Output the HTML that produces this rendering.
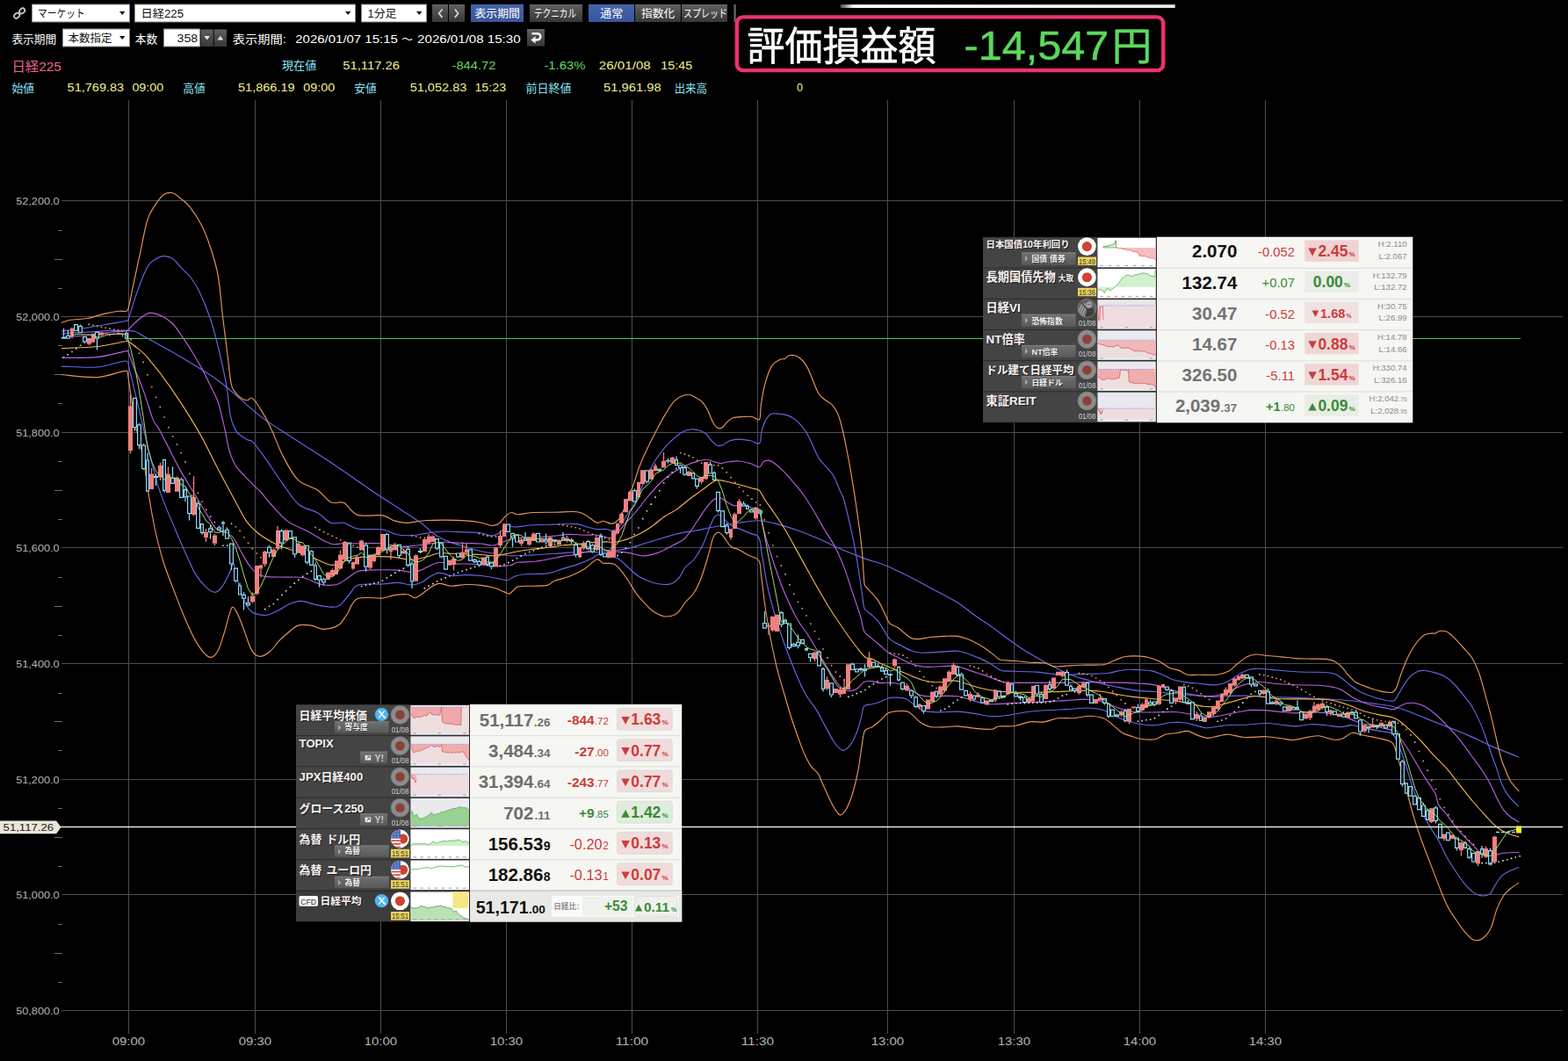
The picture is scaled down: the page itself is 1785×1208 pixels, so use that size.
<!DOCTYPE html>
<html lang="ja"><head><meta charset="utf-8"><title>日経225 チャート</title>
<style>html,body{margin:0;padding:0;background:#000;overflow:hidden}svg{display:block}text{font-family:"Liberation Sans","Noto Sans CJK JP",sans-serif}</style>
</head><body>
<svg width="1785" height="1208" viewBox="0 0 1785 1208">
<rect width="1785" height="1208" fill="#000"/>
<g stroke="#4c4c56" stroke-width="1" shape-rendering="crispEdges">
<line x1="146.5" y1="114" x2="146.5" y2="1177"/>
<line x1="290.5" y1="114" x2="290.5" y2="1177"/>
<line x1="433.5" y1="114" x2="433.5" y2="1177"/>
<line x1="576.5" y1="114" x2="576.5" y2="1177"/>
<line x1="719.5" y1="114" x2="719.5" y2="1177"/>
<line x1="862.5" y1="114" x2="862.5" y2="1177"/>
<line x1="1010.5" y1="114" x2="1010.5" y2="1177"/>
<line x1="1154.5" y1="114" x2="1154.5" y2="1177"/>
<line x1="1297.5" y1="114" x2="1297.5" y2="1177"/>
<line x1="1440.5" y1="114" x2="1440.5" y2="1177"/>
<line x1="70" y1="228.5" x2="1779" y2="228.5"/>
<line x1="70" y1="360.5" x2="1779" y2="360.5"/>
<line x1="70" y1="492.5" x2="1779" y2="492.5"/>
<line x1="70" y1="623.5" x2="1779" y2="623.5"/>
<line x1="70" y1="755.5" x2="1779" y2="755.5"/>
<line x1="70" y1="887.5" x2="1779" y2="887.5"/>
<line x1="70" y1="1018.5" x2="1779" y2="1018.5"/>
<line x1="70" y1="1150.5" x2="1779" y2="1150.5"/>
</g>
<g stroke="#6a6a72" stroke-width="1" shape-rendering="crispEdges">
<line x1="66" y1="262.5" x2="71" y2="262.5"/>
<line x1="62" y1="295.5" x2="71" y2="295.5"/>
<line x1="66" y1="328.5" x2="71" y2="328.5"/>
<line x1="66" y1="393.5" x2="71" y2="393.5"/>
<line x1="62" y1="426.5" x2="71" y2="426.5"/>
<line x1="66" y1="459.5" x2="71" y2="459.5"/>
<line x1="66" y1="525.5" x2="71" y2="525.5"/>
<line x1="62" y1="558.5" x2="71" y2="558.5"/>
<line x1="66" y1="591.5" x2="71" y2="591.5"/>
<line x1="66" y1="657.5" x2="71" y2="657.5"/>
<line x1="62" y1="690.5" x2="71" y2="690.5"/>
<line x1="66" y1="723.5" x2="71" y2="723.5"/>
<line x1="66" y1="789.5" x2="71" y2="789.5"/>
<line x1="62" y1="821.5" x2="71" y2="821.5"/>
<line x1="66" y1="854.5" x2="71" y2="854.5"/>
<line x1="66" y1="920.5" x2="71" y2="920.5"/>
<line x1="62" y1="953.5" x2="71" y2="953.5"/>
<line x1="66" y1="986.5" x2="71" y2="986.5"/>
<line x1="66" y1="1052.5" x2="71" y2="1052.5"/>
<line x1="62" y1="1085.5" x2="71" y2="1085.5"/>
<line x1="66" y1="1118.5" x2="71" y2="1118.5"/>
</g>
<text x="18.2" y="232.7" font-size="11.4" fill="#b4b4b4" textLength="49.5" lengthAdjust="spacingAndGlyphs">52,200.0</text>
<text x="18.2" y="364.7" font-size="11.4" fill="#b4b4b4" textLength="49.5" lengthAdjust="spacingAndGlyphs">52,000.0</text>
<text x="18.2" y="496.7" font-size="11.4" fill="#b4b4b4" textLength="49.5" lengthAdjust="spacingAndGlyphs">51,800.0</text>
<text x="18.2" y="627.7" font-size="11.4" fill="#b4b4b4" textLength="49.5" lengthAdjust="spacingAndGlyphs">51,600.0</text>
<text x="18.2" y="759.7" font-size="11.4" fill="#b4b4b4" textLength="49.5" lengthAdjust="spacingAndGlyphs">51,400.0</text>
<text x="18.2" y="891.7" font-size="11.4" fill="#b4b4b4" textLength="49.5" lengthAdjust="spacingAndGlyphs">51,200.0</text>
<text x="18.2" y="1022.7" font-size="11.4" fill="#b4b4b4" textLength="49.5" lengthAdjust="spacingAndGlyphs">51,000.0</text>
<text x="18.2" y="1154.7" font-size="11.4" fill="#b4b4b4" textLength="49.5" lengthAdjust="spacingAndGlyphs">50,800.0</text>
<text x="127.7" y="1190.4" font-size="12.3" fill="#b4b4b4" textLength="37.4" lengthAdjust="spacingAndGlyphs">09:00</text>
<text x="271.7" y="1190.4" font-size="12.3" fill="#b4b4b4" textLength="37.4" lengthAdjust="spacingAndGlyphs">09:30</text>
<text x="414.7" y="1190.4" font-size="12.3" fill="#b4b4b4" textLength="37.4" lengthAdjust="spacingAndGlyphs">10:00</text>
<text x="557.7" y="1190.4" font-size="12.3" fill="#b4b4b4" textLength="37.4" lengthAdjust="spacingAndGlyphs">10:30</text>
<text x="700.7" y="1190.4" font-size="12.3" fill="#b4b4b4" textLength="37.4" lengthAdjust="spacingAndGlyphs">11:00</text>
<text x="843.7" y="1190.4" font-size="12.3" fill="#b4b4b4" textLength="37.4" lengthAdjust="spacingAndGlyphs">11:30</text>
<text x="991.7" y="1190.4" font-size="12.3" fill="#b4b4b4" textLength="37.4" lengthAdjust="spacingAndGlyphs">13:00</text>
<text x="1135.7" y="1190.4" font-size="12.3" fill="#b4b4b4" textLength="37.4" lengthAdjust="spacingAndGlyphs">13:30</text>
<text x="1278.7" y="1190.4" font-size="12.3" fill="#b4b4b4" textLength="37.4" lengthAdjust="spacingAndGlyphs">14:00</text>
<text x="1421.7" y="1190.4" font-size="12.3" fill="#b4b4b4" textLength="37.4" lengthAdjust="spacingAndGlyphs">14:30</text>
<line x1="146" y1="385.5" x2="1731" y2="385.5" stroke="#4fc84f" stroke-width="1.2"/>
<path d="M70.0,380.0C74.2,379.7 82.3,379.0 95.0,378.4C107.7,377.8 133.9,375.3 146.0,376.4C158.1,377.5 153.5,377.6 167.6,385.1C181.7,392.6 215.9,412.2 230.8,421.4C245.7,430.5 247.5,432.4 257.0,440.0C266.5,447.6 280.7,460.8 287.9,466.9C295.1,473.0 294.4,472.6 300.0,476.6C305.6,480.6 312.3,485.1 321.5,491.1C330.7,497.1 345.4,506.3 355.1,512.6C364.9,518.9 368.3,520.8 380.0,528.7C391.7,536.6 408.5,548.8 425.2,560.0C441.9,571.2 469.2,588.5 480.0,596.0C490.1,603.5 486.7,602.4 490.1,605.0C493.5,607.6 496.3,609.7 500.2,611.8C504.1,613.9 508.6,615.8 513.6,617.6C518.6,619.4 524.8,621.0 530.4,622.7C536.0,624.4 541.6,626.4 547.2,627.7C552.8,629.0 558.4,629.4 564.0,630.3C569.6,631.1 573.8,632.5 580.8,632.8C587.8,633.1 597.7,632.3 606.1,631.9C614.5,631.5 622.9,630.8 631.3,630.3C639.7,629.8 648.1,628.9 656.5,628.6C664.9,628.3 674.7,628.9 681.7,628.6C688.7,628.3 692.9,627.6 698.5,626.9C704.1,626.2 709.7,625.7 715.3,624.4C720.9,623.1 726.5,621.0 732.1,619.3C737.7,617.6 743.3,616.0 748.9,614.3C754.5,612.6 760.5,610.6 765.7,609.2C770.9,607.8 776.0,606.7 780.0,605.9C784.0,605.1 784.1,605.6 790.0,604.5C795.9,603.4 806.8,601.0 815.2,599.5C823.6,598.0 832.3,596.4 840.4,595.3C848.5,594.2 856.9,592.7 863.9,592.8C870.9,592.9 875.1,594.3 882.4,596.1C889.7,597.9 899.2,600.8 907.6,603.7C916.0,606.7 924.5,610.2 932.9,613.8C941.3,617.4 949.7,621.9 958.1,625.5C966.5,629.1 974.9,632.5 983.3,635.6C991.7,638.7 1000.1,640.6 1008.5,644.0C1016.9,647.4 1025.3,651.6 1033.7,655.8C1042.1,660.0 1049.5,664.2 1058.9,669.2C1068.3,674.2 1081.7,680.9 1090.0,686.0C1098.3,691.1 1102.1,695.3 1108.8,700.0C1115.5,704.7 1123.7,709.9 1130.0,714.4C1136.3,718.9 1141.2,723.0 1146.8,727.0C1152.4,731.0 1158.0,735.1 1163.6,738.7C1169.2,742.3 1174.8,745.6 1180.4,748.8C1186.0,752.0 1191.6,755.1 1197.2,758.1C1202.8,761.1 1208.4,764.1 1214.0,766.5C1219.6,768.9 1225.2,770.7 1230.8,772.4C1236.4,774.1 1242.0,775.2 1247.6,776.6C1253.2,778.0 1258.9,779.5 1264.5,780.8C1270.1,782.0 1275.7,783.1 1281.3,784.1C1286.9,785.1 1292.5,786.0 1298.1,786.6C1303.7,787.2 1309.3,787.1 1314.9,787.5C1320.5,787.9 1326.1,788.7 1331.7,789.2C1337.3,789.8 1342.9,790.2 1348.5,790.8C1354.1,791.3 1359.7,792.1 1365.3,792.5C1370.9,792.9 1376.5,793.4 1382.1,793.4C1387.7,793.4 1393.1,792.7 1398.9,792.5C1404.7,792.3 1409.6,792.0 1416.8,792.1C1424.0,792.2 1433.6,793.0 1442.0,793.3C1450.4,793.6 1458.8,793.8 1467.2,794.1C1475.6,794.4 1484.0,794.6 1492.4,795.0C1500.8,795.4 1509.2,795.8 1517.6,796.3C1526.0,796.8 1534.5,797.4 1542.9,798.3C1551.3,799.2 1561.1,800.7 1568.1,801.7C1575.1,802.7 1579.3,803.0 1584.9,804.2C1590.5,805.5 1596.1,807.2 1601.7,809.2C1607.3,811.2 1612.9,813.8 1618.5,816.0C1624.1,818.2 1629.7,820.5 1635.3,822.7C1640.9,824.9 1646.5,827.2 1652.1,829.4C1657.7,831.6 1663.3,833.7 1668.9,836.1C1674.5,838.5 1680.5,841.3 1685.7,843.7C1690.9,846.1 1692.8,847.4 1700.0,850.4C1707.2,853.4 1724.2,860.1 1729.0,862.0" fill="none" stroke="#6666e6" stroke-width="1.15" stroke-linejoin="round"/>
<path d="M70.0,367.4C71.7,366.9 75.2,365.1 80.2,364.3C85.2,363.5 93.6,363.5 100.3,362.3C107.0,361.1 114.7,358.2 120.5,356.9C126.3,355.5 131.4,354.6 135.3,354.2C139.2,353.8 142.1,355.0 144.0,354.2C145.9,353.4 145.3,354.2 146.5,349.6C147.7,345.1 149.1,336.6 151.2,326.9C153.2,317.2 156.1,304.2 158.8,291.6C161.5,279.0 164.7,260.9 167.6,251.2C170.5,241.5 173.3,238.5 176.5,233.6C179.7,228.7 183.2,223.8 186.5,221.5C189.8,219.2 193.7,219.1 196.6,219.7C199.5,220.2 201.0,222.3 204.2,224.8C207.3,227.3 211.3,229.7 215.5,234.9C219.7,240.2 225.4,248.5 229.4,256.3C233.4,264.1 236.3,271.8 239.5,281.5C242.7,291.2 246.0,301.1 248.3,314.3C250.7,327.6 251.8,346.1 253.6,361.0C255.4,375.9 257.4,391.5 259.0,404.0C260.6,416.5 261.7,429.3 263.0,436.2C264.3,443.1 265.0,442.7 267.0,445.6C269.0,448.5 272.6,452.0 275.1,453.7C277.6,455.4 279.9,455.8 281.9,455.7C283.9,455.6 284.6,451.5 287.2,453.4C289.8,455.3 293.6,460.8 297.3,466.9C301.0,472.9 305.4,481.2 309.4,489.7C313.4,498.2 316.6,508.6 321.5,518.0C326.4,527.4 332.3,539.5 339.0,546.2C345.7,552.9 355.6,554.0 361.8,558.3C368.1,562.6 371.5,569.4 376.5,571.8C381.5,574.2 386.6,570.2 391.6,572.6C396.6,575.0 399.4,583.7 406.7,586.1C414.0,588.5 428.3,585.8 435.3,586.9C442.3,588.0 444.2,591.4 448.7,592.8C453.2,594.2 456.6,595.3 462.2,595.3C467.8,595.3 475.2,593.3 482.4,592.8C489.6,592.3 497.2,592.1 505.2,592.1C513.2,592.1 523.4,592.4 530.4,592.9C537.4,593.4 542.4,594.1 547.2,595.0C552.0,595.9 555.6,598.0 559.0,598.3C562.4,598.6 564.6,598.4 567.4,596.6C570.2,594.8 573.3,589.6 575.8,587.4C578.3,585.2 580.3,583.8 582.5,583.5C584.7,583.2 585.3,585.7 589.2,585.7C593.1,585.7 599.1,583.9 606.1,583.5C613.1,583.1 622.9,583.3 631.3,583.2C639.7,583.1 650.4,582.0 656.5,582.7C662.6,583.4 664.4,585.4 668.2,587.4C672.0,589.4 676.1,594.0 679.2,595.0C682.3,596.0 684.1,593.1 686.7,593.3C689.4,593.5 692.9,595.8 695.1,596.1C697.4,596.4 698.2,596.5 700.2,595.0C702.2,593.5 704.4,592.0 706.9,587.4C709.4,582.8 712.9,573.1 715.3,567.2C717.6,561.3 718.8,558.2 721.0,552.0C723.2,545.8 725.8,536.8 728.4,530.0C731.0,523.2 733.7,517.5 736.8,511.0C739.9,504.5 743.5,497.2 746.9,490.8C750.3,484.4 753.6,478.0 757.0,472.4C760.4,466.8 764.0,460.7 767.1,457.2C770.2,453.7 772.6,452.6 775.5,451.3C778.4,450.0 781.9,449.0 784.7,449.3C787.5,449.6 789.9,451.7 792.3,453.0C794.7,454.3 796.8,454.8 799.0,457.2C801.2,459.6 803.6,463.4 805.7,467.3C807.8,471.2 809.8,477.5 811.6,480.8C813.4,484.1 814.9,486.1 816.6,487.1C818.3,488.2 819.9,488.2 821.7,487.1C823.5,486.1 825.5,482.7 827.6,480.8C829.7,478.9 831.2,476.8 834.3,475.7C837.4,474.6 842.5,474.7 846.1,474.5C849.7,474.3 853.0,474.0 856.1,474.5C859.2,475.0 862.8,479.4 864.5,477.4C866.2,475.4 865.4,468.2 866.2,462.3C867.1,456.4 868.2,448.3 869.6,442.1C871.0,435.9 872.9,429.8 874.6,425.3C876.3,420.8 877.5,417.9 879.7,415.2C882.0,412.5 885.9,410.4 888.1,409.3C890.3,408.2 891.4,409.2 893.1,408.5C894.8,407.8 896.2,405.4 898.2,404.8C900.2,404.2 902.7,404.2 904.9,404.8C907.1,405.4 909.4,406.5 911.6,408.5C913.8,410.5 916.1,413.0 918.3,416.9C920.5,420.8 922.8,426.8 925.0,432.0C927.2,437.2 929.5,444.2 931.8,448.0C934.0,451.8 936.0,452.6 938.5,454.7C941.0,456.8 944.4,457.9 946.9,460.6C949.4,463.3 951.6,466.2 953.6,470.7C955.6,475.2 957.0,480.8 958.7,487.5C960.4,494.2 962.0,502.6 963.7,511.0C965.4,519.4 967.0,528.1 968.7,537.9C970.4,547.7 972.4,560.6 973.8,569.8C975.2,579.0 976.2,586.8 977.1,593.0C978.0,599.2 978.4,600.8 979.1,607.1C979.9,613.4 980.9,622.5 981.6,630.6C982.3,638.7 982.8,649.8 983.3,655.8C983.8,661.8 983.3,663.4 984.6,666.5C986.0,669.6 989.1,671.3 991.7,674.3C994.3,677.3 997.3,679.9 1000.1,684.4C1002.9,688.9 1006.4,697.0 1008.5,701.2C1010.6,705.4 1010.5,707.4 1012.7,709.6C1014.9,711.8 1019.0,712.7 1021.9,714.6C1024.8,716.5 1027.8,719.3 1030.3,721.3C1032.8,723.3 1034.6,725.3 1037.1,726.4C1039.6,727.5 1041.9,727.8 1045.5,727.6C1049.1,727.5 1053.9,726.0 1058.9,725.5C1063.9,725.0 1070.5,724.6 1075.7,724.4C1080.9,724.2 1085.9,723.8 1090.3,724.4C1094.7,725.0 1098.2,726.2 1102.1,727.7C1106.0,729.2 1110.0,731.4 1113.9,733.6C1117.8,735.9 1122.2,738.8 1125.6,741.2C1128.9,743.6 1131.8,746.2 1134.0,747.9C1136.2,749.6 1135.6,750.5 1139.1,751.3C1142.6,752.1 1149.7,752.0 1155.2,752.5C1160.7,753.0 1166.4,753.8 1172.0,754.2C1177.6,754.6 1184.0,753.9 1188.8,754.7C1193.6,755.5 1196.4,758.3 1200.6,758.9C1204.8,759.5 1209.0,758.4 1214.0,758.1C1219.0,757.8 1223.8,757.4 1230.8,757.2C1237.8,757.0 1249.9,757.5 1256.1,756.7C1262.3,755.9 1263.6,753.7 1267.8,752.2C1272.0,750.7 1276.2,748.4 1281.3,747.5C1286.3,746.6 1293.6,746.9 1298.1,747.1C1302.6,747.3 1304.6,747.8 1308.2,748.8C1311.8,749.8 1316.0,751.0 1319.9,753.0C1323.8,755.0 1328.1,758.9 1331.7,760.6C1335.3,762.3 1338.5,761.8 1341.8,763.1C1345.1,764.4 1347.9,767.4 1351.8,768.2C1355.7,769.1 1359.7,768.2 1365.3,768.2C1370.9,768.2 1379.9,768.9 1385.5,768.2C1391.1,767.5 1395.0,766.0 1398.9,763.9C1402.8,761.8 1405.6,758.1 1409.0,755.5C1412.4,752.9 1415.6,749.8 1419.1,748.0C1422.6,746.2 1426.5,745.3 1430.0,745.0C1433.5,744.7 1435.5,745.7 1440.3,746.2C1445.1,746.7 1452.9,747.3 1458.8,747.9C1464.7,748.5 1470.0,749.2 1475.6,749.6C1481.2,750.0 1486.8,750.0 1492.4,750.1C1498.0,750.2 1504.7,749.9 1509.2,750.4C1513.7,750.9 1516.2,751.3 1519.3,752.9C1522.4,754.5 1525.2,757.2 1527.7,759.7C1530.2,762.2 1532.0,765.3 1534.5,768.1C1537.0,770.9 1540.1,774.5 1542.9,776.5C1545.7,778.5 1548.2,779.0 1551.3,780.3C1554.4,781.5 1557.7,782.8 1561.3,784.0C1564.9,785.2 1569.2,786.7 1573.1,787.4C1577.0,788.1 1582.1,789.0 1584.9,788.2C1587.7,787.4 1588.2,785.9 1589.9,782.4C1591.6,778.9 1593.0,772.5 1595.0,767.2C1597.0,761.9 1599.2,755.7 1601.7,750.4C1604.2,745.1 1607.3,739.5 1610.1,735.3C1612.9,731.1 1616.0,727.5 1618.5,725.2C1621.0,722.9 1622.7,722.2 1625.2,721.5C1627.7,720.8 1631.3,721.5 1633.6,721.0C1635.8,720.5 1636.5,718.8 1638.7,718.5C1641.0,718.2 1644.3,718.0 1647.1,719.3C1649.9,720.6 1652.4,723.1 1655.5,726.1C1658.6,729.1 1662.2,733.2 1665.5,737.0C1668.8,740.8 1672.5,743.7 1675.6,748.7C1678.7,753.7 1681.5,760.2 1684.0,767.2C1686.5,774.2 1688.8,783.8 1690.8,790.8C1692.8,797.8 1694.3,803.3 1695.8,809.2C1697.3,815.1 1698.0,817.6 1700.0,826.1C1702.0,834.6 1705.9,852.4 1707.9,860.0C1709.9,867.6 1709.9,866.8 1711.8,871.7C1713.7,876.6 1716.6,884.3 1719.5,889.2C1722.4,894.1 1727.7,899.0 1729.3,900.9" fill="none" stroke="#e8955a" stroke-width="1.15" stroke-linejoin="round"/>
<path d="M70.0,426.5C76.8,427.0 98.7,430.2 111.0,429.5C123.3,428.8 138.2,422.0 144.0,422.1C146.0,422.2 145.2,425.6 146.0,430.0C146.8,434.4 147.2,438.8 148.7,448.3C150.2,457.8 152.6,474.9 155.0,487.0C157.4,499.1 160.6,508.4 162.9,520.7C165.2,533.0 166.7,547.5 168.9,561.0C171.1,574.5 173.4,588.8 176.3,602.0C179.2,615.2 182.2,627.4 186.1,640.0C190.0,652.6 196.0,667.1 200.0,677.6C204.0,688.1 206.5,694.5 210.1,702.9C213.7,711.3 217.9,721.1 221.8,728.1C225.7,735.1 230.4,741.5 233.6,744.9C236.8,748.2 238.7,749.1 241.2,748.2C243.7,747.4 246.3,744.5 248.7,739.8C251.1,735.0 253.0,727.5 255.5,719.7C258.0,711.9 261.3,696.7 263.5,692.8C265.7,688.9 266.9,693.0 268.9,696.1C270.9,699.2 273.1,704.8 275.6,711.3C278.1,717.8 281.8,729.3 284.0,734.8C286.2,740.2 287.0,741.9 289.1,744.0C291.2,746.1 293.5,747.8 296.6,747.4C299.7,747.0 304.1,744.5 307.6,741.5C311.1,738.5 314.2,733.2 317.6,729.7C321.0,726.2 324.1,723.4 327.7,720.5C331.3,717.6 335.0,713.5 339.5,712.1C344.0,710.7 349.8,711.4 354.6,712.1C359.4,712.8 363.1,716.3 368.1,716.3C373.2,716.3 380.4,714.9 384.9,712.1C389.4,709.3 391.4,704.5 395.0,699.5C398.6,694.5 400.0,684.9 406.7,681.8C413.4,678.7 428.3,681.7 435.3,681.0C442.3,680.3 443.9,678.3 448.7,677.6C453.5,676.9 460.0,676.3 463.9,676.8C467.8,677.3 469.6,680.8 472.3,680.7C475.0,680.7 477.0,678.5 480.0,676.5C483.0,674.5 486.7,670.9 490.1,668.9C493.5,666.9 496.3,664.7 500.2,664.4C504.1,664.1 508.6,667.0 513.6,667.2C518.6,667.4 524.8,665.6 530.4,665.5C536.0,665.4 541.6,665.7 547.2,666.4C552.8,667.1 559.5,668.5 564.0,669.7C568.5,671.0 571.3,672.9 574.1,673.9C576.9,674.9 578.3,676.6 580.8,675.6C583.3,674.6 585.0,669.5 589.2,668.1C593.4,666.7 600.5,667.5 606.1,667.2C611.7,666.9 618.7,667.4 622.9,666.4C627.1,665.4 627.1,663.0 631.3,661.3C635.5,659.6 642.5,658.5 648.1,656.3C653.7,654.1 659.7,651.1 664.9,647.9C670.1,644.7 675.6,638.1 679.2,637.0C682.8,635.9 683.5,640.4 686.7,641.2C689.9,642.0 695.1,640.6 698.5,642.0C701.9,643.4 704.1,646.4 706.9,649.6C709.7,652.8 712.5,657.1 715.3,661.3C718.1,665.5 720.9,670.9 723.7,674.8C726.5,678.7 729.0,681.5 732.1,684.9C735.2,688.3 738.3,692.2 742.2,695.0C746.1,697.8 751.7,700.7 755.6,701.7C759.5,702.7 762.9,701.6 765.7,700.8C768.5,699.9 770.0,699.1 772.4,696.6C774.8,694.1 777.1,689.6 780.0,686.0C782.9,682.4 786.9,679.8 790.0,675.0C793.1,670.2 795.6,664.9 798.4,657.5C801.2,650.1 804.6,638.2 806.8,630.6C809.0,623.0 810.1,616.2 811.8,612.1C813.5,608.0 815.2,606.8 816.9,606.2C818.6,605.6 819.4,606.0 821.9,608.7C824.4,611.4 828.9,619.4 832.0,622.2C835.1,625.0 837.0,623.8 840.4,625.5C843.8,627.2 848.3,630.2 852.2,632.3C856.1,634.4 861.5,634.6 863.9,638.2C866.3,641.8 865.4,645.8 866.5,654.1C867.6,662.4 869.1,676.7 870.7,688.0C872.3,699.3 874.1,710.5 876.3,722.0C878.4,733.5 881.0,746.1 883.6,757.0C886.2,767.9 888.9,776.7 892.0,787.4C895.1,798.1 898.7,810.6 902.1,821.0C905.5,831.4 909.5,842.4 912.2,849.6C914.9,856.8 916.5,860.2 918.4,864.0C920.3,867.8 921.7,870.3 923.4,872.6C925.1,874.9 927.1,876.2 928.5,877.7C929.9,879.2 930.9,879.8 932.0,881.7C933.1,883.6 933.7,886.0 935.1,889.3C936.5,892.6 938.8,897.5 940.6,901.4C942.4,905.3 944.0,909.1 945.7,912.5C947.4,915.9 949.0,919.1 950.7,921.6C952.4,924.1 954.3,926.9 955.8,927.7C957.3,928.5 958.5,927.4 959.8,926.2C961.1,925.0 962.3,923.6 963.8,920.6C965.3,917.6 967.2,913.4 968.9,908.5C970.6,903.6 972.5,896.8 973.9,891.0C975.3,885.2 976.4,880.3 977.5,874.0C978.6,867.7 979.5,859.3 980.5,853.0C981.5,846.7 982.4,839.7 983.2,836.0C984.0,832.3 983.9,832.2 985.5,830.8C987.1,829.4 990.3,829.3 992.9,827.7C995.5,826.1 998.2,823.6 1001.3,821.0C1004.4,818.4 1007.9,813.7 1011.3,811.8C1014.6,809.9 1017.8,810.0 1021.4,809.7C1025.0,809.4 1030.1,809.2 1033.2,810.1C1036.3,811.0 1037.4,813.0 1039.9,815.1C1042.4,817.2 1044.9,820.6 1048.3,822.7C1051.7,824.8 1055.3,826.9 1060.1,827.7C1064.9,828.5 1071.9,827.8 1076.9,827.7C1081.9,827.6 1084.7,826.6 1090.3,826.9C1095.9,827.2 1104.0,828.8 1110.5,829.4C1117.0,830.0 1124.6,830.7 1129.0,830.3C1133.4,829.9 1132.3,827.6 1136.7,827.0C1141.1,826.4 1149.3,827.4 1155.2,826.5C1161.1,825.6 1166.4,822.7 1172.0,821.9C1177.6,821.1 1183.5,822.6 1188.8,821.9C1194.1,821.2 1198.4,818.4 1204.0,817.7C1209.6,817.0 1216.5,818.1 1222.4,817.7C1228.3,817.3 1233.6,815.2 1239.2,815.2C1244.8,815.2 1251.3,815.9 1256.1,817.7C1260.9,819.5 1264.2,823.3 1267.8,826.1C1271.4,828.9 1274.2,832.4 1277.9,834.5C1281.6,836.6 1286.3,837.6 1289.7,838.7C1293.1,839.8 1293.9,840.8 1298.1,841.3C1302.3,841.8 1310.2,842.6 1314.9,841.8C1319.7,840.9 1322.4,837.4 1326.6,836.2C1330.8,835.0 1335.9,835.1 1340.1,834.5C1344.3,833.9 1347.6,831.8 1351.8,832.4C1356.0,833.0 1361.4,836.6 1365.3,837.9C1369.2,839.2 1371.8,840.4 1375.4,840.4C1379.0,840.4 1383.2,838.6 1387.1,837.9C1391.0,837.2 1394.0,835.9 1398.9,836.2C1403.9,836.5 1409.6,839.1 1416.8,839.5C1424.0,839.9 1435.0,838.5 1442.0,838.7C1449.0,838.9 1453.8,840.2 1458.8,840.8C1463.8,841.4 1468.1,842.6 1472.3,842.5C1476.5,842.4 1479.2,841.1 1484.0,840.3C1488.8,839.5 1495.2,837.5 1500.8,837.8C1506.4,838.1 1513.1,841.4 1517.6,842.0C1522.1,842.6 1524.0,842.5 1527.7,841.2C1531.4,840.0 1535.6,835.2 1539.5,834.5C1543.4,833.8 1546.5,836.0 1551.3,837.0C1556.1,838.0 1563.1,839.2 1568.1,840.3C1573.1,841.4 1578.4,842.4 1581.5,843.7C1584.6,845.0 1585.0,844.9 1586.6,847.9C1588.2,850.9 1589.4,856.8 1591.0,862.0C1592.6,867.2 1594.2,872.2 1596.0,879.0C1597.8,885.8 1599.6,893.9 1602.0,903.0C1604.4,912.1 1607.9,924.9 1610.6,933.9C1613.3,942.9 1615.5,949.2 1618.4,957.3C1621.3,965.4 1624.9,974.2 1628.1,982.6C1631.3,991.0 1634.6,999.8 1637.8,1007.9C1641.0,1016.0 1644.2,1024.7 1647.5,1031.2C1650.8,1037.7 1654.0,1041.9 1657.3,1046.8C1660.5,1051.7 1663.8,1056.6 1667.0,1060.4C1670.2,1064.2 1673.8,1068.1 1676.7,1069.7C1679.6,1071.3 1681.9,1071.0 1684.5,1070.1C1687.1,1069.2 1690.0,1066.9 1692.3,1064.3C1694.6,1061.7 1696.1,1059.5 1698.1,1054.6C1700.0,1049.7 1701.7,1040.9 1704.0,1035.1C1706.3,1029.2 1709.2,1023.4 1711.8,1019.5C1714.4,1015.6 1716.6,1014.2 1719.5,1011.8C1722.4,1009.4 1727.7,1006.0 1729.3,1004.9" fill="none" stroke="#e8955a" stroke-width="1.15" stroke-linejoin="round"/>
<path d="M70.0,377.0C74.2,376.4 86.7,374.9 95.0,373.7C103.3,372.4 111.8,370.9 120.0,369.5C128.2,368.1 139.6,366.4 144.0,365.2C146.5,364.0 144.4,367.8 146.5,362.2C148.6,356.6 152.8,341.6 156.3,331.9C159.8,322.2 164.2,310.3 167.6,304.2C171.0,298.1 173.3,297.5 176.5,295.4C179.7,293.3 183.2,291.7 186.5,291.6C189.8,291.5 193.2,292.3 196.6,294.6C200.0,296.9 203.3,301.9 206.7,305.4C210.1,308.9 213.4,311.1 216.8,315.5C220.2,319.9 223.2,324.3 226.9,331.9C230.6,339.5 235.2,350.6 238.8,361.0C242.4,371.4 245.1,381.7 248.2,394.5C251.3,407.3 255.2,424.4 257.6,437.6C260.0,450.8 260.5,464.7 262.4,473.6C264.3,482.5 266.0,486.6 269.1,491.1C272.2,495.6 278.1,498.5 281.2,500.5C284.3,502.5 284.5,499.8 287.9,503.2C291.2,506.6 295.7,512.9 301.3,520.7C306.9,528.6 315.0,541.3 321.5,550.3C328.0,559.3 333.6,568.9 340.3,574.5C347.0,580.1 355.8,580.4 361.8,583.9C367.8,587.4 371.5,593.4 376.5,595.3C381.5,597.2 386.6,594.2 391.6,595.3C396.6,596.4 399.4,600.7 406.7,602.0C414.0,603.3 427.7,601.8 435.3,602.9C442.9,604.0 446.5,607.6 452.1,608.7C457.7,609.8 463.3,609.9 468.9,609.6C474.5,609.3 479.6,607.9 485.7,607.1C491.8,606.3 497.8,605.2 505.2,605.0C512.6,604.8 523.4,605.6 530.4,605.9C537.4,606.2 542.4,606.0 547.2,606.7C552.0,607.4 555.6,610.0 559.0,610.1C562.4,610.2 564.9,609.0 567.4,607.6C569.9,606.2 571.9,603.1 574.1,601.7C576.3,600.3 578.5,599.5 580.8,599.2C583.0,598.9 583.4,600.2 587.6,600.0C591.8,599.8 598.8,598.3 606.1,597.8C613.4,597.3 622.9,597.3 631.3,597.1C639.7,596.9 650.4,596.1 656.5,596.6C662.6,597.1 664.4,599.0 668.2,600.0C672.0,601.0 675.6,602.1 679.2,602.5C682.9,602.9 686.9,602.2 690.1,602.5C693.3,602.8 696.0,604.8 698.5,604.2C701.0,603.7 702.4,602.6 705.2,599.2C708.0,595.8 712.5,588.2 715.3,584.0C718.1,579.8 719.8,578.0 722.0,574.0C724.2,570.0 725.9,565.5 728.4,560.0C730.9,554.5 733.7,547.5 736.8,541.3C739.9,535.1 743.5,528.1 746.9,522.8C750.3,517.5 753.6,513.2 757.0,509.3C760.4,505.4 763.8,502.1 767.1,499.2C770.5,496.3 773.8,493.4 777.1,491.7C780.5,489.9 783.8,488.9 787.2,488.7C790.6,488.5 794.5,489.6 797.3,490.5C800.1,491.4 801.8,492.2 804.0,494.2C806.2,496.2 808.7,500.4 810.8,502.6C812.9,504.8 814.6,506.6 816.6,507.3C818.6,508.0 820.1,507.7 822.5,506.8C824.9,505.9 827.8,502.9 830.9,501.8C834.0,500.7 837.1,500.1 841.0,500.1C844.9,500.1 850.6,501.0 854.5,501.8C858.4,502.6 862.4,506.6 864.5,504.8C866.6,503.0 866.0,495.1 867.1,490.8C868.2,486.5 869.5,482.4 871.3,479.1C873.1,475.8 875.2,472.5 878.0,471.2C880.8,469.9 885.0,471.2 888.1,471.5C891.2,471.8 893.7,471.9 896.5,472.9C899.3,473.9 902.1,475.2 904.9,477.4C907.7,479.5 910.5,482.2 913.3,485.8C916.1,489.4 919.2,494.4 921.7,499.2C924.2,504.0 926.5,510.3 928.4,514.4C930.3,518.5 931.2,520.5 933.4,523.6C935.6,526.7 939.3,530.0 941.8,532.9C944.3,535.8 946.4,537.4 948.6,541.3C950.9,545.2 953.4,552.1 955.3,556.4C957.2,560.7 958.4,562.2 960.0,567.0C961.6,571.8 962.9,577.1 964.8,585.2C966.7,593.3 969.5,605.7 971.5,615.5C973.5,625.3 974.9,633.6 976.6,644.0C978.3,654.4 980.4,669.5 981.6,677.6C982.9,685.7 982.4,689.1 984.1,692.8C985.8,696.4 989.0,697.0 991.7,699.5C994.4,702.0 997.3,704.3 1000.1,707.9C1002.9,711.5 1006.3,717.9 1008.5,721.3C1010.7,724.7 1010.7,725.9 1013.5,728.1C1016.3,730.4 1021.4,732.7 1025.3,734.8C1029.2,736.9 1033.2,739.3 1037.1,740.7C1041.0,742.1 1043.8,742.9 1048.8,743.2C1053.8,743.5 1060.4,742.7 1067.3,742.4C1074.2,742.1 1084.5,740.9 1090.3,741.2C1096.1,741.6 1097.9,743.1 1102.1,744.5C1106.3,745.9 1111.3,747.8 1115.5,749.6C1119.7,751.4 1123.6,753.4 1127.3,755.5C1131.0,757.6 1134.9,760.8 1137.4,762.2C1139.9,763.6 1139.4,763.5 1142.4,763.9C1145.4,764.2 1148.9,764.1 1155.2,764.3C1161.5,764.5 1173.4,764.6 1180.4,765.1C1187.4,765.6 1191.6,766.8 1197.2,767.3C1202.8,767.8 1207.0,768.2 1214.0,768.2C1221.0,768.2 1231.4,767.6 1239.2,767.3C1247.0,767.0 1255.5,767.1 1261.1,766.5C1266.7,765.9 1269.0,764.6 1272.9,763.9C1276.8,763.2 1280.4,762.5 1284.6,762.3C1288.8,762.1 1293.6,762.5 1298.1,762.8C1302.6,763.1 1307.3,763.0 1311.5,763.9C1315.7,764.8 1319.4,766.6 1323.3,768.2C1327.2,769.8 1330.8,772.3 1335.0,773.7C1339.2,775.1 1343.5,775.9 1348.5,776.6C1353.5,777.4 1359.7,777.7 1365.3,778.2C1370.9,778.8 1377.6,779.9 1382.1,779.9C1386.6,779.9 1388.8,779.3 1392.2,778.2C1395.6,777.1 1398.9,775.2 1402.3,773.2C1405.7,771.2 1409.1,768.3 1412.4,766.5C1415.8,764.7 1419.4,763.2 1422.4,762.3C1425.4,761.4 1427.3,761.4 1430.3,761.3C1433.3,761.2 1435.5,761.4 1440.3,761.8C1445.0,762.2 1452.9,763.0 1458.8,763.5C1464.7,764.0 1470.0,764.4 1475.6,764.7C1481.2,765.0 1486.8,765.1 1492.4,765.2C1498.0,765.3 1504.7,765.2 1509.2,765.5C1513.7,765.8 1516.2,766.1 1519.3,767.2C1522.4,768.3 1524.6,770.0 1527.7,772.3C1530.8,774.5 1533.9,777.9 1537.8,780.7C1541.7,783.5 1546.2,786.7 1551.3,789.1C1556.3,791.5 1562.5,793.5 1568.1,795.0C1573.7,796.5 1581.3,798.4 1584.9,798.3C1588.5,798.1 1588.0,796.8 1589.9,794.1C1591.9,791.5 1594.1,786.3 1596.6,782.4C1599.1,778.5 1602.2,773.5 1605.0,770.6C1607.8,767.7 1610.6,765.9 1613.4,764.7C1616.2,763.5 1618.2,763.2 1621.8,763.5C1625.4,763.8 1631.4,765.2 1635.3,766.4C1639.2,767.6 1642.0,768.5 1645.4,770.6C1648.8,772.7 1652.2,775.6 1655.5,779.0C1658.8,782.4 1662.2,786.6 1665.5,790.8C1668.8,795.0 1672.2,798.6 1675.6,804.2C1679.0,809.8 1682.6,817.1 1685.7,824.4C1688.8,831.7 1691.7,841.2 1694.1,847.9C1696.5,854.6 1698.3,860.1 1700.0,864.7C1701.7,869.3 1702.4,870.9 1704.0,875.6C1705.6,880.3 1707.5,887.9 1709.8,893.1C1712.1,898.3 1714.3,902.5 1717.6,906.7C1720.8,910.9 1727.3,916.5 1729.3,918.4" fill="none" stroke="#6666e6" stroke-width="1.15" stroke-linejoin="round"/>
<path d="M70.0,417.1C76.8,417.2 98.7,419.0 111.0,418.0C123.3,417.0 137.9,410.4 144.0,411.0C147.4,411.6 145.7,415.2 147.4,421.4C149.1,427.6 151.1,435.8 154.1,448.3C157.1,460.8 161.1,478.8 165.5,496.5C169.9,514.2 174.7,536.7 180.3,554.3C185.9,571.9 194.2,589.9 199.2,602.0C204.2,614.1 206.3,618.8 210.1,627.2C213.9,635.6 217.9,645.7 221.8,652.4C225.7,659.1 229.8,664.0 233.6,667.6C237.4,671.2 241.4,674.0 244.5,674.3C247.6,674.6 249.4,672.6 252.1,669.2C254.8,665.8 258.3,658.6 260.5,654.1C262.7,649.6 264.2,642.7 265.5,642.0C266.8,641.3 266.8,645.3 268.0,650.0C269.2,654.7 271.0,663.7 273.0,670.0C275.0,676.3 277.7,683.5 280.0,688.0C282.3,692.5 284.6,695.1 287.0,697.0C289.4,698.9 291.2,699.0 294.1,699.5C297.0,700.0 300.3,701.1 304.2,700.3C308.1,699.5 313.4,696.6 317.6,694.5C321.8,692.4 325.2,689.4 329.4,687.7C333.6,686.0 337.8,684.2 342.9,684.4C347.9,684.5 354.1,687.5 359.7,688.6C365.3,689.7 372.0,691.0 376.5,691.1C381.0,691.2 383.0,691.9 386.6,689.4C390.2,686.9 394.7,679.9 398.3,676.0C401.9,672.1 402.2,667.7 408.4,665.9C414.6,664.1 428.0,665.4 435.3,665.0C442.6,664.6 446.5,663.2 452.1,663.4C457.7,663.5 464.2,666.0 468.9,665.9C473.5,665.8 476.5,664.6 480.0,663.0C483.5,661.4 486.7,658.1 490.1,656.3C493.5,654.5 496.3,652.2 500.2,652.1C504.1,652.0 508.6,655.1 513.6,655.5C518.6,655.9 524.8,654.6 530.4,654.6C536.0,654.6 541.6,654.9 547.2,655.5C552.8,656.1 559.0,657.2 564.0,658.0C569.0,658.8 573.9,660.8 577.5,660.5C581.1,660.2 582.5,657.4 585.9,656.3C589.2,655.2 591.4,654.4 597.6,653.8C603.8,653.2 615.9,653.9 622.9,652.9C629.9,651.9 634.1,649.6 639.7,647.9C645.3,646.2 650.9,644.9 656.5,642.9C662.1,640.9 669.1,638.1 673.3,636.1C677.5,634.1 678.6,631.7 681.7,631.1C684.8,630.5 688.2,632.0 691.8,632.8C695.4,633.6 699.6,633.9 703.5,636.1C707.4,638.3 711.4,642.8 715.3,646.2C719.2,649.6 722.6,653.5 727.1,656.3C731.6,659.1 737.5,661.5 742.2,663.0C747.0,664.5 751.7,665.4 755.6,665.5C759.5,665.6 762.6,665.4 765.7,663.9C768.8,662.4 771.7,659.3 774.1,656.3C776.5,653.3 777.4,649.2 780.0,646.0C782.6,642.8 786.6,641.2 790.0,637.0C793.4,632.8 797.0,626.9 800.1,620.5C803.2,614.1 806.3,604.0 808.5,598.7C810.7,593.4 811.8,590.7 813.5,588.6C815.2,586.5 816.9,585.8 818.6,586.1C820.3,586.4 821.4,588.3 823.6,590.3C825.8,592.2 828.6,595.7 832.0,597.8C835.4,599.9 840.1,601.3 843.8,602.9C847.4,604.5 850.5,605.6 853.9,607.1C857.2,608.6 861.7,608.2 863.9,612.1C866.1,616.0 865.6,621.1 867.3,630.6C869.0,640.1 871.3,656.8 874.0,669.2C876.7,681.6 880.3,694.0 883.6,705.0C886.9,716.0 890.1,724.9 893.7,735.0C897.4,745.1 901.6,756.2 905.5,765.5C909.4,774.8 913.3,783.8 917.2,790.8C921.1,797.8 925.4,801.7 929.0,807.6C932.6,813.5 935.7,820.0 939.1,826.1C942.5,832.2 946.4,840.2 949.2,844.5C952.0,848.8 954.0,850.5 955.9,852.1C957.8,853.7 958.9,854.9 960.9,854.3C962.9,853.7 965.4,851.7 967.6,848.7C969.9,845.7 972.3,841.3 974.4,836.1C976.5,830.9 978.8,822.9 980.3,817.6C981.8,812.3 981.5,806.9 983.6,804.2C985.7,801.6 990.0,802.5 992.9,801.7C995.8,800.9 998.2,800.3 1001.3,799.2C1004.4,798.1 1007.9,795.9 1011.3,795.0C1014.6,794.1 1018.0,794.0 1021.4,794.1C1024.8,794.2 1028.4,794.5 1031.5,795.8C1034.6,797.1 1037.1,799.7 1039.9,801.7C1042.7,803.7 1045.8,806.2 1048.3,807.6C1050.8,809.0 1051.1,809.6 1055.0,810.1C1058.9,810.6 1065.9,810.9 1071.8,810.9C1077.7,810.9 1083.8,809.8 1090.3,810.1C1096.8,810.4 1104.0,811.7 1110.5,812.6C1117.0,813.5 1123.0,815.3 1129.0,815.6C1135.0,815.9 1139.6,815.3 1146.8,814.4C1154.0,813.5 1163.6,811.2 1172.0,810.2C1180.4,809.2 1190.2,808.9 1197.2,808.5C1204.2,808.1 1207.0,808.0 1214.0,807.6C1221.0,807.2 1232.2,805.9 1239.2,806.0C1246.2,806.1 1251.0,807.0 1256.1,808.5C1261.1,810.0 1265.3,813.2 1269.5,815.2C1273.7,817.2 1276.5,818.8 1281.3,820.3C1286.1,821.8 1292.5,823.6 1298.1,824.5C1303.7,825.4 1309.3,826.1 1314.9,825.8C1320.5,825.5 1326.1,823.3 1331.7,822.8C1337.3,822.3 1343.5,822.2 1348.5,822.8C1353.5,823.3 1357.7,825.1 1361.9,826.1C1366.1,827.1 1369.5,828.6 1373.7,828.7C1377.9,828.9 1382.3,827.6 1387.1,827.0C1391.9,826.4 1397.3,825.6 1402.3,825.3C1407.2,825.0 1410.2,825.5 1416.8,825.2C1423.4,824.9 1435.0,823.5 1442.0,823.5C1449.0,823.5 1453.2,824.6 1458.8,825.2C1464.4,825.8 1470.0,827.0 1475.6,826.9C1481.2,826.8 1486.8,824.9 1492.4,824.7C1498.0,824.5 1503.6,825.2 1509.2,825.7C1514.8,826.2 1521.0,827.7 1526.1,827.7C1531.1,827.7 1535.3,825.6 1539.5,825.7C1543.7,825.9 1546.5,827.6 1551.3,828.6C1556.1,829.6 1562.8,830.9 1568.1,831.9C1573.4,832.9 1579.8,833.2 1583.2,834.5C1586.6,835.8 1586.5,836.7 1588.2,839.5C1589.9,842.3 1591.3,846.2 1593.3,851.3C1595.3,856.4 1597.7,863.0 1600.0,870.0C1602.3,877.0 1604.8,886.3 1607.0,893.0C1609.2,899.7 1611.1,904.8 1613.0,910.0C1614.9,915.2 1615.9,918.9 1618.4,924.2C1620.9,929.5 1624.9,936.2 1628.1,941.7C1631.3,947.2 1634.6,951.5 1637.8,957.3C1641.0,963.1 1644.2,970.9 1647.5,976.7C1650.8,982.5 1654.0,987.4 1657.3,992.3C1660.5,997.2 1663.8,1002.0 1667.0,1005.9C1670.2,1009.8 1673.5,1013.3 1676.7,1015.6C1680.0,1017.9 1683.2,1019.6 1686.5,1019.9C1689.8,1020.2 1693.6,1019.6 1696.2,1017.6C1698.8,1015.6 1699.7,1011.3 1702.0,1007.9C1704.3,1004.5 1706.9,1000.0 1709.8,997.2C1712.7,994.4 1716.2,992.9 1719.5,991.3C1722.8,989.7 1727.7,988.0 1729.3,987.4" fill="none" stroke="#6666e6" stroke-width="1.15" stroke-linejoin="round"/>
<path d="M70.0,384.5C75.0,384.0 90.8,382.5 100.0,381.5C109.2,380.5 117.7,379.4 125.0,378.5C132.3,377.6 140.4,377.0 144.0,376.4C146.5,375.8 144.3,377.0 146.5,375.0C148.7,373.0 153.3,367.6 157.0,364.5C160.7,361.4 165.7,357.8 168.9,356.6C172.2,355.4 173.6,356.4 176.5,357.1C179.4,357.8 183.1,359.0 186.5,361.0C189.9,363.0 193.4,365.2 197.0,369.0C200.6,372.8 204.2,378.5 207.9,383.8C211.6,389.1 215.2,394.7 219.0,401.0C222.8,407.3 227.4,415.1 230.8,421.4C234.2,427.7 236.6,432.9 239.5,439.0C242.4,445.1 245.5,449.7 248.2,457.7C250.9,465.7 253.5,478.0 255.6,487.1C257.7,496.2 258.8,505.2 261.0,512.6C263.2,520.0 264.6,524.9 269.1,531.4C273.6,537.9 283.2,546.7 287.9,551.6C292.6,556.5 293.9,557.1 297.5,561.0C301.1,564.9 304.2,569.6 309.2,575.0C314.2,580.4 320.7,588.5 327.7,593.6C334.7,598.7 344.6,601.8 351.3,605.4C358.0,609.0 363.4,613.1 368.1,615.5C372.9,617.9 376.2,619.2 379.8,619.7C383.4,620.2 384.8,618.9 389.9,618.8C394.9,618.6 402.5,618.8 410.1,618.8C417.7,618.8 427.7,618.2 435.3,618.8C442.9,619.4 449.7,621.8 455.5,622.2C461.3,622.7 465.9,621.8 470.0,621.5C474.1,621.2 476.7,620.7 480.0,620.3C483.3,619.9 486.7,619.5 490.0,619.0C493.3,618.5 497.2,617.8 500.0,617.5C502.8,617.2 504.7,617.0 507.0,617.0C509.3,617.0 509.7,617.4 513.6,617.6C517.5,617.9 524.8,618.3 530.4,618.5C536.0,618.7 542.2,618.6 547.2,619.0C552.2,619.4 556.8,621.2 560.7,621.0C564.6,620.8 567.4,618.7 570.8,617.6C574.1,616.5 576.3,615.3 580.8,614.3C585.3,613.3 592.0,612.2 597.6,611.8C603.2,611.4 608.9,612.1 614.5,611.8C620.1,611.5 625.7,610.7 631.3,610.1C636.9,609.5 642.5,608.5 648.1,608.4C653.7,608.2 659.3,609.1 664.9,609.2C670.5,609.3 676.7,608.6 681.7,609.2C686.7,609.8 691.5,613.2 695.1,612.6C698.7,612.0 700.7,608.7 703.5,605.9C706.3,603.1 708.5,599.6 711.9,595.8C715.3,592.0 719.5,588.0 723.7,583.0C727.9,578.0 732.1,571.8 737.0,566.0C741.9,560.2 747.8,553.3 753.0,548.5C758.2,543.7 762.9,540.3 768.0,537.0C773.1,533.7 779.6,530.7 783.9,528.7C788.2,526.8 790.5,526.2 793.9,525.3C797.2,524.4 800.6,523.2 804.0,523.3C807.4,523.4 811.3,525.4 814.1,526.1C816.9,526.8 818.3,527.5 820.8,527.5C823.3,527.5 825.8,526.2 829.2,525.8C832.6,525.4 836.8,524.7 841.0,525.0C845.2,525.3 850.6,526.7 854.5,527.8C858.4,528.9 862.1,532.0 864.5,531.7C866.9,531.4 867.0,527.4 868.7,526.1C870.4,524.8 872.8,524.1 874.6,524.1C876.4,524.1 877.5,524.6 879.7,526.1C882.0,527.6 885.3,530.4 888.1,532.9C890.9,535.4 893.7,538.2 896.5,541.3C899.3,544.4 902.1,547.9 904.9,551.3C907.7,554.7 910.0,557.0 913.3,561.5C916.6,566.0 920.4,571.8 924.5,578.5C928.6,585.2 933.4,594.4 937.9,602.0C942.4,609.6 947.4,616.3 951.3,623.9C955.2,631.5 958.0,638.4 961.4,647.4C964.8,656.4 968.4,668.4 971.5,677.6C974.6,686.9 977.9,696.0 979.9,702.9C981.9,709.8 981.8,715.1 983.8,719.0C985.8,722.9 988.7,723.8 991.7,726.4C994.7,729.0 998.4,732.0 1001.8,734.8C1005.1,737.6 1007.9,740.7 1011.8,743.2C1015.7,745.7 1021.1,747.8 1025.3,749.9C1029.5,752.0 1032.6,754.2 1037.1,755.8C1041.6,757.3 1046.4,758.7 1052.2,759.2C1058.0,759.7 1066.3,759.0 1071.8,758.8C1077.3,758.6 1081.6,757.9 1085.3,758.0C1089.0,758.1 1090.3,758.7 1093.7,759.7C1097.1,760.7 1101.3,762.5 1105.5,763.9C1109.7,765.3 1114.4,766.6 1118.9,768.1C1123.4,769.6 1128.5,771.7 1132.4,773.1C1136.3,774.5 1138.6,775.8 1142.4,776.5C1146.2,777.2 1148.9,777.2 1155.2,777.4C1161.5,777.5 1170.6,777.4 1180.4,777.4C1190.2,777.4 1204.2,777.5 1214.0,777.4C1223.8,777.3 1230.8,776.6 1239.2,776.6C1247.6,776.6 1257.5,777.0 1264.5,777.1C1271.5,777.2 1275.7,777.2 1281.3,777.4C1286.9,777.6 1292.5,777.8 1298.1,778.2C1303.7,778.6 1309.3,778.8 1314.9,779.9C1320.5,781.0 1326.1,783.5 1331.7,785.0C1337.3,786.5 1342.9,788.1 1348.5,789.2C1354.1,790.3 1360.3,791.2 1365.3,791.7C1370.3,792.2 1374.2,792.8 1378.7,792.5C1383.2,792.2 1387.7,791.4 1392.2,790.0C1396.7,788.6 1401.7,785.8 1405.6,784.1C1409.5,782.4 1411.0,781.2 1415.7,779.9C1420.4,778.6 1427.8,776.8 1433.6,776.5C1439.4,776.2 1443.4,777.7 1450.4,778.2C1457.4,778.8 1467.2,779.4 1475.6,779.8C1484.0,780.1 1493.8,779.9 1500.8,780.3C1507.8,780.7 1513.1,781.5 1517.6,782.4C1522.1,783.3 1523.5,783.5 1527.7,785.7C1531.9,787.9 1537.6,793.0 1542.9,795.8C1548.2,798.6 1554.1,800.8 1559.7,802.5C1565.3,804.2 1572.0,805.0 1576.5,805.9C1581.0,806.8 1583.8,807.9 1586.6,807.6C1589.4,807.3 1590.8,805.3 1593.3,804.2C1595.8,803.1 1598.9,801.4 1601.7,800.8C1604.5,800.2 1606.8,799.9 1610.1,800.5C1613.4,801.1 1617.6,801.9 1621.8,804.2C1626.0,806.5 1630.8,810.4 1635.3,814.3C1639.8,818.2 1644.2,822.9 1648.7,827.7C1653.2,832.5 1657.7,837.4 1662.2,842.9C1666.7,848.4 1671.5,855.5 1675.6,861.0C1679.6,866.5 1683.1,870.8 1686.5,876.0C1689.9,881.2 1693.3,886.6 1696.2,892.0C1699.1,897.4 1701.4,903.6 1704.0,908.6C1706.6,913.6 1709.2,918.7 1711.8,922.3C1714.4,925.9 1716.6,927.7 1719.5,930.0C1722.4,932.3 1727.7,934.9 1729.3,935.9" fill="none" stroke="#b95fe0" stroke-width="1.15" stroke-linejoin="round"/>
<path d="M70.0,407.3C76.8,407.2 98.7,407.9 111.0,406.6C123.3,405.3 138.1,400.4 144.0,399.6C146.5,398.8 145.3,399.3 146.5,402.0C147.7,404.7 148.8,409.4 151.4,416.0C154.0,422.6 158.4,431.3 162.2,441.6C166.0,451.9 171.1,469.9 174.3,477.9C177.6,485.9 176.7,480.3 181.7,489.7C186.7,499.1 198.0,522.2 204.5,534.1C211.0,546.0 215.3,552.0 220.7,561.0C226.1,570.0 232.6,581.1 236.8,587.9C241.1,594.7 241.7,598.2 246.2,602.0C250.7,605.8 259.3,606.2 263.9,610.4C268.5,614.6 270.5,621.6 273.9,627.2C277.2,632.8 280.6,639.5 284.0,644.0C287.4,648.5 290.7,652.0 294.1,654.1C297.5,656.2 298.6,656.1 304.2,656.6C309.8,657.1 321.0,657.0 327.7,657.1C334.4,657.2 339.2,656.5 344.5,657.5C349.8,658.5 355.5,661.9 359.7,663.4C363.9,664.9 365.5,665.9 369.7,666.2C373.9,666.5 380.4,666.5 384.9,665.0C389.4,663.5 393.0,659.9 396.6,657.5C400.2,655.1 403.1,652.2 406.7,650.8C410.3,649.4 410.9,649.4 418.5,649.1C426.1,648.8 443.7,648.7 452.1,649.1C460.5,649.5 464.2,651.7 468.9,651.6C473.5,651.5 476.5,650.0 480.0,648.7C483.5,647.4 486.7,645.1 490.1,643.7C493.5,642.3 496.3,640.6 500.2,640.3C504.1,640.0 508.6,641.7 513.6,642.0C518.6,642.3 524.8,641.9 530.4,642.0C536.0,642.1 541.6,642.5 547.2,642.9C552.8,643.3 558.4,644.4 564.0,644.5C569.6,644.6 576.6,644.4 580.8,643.7C585.0,643.0 585.0,641.0 589.2,640.3C593.4,639.6 600.5,640.0 606.1,639.5C611.7,639.0 617.3,638.0 622.9,637.0C628.5,636.0 634.1,634.6 639.7,633.6C645.3,632.6 650.9,632.2 656.5,631.1C662.1,630.0 669.1,627.9 673.3,626.9C677.5,625.9 677.5,625.1 681.7,625.2C685.9,625.3 692.9,627.0 698.5,627.7C704.1,628.4 709.7,628.5 715.3,629.4C720.9,630.2 726.5,632.8 732.1,632.8C737.7,632.8 743.3,631.4 748.9,629.4C754.5,627.4 760.5,623.8 765.7,621.0C770.9,618.2 775.3,617.3 780.0,612.6C784.7,607.9 790.0,598.7 794.0,593.0C798.0,587.3 800.9,582.2 804.0,578.2C807.1,574.2 809.9,571.0 812.4,569.0C814.9,567.0 816.7,566.1 819.2,566.5C821.7,566.9 824.8,570.0 827.6,571.5C830.4,573.0 832.9,575.1 836.0,575.7C839.1,576.3 842.8,574.5 846.1,574.9C849.5,575.3 853.1,577.2 856.1,578.2C859.1,579.2 861.8,577.0 863.9,581.0C866.0,585.0 866.8,593.7 869.0,602.0C871.2,610.3 873.8,619.4 877.4,630.6C881.0,641.8 885.8,656.8 890.8,669.2C895.8,681.6 902.6,695.9 907.6,705.0C912.6,714.1 916.2,717.0 920.6,724.0C925.0,731.0 930.1,740.5 934.0,747.1C937.9,753.8 940.7,758.6 944.1,763.9C947.5,769.2 951.4,775.5 954.2,779.0C957.0,782.5 958.7,783.6 960.9,784.9C963.1,786.2 965.1,786.8 967.6,786.6C970.1,786.5 973.4,785.7 976.1,784.0C978.8,782.3 980.8,777.9 983.6,776.5C986.4,775.1 990.0,775.4 992.9,775.6C995.8,775.8 998.2,777.3 1001.3,777.6C1004.4,777.9 1007.9,777.2 1011.3,777.3C1014.6,777.4 1018.0,777.5 1021.4,778.2C1024.8,778.9 1028.4,780.0 1031.5,781.5C1034.6,783.0 1037.1,785.7 1039.9,787.4C1042.7,789.1 1044.9,790.7 1048.3,791.6C1051.7,792.5 1055.3,792.8 1060.1,792.9C1064.9,793.0 1071.9,792.4 1076.9,792.4C1081.9,792.4 1086.1,792.2 1090.3,792.8C1094.5,793.4 1097.9,794.6 1102.1,795.8C1106.3,797.0 1111.0,799.0 1115.5,800.0C1120.0,801.0 1123.8,801.6 1129.0,801.7C1134.2,801.9 1139.6,801.2 1146.8,800.9C1154.0,800.5 1163.6,800.0 1172.0,799.6C1180.4,799.2 1190.2,798.7 1197.2,798.4C1204.2,798.1 1207.0,798.0 1214.0,797.6C1221.0,797.2 1232.2,795.9 1239.2,796.2C1246.2,796.5 1250.5,797.6 1256.1,799.2C1261.7,800.8 1267.3,804.2 1272.9,806.0C1278.5,807.8 1284.1,809.4 1289.7,810.2C1295.3,811.0 1300.9,810.9 1306.5,811.0C1312.1,811.1 1317.7,810.8 1323.3,810.7C1328.9,810.7 1334.5,810.2 1340.1,810.7C1345.7,811.2 1351.9,812.6 1356.9,813.5C1361.9,814.4 1366.1,815.7 1370.3,816.1C1374.5,816.5 1377.9,816.5 1382.1,816.1C1386.3,815.7 1390.5,814.5 1395.5,813.5C1400.5,812.5 1407.5,811.1 1412.4,810.2C1417.4,809.4 1420.3,808.6 1425.2,808.4C1430.1,808.2 1436.4,808.5 1442.0,808.9C1447.6,809.3 1453.2,810.1 1458.8,810.6C1464.4,811.1 1470.0,811.8 1475.6,811.8C1481.2,811.8 1486.8,810.9 1492.4,810.9C1498.0,810.9 1503.6,811.2 1509.2,811.8C1514.8,812.4 1520.5,812.8 1526.1,814.3C1531.7,815.8 1537.3,819.0 1542.9,821.0C1548.5,823.0 1554.1,824.7 1559.7,826.1C1565.3,827.5 1572.0,828.3 1576.5,829.4C1581.0,830.5 1583.8,831.1 1586.6,832.8C1589.4,834.5 1590.8,836.4 1593.3,839.5C1595.8,842.6 1598.6,846.5 1601.7,851.3C1604.8,856.1 1608.5,862.5 1611.8,868.1C1615.1,873.7 1618.2,879.1 1621.8,884.9C1625.4,890.7 1630.9,897.8 1633.6,903.0C1636.3,908.2 1635.5,912.2 1637.8,916.4C1640.1,920.6 1644.2,923.9 1647.5,928.1C1650.8,932.3 1654.0,937.7 1657.3,941.7C1660.5,945.8 1663.8,949.0 1667.0,952.4C1670.2,955.8 1673.5,958.9 1676.7,962.1C1680.0,965.4 1683.2,969.6 1686.5,971.9C1689.8,974.2 1693.3,975.6 1696.2,975.8C1699.1,976.0 1701.4,974.0 1704.0,973.2C1706.6,972.5 1707.6,971.8 1711.8,971.3C1716.0,970.8 1726.4,970.5 1729.3,970.3" fill="none" stroke="#b95fe0" stroke-width="1.15" stroke-linejoin="round"/>
<path d="M70.0,396.6C76.8,396.2 98.7,395.9 111.0,394.5C123.3,393.1 138.1,389.4 144.0,388.5C146.5,387.6 144.8,388.0 146.5,389.0C148.2,390.0 150.5,391.6 154.0,394.5C157.5,397.4 160.8,398.8 167.6,406.6C174.3,414.5 184.8,427.5 194.5,441.6C204.2,455.7 217.2,475.9 226.0,491.1C234.8,506.3 240.4,519.1 247.6,532.8C254.8,546.5 263.6,563.0 269.1,573.1C274.6,583.2 277.1,588.4 280.7,593.6C284.3,598.8 287.4,601.4 290.8,604.5C294.2,607.6 296.9,609.6 300.8,612.1C304.7,614.6 309.8,617.6 314.3,619.7C318.8,621.8 322.9,623.0 327.7,624.7C332.5,626.4 337.6,627.7 342.9,629.7C348.2,631.7 354.1,634.2 359.7,636.5C365.3,638.8 371.8,642.5 376.5,643.2C381.2,643.9 384.0,642.0 388.2,640.7C392.4,639.4 396.6,636.7 401.7,635.6C406.8,634.5 411.5,634.2 418.5,633.9C425.5,633.6 435.3,633.3 443.7,633.9C452.1,634.5 461.9,637.3 468.9,637.3C475.9,637.3 480.5,635.2 485.7,633.9C490.9,632.6 495.4,630.3 500.0,629.7C504.6,629.1 505.8,630.0 513.6,630.3C521.4,630.6 539.1,631.1 547.0,631.5C554.9,631.9 556.2,632.9 560.7,632.8C565.2,632.7 569.4,632.0 574.1,631.1C578.9,630.2 583.9,628.7 589.2,627.7C594.5,626.7 600.5,625.9 606.1,625.2C611.7,624.5 617.3,624.2 622.9,623.5C628.5,622.8 634.1,621.6 639.7,621.0C645.3,620.4 650.9,620.3 656.5,619.7C662.1,619.1 667.7,618.1 673.3,617.6C678.9,617.1 685.9,616.8 690.1,616.8C694.3,616.8 695.7,617.7 698.5,617.6C701.3,617.5 704.1,616.7 706.9,616.0C709.7,615.3 711.7,614.8 715.3,613.4C718.9,612.0 724.2,610.0 728.7,607.6C733.2,605.2 737.4,602.6 742.2,599.2C747.0,595.8 752.6,590.6 757.3,587.4C762.0,584.2 765.4,583.4 770.4,579.9C775.4,576.4 782.4,570.1 787.2,566.5C792.0,562.9 795.4,560.8 799.0,558.1C802.6,555.4 806.2,552.4 809.1,550.5C812.0,548.6 813.2,546.9 816.6,546.6C820.0,546.3 824.3,547.7 829.2,548.8C834.1,549.9 841.3,551.7 846.1,553.0C850.9,554.3 854.7,555.5 857.8,556.4C860.9,557.3 862.2,556.4 864.5,558.6C866.8,560.8 868.8,566.0 871.3,569.8C873.8,573.6 875.9,576.0 879.7,581.6C883.5,587.2 889.0,595.0 894.2,603.7C899.4,612.4 905.4,623.8 911.0,633.9C916.6,644.0 922.2,654.4 927.8,664.2C933.4,674.0 939.0,683.8 944.6,692.8C950.2,701.8 956.4,710.7 961.4,718.0C966.4,725.3 971.0,731.5 974.9,736.5C978.8,741.5 982.0,745.9 985.0,748.2C988.0,750.5 989.6,749.0 992.9,750.4C996.2,751.8 1000.7,754.5 1004.6,756.3C1008.5,758.1 1012.5,759.8 1016.4,761.3C1020.3,762.8 1024.3,764.0 1028.2,765.5C1032.1,767.0 1036.0,769.1 1039.9,770.6C1043.8,772.1 1048.1,773.8 1051.7,774.8C1055.3,775.8 1058.2,776.2 1061.8,776.5C1065.4,776.8 1069.6,776.8 1073.5,776.5C1077.4,776.2 1081.9,774.8 1085.3,774.8C1088.7,774.8 1090.1,775.5 1093.7,776.5C1097.3,777.5 1102.9,779.5 1107.1,780.7C1111.3,782.0 1114.7,783.0 1118.9,784.0C1123.1,785.0 1127.8,786.0 1132.4,786.6C1137.1,787.2 1140.2,787.5 1146.8,787.8C1153.4,788.1 1163.6,788.3 1172.0,788.3C1180.4,788.3 1190.2,788.0 1197.2,787.8C1204.2,787.6 1207.0,787.4 1214.0,787.1C1221.0,786.8 1232.2,786.0 1239.2,786.1C1246.2,786.2 1250.5,786.7 1256.1,787.5C1261.7,788.3 1267.3,789.8 1272.9,790.8C1278.5,791.8 1284.1,792.7 1289.7,793.4C1295.3,794.1 1300.9,794.5 1306.5,795.0C1312.1,795.5 1317.7,796.1 1323.3,796.7C1328.9,797.3 1334.5,797.5 1340.1,798.4C1345.7,799.2 1351.9,800.8 1356.9,801.8C1361.9,802.8 1366.1,803.9 1370.3,804.3C1374.5,804.7 1377.9,804.9 1382.1,804.3C1386.3,803.7 1391.3,802.0 1395.5,800.9C1399.7,799.8 1403.4,798.7 1407.3,797.6C1411.2,796.5 1415.3,795.1 1419.1,794.2C1422.9,793.4 1426.2,792.5 1430.0,792.5C1433.8,792.5 1437.2,793.6 1442.0,794.1C1446.8,794.6 1451.8,795.5 1458.8,795.8C1465.8,796.1 1476.4,795.8 1484.0,795.8C1491.6,795.8 1498.6,795.8 1504.2,796.1C1509.8,796.4 1512.5,796.4 1517.6,797.5C1522.6,798.6 1528.9,800.5 1534.5,802.5C1540.1,804.5 1545.7,807.4 1551.3,809.2C1556.9,811.0 1562.5,812.1 1568.1,813.4C1573.7,814.7 1580.7,815.5 1584.9,816.8C1589.1,818.1 1590.0,818.6 1593.3,821.0C1596.6,823.4 1600.8,827.2 1605.0,831.1C1609.2,835.0 1614.0,839.7 1618.5,844.5C1623.0,849.3 1627.1,854.5 1631.9,859.7C1636.7,864.9 1642.6,870.0 1647.5,875.6C1652.4,881.2 1656.3,887.0 1661.2,893.1C1666.1,899.2 1671.5,906.4 1676.7,912.5C1681.9,918.6 1687.8,925.1 1692.3,930.0C1696.8,934.9 1700.1,938.6 1704.0,941.7C1707.9,944.8 1711.4,946.6 1715.6,948.5C1719.8,950.4 1727.0,952.2 1729.3,953.0" fill="none" stroke="#f0b450" stroke-width="1.15" stroke-linejoin="round"/>
<path d="M80,373.7h4v9.4h-4zM99,385.1h5v6.7h-5zM104,379.7h4v10.1h-4zM113,378.4h5v3.4h-5zM118,379.5h5v1.0h-5zM123,380.0h4v1.0h-4zM127,380.0h5v1.0h-5zM132,380.0h5v1.0h-5zM137,380.0h5v1.0h-5zM146,462.2h5v51.1h-5zM170,539.5h5v17.5h-5zM180,530.0h5v13.5h-5zM189,539.5h5v21.5h-5zM199,543.5h5v16.2h-5zM218,565.7h5v20.2h-5zM232,605.4h5v6.7h-5zM242,609.6h5v9.2h-5zM285,678.5h5v6.7h-5zM290,644.0h5v32.0h-5zM295,643.2h4v4.2h-4zM299,628.0h5v14.4h-5zM309,625.5h5v8.5h-5zM314,603.7h4v21.0h-4zM323,603.4h5v12.1h-5zM338,618.8h4v10.9h-4zM342,621.3h5v11.0h-5zM371,651.6h5v8.4h-5zM376,649.0h5v6.8h-5zM381,638.2h4v15.9h-4zM385,631.4h5v16.0h-5zM390,617.1h5v20.2h-5zM400,639.8h4v7.6h-4zM404,634.0h5v8.4h-5zM409,615.5h5v10.9h-5zM419,631.4h5v15.2h-5zM424,631.4h4v7.6h-4zM428,623.0h5v9.3h-5zM433,607.9h5v19.3h-5zM443,623.0h4v5.0h-4zM447,620.5h5v5.9h-5zM457,627.2h5v3.4h-5zM471,632.3h5v29.4h-5zM481,613.8h5v14.2h-5zM486,610.4h4v8.4h-4zM490,610.4h5v6.7h-5zM510,637.8h4v5.9h-4zM514,636.1h5v6.8h-5zM524,628.6h5v6.7h-5zM529,625.2h4v4.2h-4zM548,634.5h5v8.4h-5zM562,623.5h5v21.9h-5zM567,610.1h5v10.9h-5zM572,596.6h4v14.3h-4zM591,614.3h5v5.0h-5zM600,611.8h5v8.4h-5zM605,607.6h5v8.4h-5zM615,614.3h4v3.3h-4zM624,611.8h5v10.0h-5zM634,616.0h5v4.2h-5zM643,612.6h5v3.4h-5zM658,622.7h4v11.8h-4zM662,618.5h5v5.9h-5zM677,611.8h5v14.2h-5zM691,627.7h5v7.6h-5zM696,604.2h5v30.3h-5zM701,595.8h4v11.8h-4zM705,584.9h5v10.9h-5zM710,568.1h5v15.1h-5zM715,559.7h5v10.9h-5zM725,548.7h4v17.3h-4zM729,535.3h5v15.7h-5zM739,534.5h5v11.3h-5zM744,530.3h4v5.9h-4zM753,524.8h5v7.6h-5zM763,521.0h5v6.0h-5zM782,537.0h5v5.1h-5zM796,542.9h5v5.9h-5zM801,526.1h5v19.4h-5zM830,602.0h4v10.1h-4zM834,585.2h5v16.8h-5zM839,570.5h5v14.7h-5zM858,578.4h5v11.8h-5zM873,711.8h4v1.7h-4zM877,701.8h5v16.0h-5zM882,699.7h5v19.3h-5zM925,742.6h5v8.0h-5zM939,773.9h5v10.1h-5zM949,784.0h5v5.0h-5zM954,784.9h5v5.9h-5zM959,783.2h4v6.7h-4zM963,756.3h5v28.6h-5zM987,750.2h5v9.6h-5zM1016,750.6h5v7.6h-5zM1030,780.7h5v5.9h-5zM1045,801.7h4v3.3h-4zM1054,796.6h5v11.0h-5zM1059,787.4h5v11.8h-5zM1068,781.5h5v9.3h-5zM1073,772.3h5v14.3h-5zM1078,764.7h5v10.9h-5zM1083,757.1h5v11.0h-5zM1102,789.9h5v6.7h-5zM1111,790.8h5v3.3h-5zM1121,797.5h5v5.0h-5zM1131,785.3h4v12.2h-4zM1145,777.0h5v13.4h-5zM1169,795.0h5v4.2h-5zM1174,780.8h4v17.6h-4zM1188,779.9h5v16.0h-5zM1197,771.5h5v12.6h-5zM1202,764.8h5v4.2h-5zM1207,764.8h5v5.0h-5zM1226,780.8h5v8.4h-5zM1231,777.4h5v5.0h-5zM1245,795.9h5v5.0h-5zM1250,794.2h5v3.4h-5zM1274,810.2h5v4.2h-5zM1283,806.8h5v15.1h-5zM1288,804.5h5v1.5h-5zM1298,801.8h5v6.7h-5zM1303,796.2h4v9.8h-4zM1317,780.8h5v21.0h-5zM1322,779.1h4v3.3h-4zM1336,794.2h5v5.0h-5zM1341,781.6h5v15.1h-5zM1360,812.7h5v5.9h-5zM1369,816.9h5v5.0h-5zM1374,810.2h5v6.7h-5zM1379,804.3h5v8.4h-5zM1384,797.6h5v10.0h-5zM1389,790.0h4v9.2h-4zM1393,785.0h5v6.7h-5zM1398,778.0h5v11.0h-5zM1403,772.4h5v8.1h-5zM1408,769.7h4v4.8h-4zM1412,768.1h5v4.7h-5zM1436,785.7h5v4.2h-5zM1451,797.5h4v4.2h-4zM1465,803.4h5v6.7h-5zM1484,812.6h5v5.9h-5zM1489,809.2h5v8.4h-5zM1494,803.4h4v7.5h-4zM1498,801.7h5v6.7h-5zM1503,800.8h5v5.1h-5zM1513,808.4h4v4.2h-4zM1522,812.6h5v3.4h-5zM1532,810.9h5v6.7h-5zM1551,825.2h5v7.6h-5zM1560,824.4h5v4.2h-5zM1570,822.7h5v4.2h-5zM1580,821.8h4v5.1h-4zM1627,920.3h5v15.6h-5zM1642,949.5h4v5.8h-4zM1651,950.5h5v4.8h-5zM1661,959.2h5v8.8h-5zM1680,968.9h5v14.6h-5zM1689,966.0h5v9.8h-5zM1699,952.4h5v29.2h-5z" fill="#f08080"/>
<path d="M82.0,372.7V373.7M82.0,383.1V385.6M101.5,391.8V393.3M115.5,377.4V378.4M115.5,381.8V382.8M125.0,381.0V382.5M129.5,379.0V380.0M134.5,378.5V380.0M139.5,381.0V383.5M148.5,448.7V462.2M148.5,513.3V516.6M172.5,533.0V539.5M182.5,526.7V530.0M182.5,543.5V546.9M191.5,531.4V539.5M201.5,542.5V543.5M220.5,542.2V565.7M220.5,585.9V587.4M234.5,602.0V605.4M234.5,612.1V617.0M244.5,608.1V609.6M244.5,618.8V621.3M287.5,674.3V678.5M287.5,685.2V686.7M292.5,676.0V677.5M297.0,647.4V657.5M301.5,627.0V628.0M301.5,642.4V644.9M311.5,624.5V625.5M316.0,599.0V603.7M316.0,624.7V625.7M325.5,602.4V603.4M340.0,616.3V618.8M344.5,632.3V633.8M378.5,647.5V649.0M378.5,655.8V656.8M387.5,626.4V631.4M392.5,616.1V617.1M392.5,637.3V638.3M402.0,647.4V648.9M406.5,632.5V634.0M411.5,614.6V615.5M421.5,646.6V648.1M426.0,630.4V631.4M426.0,639.0V640.5M430.5,622.0V623.0M445.0,620.5V623.0M445.0,628.0V637.3M449.5,618.0V620.5M459.5,624.7V627.2M473.5,631.3V632.3M483.5,611.3V613.8M488.0,607.9V610.4M492.5,609.4V610.4M516.5,633.6V636.1M516.5,642.9V649.6M526.5,617.6V628.6M526.5,635.3V636.3M531.0,618.5V625.2M531.0,629.4V630.4M564.5,622.5V623.5M569.5,604.2V610.1M569.5,621.0V623.5M574.0,595.6V596.6M593.5,611.8V614.3M593.5,619.3V621.8M602.5,620.2V621.2M607.5,606.1V607.6M626.5,610.8V611.8M626.5,621.8V623.3M636.5,614.5V616.0M645.5,610.1V612.6M645.5,616.0V617.5M660.0,634.5V635.5M664.5,616.0V618.5M664.5,624.4V625.9M679.5,626.0V627.0M698.5,603.2V604.2M707.5,583.4V584.9M717.5,558.2V559.7M727.0,566.0V567.5M741.5,533.5V534.5M746.0,527.8V530.3M755.5,515.1V524.8M765.5,520.0V521.0M784.5,536.0V537.0M798.5,548.8V551.3M803.5,545.5V546.5M832.0,612.1V614.6M836.5,583.7V585.2M841.5,568.0V570.5M860.5,590.2V591.7M875.0,709.3V711.8M875.0,713.5V722.7M879.5,717.8V719.3M927.5,750.6V753.1M941.5,770.6V773.9M941.5,784.0V785.7M956.5,782.4V784.9M956.5,790.8V794.1M961.0,773.1V783.2M989.5,742.2V750.2M989.5,759.8V761.3M1018.5,749.6V750.6M1018.5,758.2V760.7M1032.5,778.2V780.7M1047.0,800.7V801.7M1047.0,805.0V807.5M1070.5,780.5V781.5M1070.5,790.8V793.3M1075.5,786.6V788.1M1080.5,763.2V764.7M1080.5,775.6V776.6M1085.5,754.6V757.1M1104.5,787.4V789.9M1104.5,796.6V799.1M1113.5,788.3V790.8M1133.0,797.5V799.0M1147.5,775.5V777.0M1147.5,790.4V791.4M1171.5,794.0V795.0M1171.5,799.2V800.7M1176.0,798.4V799.9M1190.5,778.9V779.9M1209.5,763.8V764.8M1209.5,769.8V771.3M1228.5,779.3V780.8M1228.5,789.2V790.7M1233.5,775.9V777.4M1233.5,782.4V783.4M1252.5,790.0V794.2M1276.5,808.7V810.2M1276.5,814.4V815.9M1285.5,821.9V824.4M1290.5,806.0V807.0M1300.5,800.3V801.8M1300.5,808.5V809.5M1305.0,794.7V796.2M1319.5,801.8V802.8M1324.0,782.4V783.4M1338.5,799.2V801.7M1343.5,796.7V797.7M1362.5,810.2V812.7M1362.5,818.6V821.1M1376.5,816.9V817.9M1381.5,812.7V815.2M1386.5,807.6V808.6M1391.0,789.0V790.0M1395.5,782.5V785.0M1400.5,789.0V791.5M1405.5,771.4V772.4M1405.5,780.5V782.0M1410.0,768.7V769.7M1414.5,767.1V768.1M1438.5,784.7V785.7M1438.5,789.9V790.9M1453.0,796.0V797.5M1453.0,801.7V803.2M1491.5,808.2V809.2M1491.5,817.6V820.1M1496.0,799.2V803.4M1500.5,800.7V801.7M1505.5,799.3V800.8M1505.5,805.9V807.4M1515.0,807.4V808.4M1515.0,812.6V815.1M1534.5,809.9V810.9M1553.5,832.8V834.3M1562.5,818.5V824.4M1572.5,826.9V827.9M1582.0,820.3V821.8M1582.0,826.9V827.9M1629.5,935.9V936.9M1644.0,955.3V957.3M1663.5,957.7V959.2M1663.5,968.0V974.8M1682.5,983.5V986.0M1691.5,963.5V966.0M1691.5,975.8V976.8M1701.5,951.5V952.4M1701.5,981.6V983.1" stroke="#f08080" stroke-width="1.3" fill="none"/>
<path d="M70.6,384.4h3.8v0.8h-3.8zM75.6,382.4h3.8v2.8h-3.8zM84.6,369.6h3.8v6.9h-3.8zM89.6,371.6h3.8v6.9h-3.8zM94.6,383.7h3.8v5.5h-3.8zM108.6,378.3h3.8v6.9h-3.8zM142.6,379.7h2.8v5.5h-2.8zM151.6,453.4h3.8v33.1h-3.8zM156.6,483.9h3.8v22.7h-3.8zM161.6,507.2h3.8v26.3h-3.8zM166.6,524.0h2.8v35.1h-2.8zM175.6,542.6h3.8v0.8h-3.8zM185.6,523.3h2.8v35.1h-2.8zM194.6,544.1h3.8v6.3h-3.8zM204.6,546.1h3.8v20.3h-3.8zM209.6,557.6h2.8v8.2h-2.8zM213.6,565.0h3.8v19.6h-3.8zM223.6,573.6h3.8v27.8h-3.8zM228.6,596.7h2.8v9.7h-2.8zM237.6,601.8h3.8v3.8h-3.8zM247.6,600.9h3.8v2.2h-3.8zM252.6,595.1h2.8v0.8h-2.8zM256.6,603.5h3.8v9.7h-3.8zM261.6,619.1h3.8v22.7h-3.8zM266.6,647.2h3.8v13.9h-3.8zM271.6,666.8h2.8v10.2h-2.8zM275.6,677.4h3.8v3.8h-3.8zM280.6,686.6h3.8v2.2h-3.8zM304.6,623.1h3.8v6.0h-3.8zM318.6,604.6h3.8v13.6h-3.8zM328.6,604.6h3.8v8.2h-3.8zM333.6,611.9h3.8v18.9h-3.8zM347.6,621.4h3.8v18.7h-3.8zM352.6,627.8h3.8v15.6h-3.8zM357.6,643.8h2.8v15.6h-2.8zM361.6,655.6h3.8v4.6h-3.8zM366.6,659.8h3.8v3.0h-3.8zM395.6,618.1h3.8v20.3h-3.8zM414.6,620.8h3.8v24.3h-3.8zM438.6,608.5h3.8v17.3h-3.8zM452.6,620.3h3.8v12.2h-3.8zM462.6,625.3h3.8v18.1h-3.8zM467.6,642.1h2.8v19.8h-2.8zM476.6,627.6h3.8v0.8h-3.8zM495.6,613.6h3.8v10.5h-3.8zM500.6,618.2h3.8v15.7h-3.8zM505.6,633.4h3.8v14.7h-3.8zM519.6,630.0h3.8v3.9h-3.8zM533.6,625.8h3.8v12.3h-3.8zM538.6,637.6h3.8v2.1h-3.8zM543.6,639.3h3.8v3.8h-3.8zM553.6,634.2h2.8v8.1h-2.8zM557.6,640.1h3.8v4.7h-3.8zM576.6,597.2h3.8v8.1h-3.8zM581.6,607.3h3.8v4.7h-3.8zM586.6,609.5h3.8v7.5h-3.8zM596.6,613.2h2.8v2.2h-2.8zM610.6,607.3h3.8v9.7h-3.8zM619.6,614.9h3.8v2.1h-3.8zM629.6,614.9h3.8v1.3h-3.8zM639.6,612.4h2.8v2.1h-2.8zM648.6,614.9h3.8v1.3h-3.8zM653.6,620.3h3.8v11.0h-3.8zM667.6,616.6h3.8v8.0h-3.8zM672.6,620.8h3.8v7.2h-3.8zM682.6,610.7h2.8v20.6h-2.8zM686.6,630.0h3.8v3.9h-3.8zM720.6,558.6h3.8v12.3h-3.8zM734.6,535.9h3.8v12.2h-3.8zM748.6,534.2h3.8v1.4h-3.8zM758.6,524.6h3.8v0.3h-3.8zM768.6,523.6h2.8v6.1h-2.8zM772.6,530.0h3.8v2.6h-3.8zM777.6,532.6h3.8v7.6h-3.8zM787.6,538.5h2.8v6.4h-2.8zM791.6,545.2h3.8v8.1h-3.8zM806.6,528.8h3.8v10.2h-3.8zM811.6,538.5h2.8v8.0h-2.8zM815.6,560.3h3.8v21.1h-3.8zM820.6,581.9h3.8v17.8h-3.8zM825.6,598.9h3.8v7.6h-3.8zM844.6,573.9h3.8v2.2h-3.8zM849.6,576.4h2.8v3.0h-2.8zM853.6,580.6h3.8v2.2h-3.8zM863.6,581.9h3.8v2.2h-3.8zM868.6,709.5h3.8v5.6h-3.8zM887.6,697.6h3.8v13.3h-3.8zM892.6,706.2h2.8v3.4h-2.8zM896.6,710.0h3.8v27.4h-3.8zM901.6,733.6h3.8v2.1h-3.8zM906.6,731.4h3.8v3.8h-3.8zM911.6,728.4h3.8v4.3h-3.8zM916.6,738.6h2.8v1.3h-2.8zM920.6,744.4h3.8v4.3h-3.8zM930.6,742.4h3.8v15.5h-3.8zM935.6,761.6h2.8v22.7h-2.8zM944.6,777.9h3.8v13.1h-3.8zM968.6,756.1h3.8v6.3h-3.8zM973.6,761.9h3.8v3.0h-3.8zM978.6,761.6h2.8v0.8h-2.8zM982.6,761.9h3.8v1.4h-3.8zM992.6,754.1h3.8v4.8h-3.8zM997.6,758.6h3.8v0.5h-3.8zM1002.6,760.3h2.8v3.8h-2.8zM1006.6,763.6h3.8v3.9h-3.8zM1011.6,767.8h3.8v0.6h-3.8zM1021.6,759.4h2.8v14.8h-2.8zM1025.6,777.1h3.8v7.2h-3.8zM1035.6,786.3h3.8v5.5h-3.8zM1040.6,793.9h3.8v10.5h-3.8zM1049.6,803.5h3.8v6.0h-3.8zM1064.6,787.2h2.8v5.5h-2.8zM1088.6,759.4h2.8v8.9h-2.8zM1092.6,767.8h3.8v17.3h-3.8zM1097.6,786.3h3.8v5.5h-3.8zM1107.6,792.2h2.8v3.8h-2.8zM1116.6,794.7h3.8v5.5h-3.8zM1126.6,797.2h3.8v1.4h-3.8zM1135.6,787.2h3.8v6.0h-3.8zM1140.6,792.3h3.8v1.3h-3.8zM1150.6,778.8h2.8v9.8h-2.8zM1154.6,789.8h3.8v3.0h-3.8zM1159.6,793.1h3.8v1.3h-3.8zM1164.6,794.0h3.8v5.5h-3.8zM1178.6,780.5h3.8v9.7h-3.8zM1183.6,790.6h3.8v8.9h-3.8zM1193.6,779.7h2.8v4.7h-2.8zM1212.6,765.7h3.8v14.5h-3.8zM1217.6,781.4h2.8v4.6h-2.8zM1221.6,783.9h3.8v2.1h-3.8zM1236.6,777.7h2.8v13.4h-2.8zM1240.6,791.1h3.8v9.2h-3.8zM1255.6,795.6h3.8v4.7h-3.8zM1260.6,801.5h2.8v14.0h-2.8zM1264.6,808.2h3.8v7.3h-3.8zM1269.6,814.1h3.8v1.4h-3.8zM1279.6,809.1h2.8v11.4h-2.8zM1293.6,805.7h3.8v3.9h-3.8zM1307.6,799.8h3.8v2.2h-3.8zM1312.6,799.0h3.8v3.0h-3.8zM1326.6,782.2h3.8v3.0h-3.8zM1331.6,786.4h3.8v13.9h-3.8zM1346.6,782.2h2.8v17.3h-2.8zM1350.6,799.8h3.8v1.4h-3.8zM1355.6,799.8h3.8v19.0h-3.8zM1365.6,815.0h2.8v5.5h-2.8zM1417.6,768.3h3.8v3.4h-3.8zM1422.6,770.8h3.8v8.4h-3.8zM1427.6,778.8h3.8v2.1h-3.8zM1432.6,786.3h2.8v3.9h-2.8zM1441.6,787.2h3.8v13.9h-3.8zM1446.6,799.8h3.8v1.3h-3.8zM1455.6,799.8h3.8v2.1h-3.8zM1460.6,804.8h3.8v4.7h-3.8zM1470.6,805.6h3.8v2.2h-3.8zM1475.6,805.6h2.8v2.2h-2.8zM1479.6,810.7h3.8v8.9h-3.8zM1508.6,804.5h3.8v5.8h-3.8zM1517.6,809.8h3.8v3.9h-3.8zM1527.6,813.2h3.8v3.0h-3.8zM1537.6,810.7h2.8v1.3h-2.8zM1541.6,811.2h3.8v6.7h-3.8zM1546.6,819.9h3.8v13.1h-3.8zM1556.6,827.5h2.8v1.3h-2.8zM1565.6,825.8h3.8v1.3h-3.8zM1575.6,825.0h3.8v3.8h-3.8zM1584.6,821.3h3.8v14.2h-3.8zM1589.6,835.9h3.8v28.2h-3.8zM1594.6,867.2h3.8v25.4h-3.8zM1599.6,891.9h2.8v11.3h-2.8zM1603.6,895.6h3.8v10.5h-3.8zM1608.6,906.3h3.8v9.5h-3.8zM1613.6,908.3h3.8v13.4h-3.8zM1618.6,917.0h3.8v12.4h-3.8zM1623.6,922.9h2.8v10.4h-2.8zM1632.6,919.9h3.8v14.4h-3.8zM1637.6,938.4h3.8v15.4h-3.8zM1646.6,948.1h3.8v8.6h-3.8zM1656.6,954.0h3.8v11.4h-3.8zM1666.6,959.8h2.8v5.6h-2.8zM1670.6,966.6h3.8v9.5h-3.8zM1675.6,971.5h3.8v9.5h-3.8zM1685.6,966.6h2.8v5.6h-2.8zM1694.6,968.6h3.8v15.3h-3.8z" fill="#000" stroke="#8fd6f4" stroke-width="1.2"/>
<path d="M72.5,373.7V383.8M77.5,376.0V381.8M91.5,369.5V371.0M96.5,389.8V391.3M110.5,385.8V398.6M144.0,376.6V379.1M144.0,385.8V387.3M153.5,487.1V490.4M158.5,481.8V483.3M158.5,507.2V511.3M163.5,505.1V506.6M163.5,534.1V535.1M168.0,516.0V523.4M177.5,539.5V542.0M177.5,544.0V553.0M187.0,559.0V560.5M196.5,531.4V543.5M206.5,544.0V545.5M211.0,555.5V557.0M211.0,566.4V571.0M215.5,585.2V592.6M225.5,570.5V573.0M230.0,607.0V608.7M239.5,597.8V601.2M239.5,606.2V613.8M249.5,598.7V600.3M249.5,603.7V604.5M254.0,593.0V594.5M254.0,596.5V610.0M258.5,600.4V602.9M263.5,642.4V649.0M268.5,661.7V663.2M273.0,663.7V666.2M277.5,674.3V676.8M277.5,681.8V694.5M282.5,679.3V686.0M282.5,689.4V690.3M306.5,621.0V622.5M306.5,629.7V634.8M320.5,602.5V604.0M320.5,618.8V625.5M335.5,631.4V634.8M349.5,640.7V642.2M354.5,626.2V627.2M359.0,640.7V643.2M359.0,660.0V661.0M363.5,660.8V668.4M368.5,657.7V659.2M368.5,663.4V666.2M397.5,639.0V641.5M416.5,617.7V620.2M416.5,645.7V650.8M440.5,606.9V607.9M440.5,626.4V630.6M454.5,633.1V635.6M464.5,622.2V624.7M464.5,644.0V645.5M469.0,639.0V641.5M469.0,662.5V670.0M478.5,624.5V627.0M478.5,629.0V630.0M497.5,624.7V626.2M502.5,634.5V635.5M521.5,634.5V635.5M540.5,636.0V637.0M540.5,640.3V641.3M545.5,637.2V638.7M545.5,643.7V645.4M555.0,632.6V633.6M555.0,642.9V644.4M559.5,645.4V647.9M583.5,612.6V622.7M598.0,605.9V612.6M621.5,607.6V614.3M621.5,617.6V620.2M631.5,616.8V618.3M641.0,605.9V611.8M650.5,612.8V614.3M650.5,616.8V619.3M655.5,617.2V619.7M655.5,631.9V634.4M669.5,615.0V616.0M669.5,625.2V626.2M674.5,619.2V620.2M674.5,628.6V629.6M684.0,607.6V610.1M684.0,631.9V632.9M722.5,556.5V558.0M736.5,548.7V550.2M750.5,536.2V537.7M760.5,522.0V524.0M760.5,525.5V527.5M770.0,519.5V523.0M774.5,528.4V529.4M774.5,533.2V538.7M779.5,531.0V532.0M779.5,540.8V541.8M793.5,553.9V556.4M808.5,525.7V528.2M813.0,536.4V537.9M817.5,582.0V583.5M827.5,595.8V598.3M827.5,607.1V608.6M846.5,570.8V573.3M851.0,574.3V575.8M865.5,579.8V581.3M865.5,584.7V586.2M870.5,696.1V708.9M889.5,696.0V697.0M889.5,711.5V714.0M894.0,704.5V705.6M898.5,738.0V739.5M903.5,732.0V733.0M908.5,722.4V730.8M908.5,735.8V738.3M918.0,740.5V741.5M922.5,749.3V753.5M932.5,740.3V741.8M937.0,760.0V761.0M937.0,784.9V787.4M946.5,791.6V794.1M970.5,754.5V755.5M980.0,760.0V761.0M980.0,763.0V764.5M984.5,756.3V761.3M984.5,763.9V770.6M994.5,759.5V760.5M999.5,755.5V758.0M1004.0,757.2V759.7M1008.5,760.5V763.0M1013.5,766.4V767.2M1013.5,769.0V780.7M1023.0,774.8V775.8M1027.5,784.9V785.9M1037.5,792.4V794.9M1042.5,792.3V793.3M1042.5,805.0V806.0M1051.5,810.1V812.6M1066.0,793.3V794.8M1090.0,768.9V770.4M1094.5,765.7V767.2M1109.0,796.6V798.1M1118.5,793.1V794.1M1137.5,793.8V795.3M1156.5,786.7V789.2M1161.5,791.5V792.5M1161.5,795.0V797.5M1166.5,791.9V793.4M1166.5,800.1V801.6M1180.5,790.8V792.3M1185.5,788.5V790.0M1195.0,774.9V779.1M1195.0,785.0V786.5M1214.5,762.6V765.1M1219.0,779.3V780.8M1223.5,786.6V789.1M1238.0,791.7V793.2M1257.5,800.9V802.4M1262.0,799.9V800.9M1262.0,816.1V817.6M1271.5,812.5V813.5M1281.0,807.0V808.5M1281.0,821.1V822.6M1295.5,801.8V805.1M1295.5,810.2V811.7M1309.5,796.7V799.2M1309.5,802.6V804.1M1314.5,802.6V804.1M1328.5,785.8V786.8M1333.5,784.8V785.8M1352.5,796.7V799.2M1367.0,811.9V814.4M1424.5,779.8V782.3M1434.0,790.8V792.3M1443.5,784.1V786.6M1448.5,798.2V799.2M1457.5,802.5V804.0M1477.0,797.5V805.0M1510.5,802.4V803.9M1510.5,810.9V815.1M1529.5,810.1V812.6M1543.5,808.1V810.6M1548.5,833.6V837.8M1558.0,829.4V834.5M1567.5,827.7V830.3M1586.5,836.1V837.6M1596.5,865.1V866.6M1596.5,893.2V895.7M1620.5,913.9V916.4M1625.0,920.8V922.3M1634.5,917.8V919.3M1634.5,934.9V937.4M1658.5,966.0V968.5M1668.0,957.7V959.2M1672.5,964.5V966.0M1672.5,976.7V977.7M1677.5,981.6V982.6M1687.0,963.1V966.0M1687.0,972.8V976.7M1696.5,965.5V968.0M1696.5,984.5V985.5" stroke="#8fd6f4" stroke-width="1.3" fill="none"/>
<path d="M82.0,381.8 L86.8,380.6 L91.6,380.3 L96.3,381.1 L101.1,381.0 L105.9,382.2 L110.7,383.9 L115.4,383.8 L120.2,381.7 L125.0,380.7 L129.8,380.7 L134.6,379.6 L139.3,379.9 L144.1,381.2 L148.9,397.6 L153.7,419.0 L158.4,444.5 L163.2,475.3 L168.0,510.1 L172.8,525.5 L177.6,536.9 L182.3,541.5 L187.1,546.4 L191.9,542.4 L196.7,544.7 L201.4,544.6 L206.2,552.0 L211.0,553.5 L215.8,562.6 L220.5,565.6 L225.3,577.3 L230.1,585.3 L234.9,593.1 L239.7,597.3 L244.4,606.0 L249.2,606.4 L254.0,604.3 L258.8,606.0 L263.5,613.2 L268.3,623.6 L273.1,638.4 L277.9,655.5 L282.6,670.6 L287.4,677.8 L292.2,674.3 L297.0,667.4 L301.8,656.6 L306.5,644.7 L311.3,634.1 L316.1,626.0 L320.9,621.1 L325.6,616.2 L330.4,613.0 L335.2,614.1 L340.0,617.2 L344.7,617.7 L349.5,625.1 L354.3,631.2 L359.1,637.0 L363.9,645.4 L368.6,653.8 L373.4,656.0 L378.2,657.0 L383.0,652.6 L387.7,646.7 L392.5,637.5 L397.3,634.9 L402.1,633.1 L406.8,632.3 L411.6,629.1 L416.4,634.8 L421.2,633.3 L426.0,631.6 L430.7,629.4 L435.5,627.9 L440.3,624.0 L445.1,622.3 L449.8,620.2 L454.6,622.2 L459.4,626.0 L464.2,629.6 L468.9,637.5 L473.7,639.8 L478.5,639.0 L483.3,636.3 L488.1,629.6 L492.8,619.2 L497.6,617.7 L502.4,618.8 L507.2,625.7 L511.9,631.2 L516.7,636.4 L521.5,638.3 L526.3,637.1 L531.0,632.4 L535.8,632.6 L540.6,633.5 L545.4,635.3 L550.2,636.5 L554.9,640.0 L559.7,641.4 L564.5,638.0 L569.3,631.3 L574.0,623.7 L578.8,616.3 L583.6,609.7 L588.4,608.6 L593.1,609.4 L597.9,613.3 L602.7,614.5 L607.5,613.5 L612.3,613.5 L617.0,613.5 L621.8,613.8 L626.6,613.8 L631.4,615.6 L636.1,615.3 L640.9,615.5 L645.7,614.5 L650.5,615.5 L655.3,618.5 L660.0,619.8 L664.8,620.5 L669.6,623.0 L674.4,625.4 L679.1,621.4 L683.9,623.2 L688.7,626.4 L693.5,626.9 L698.2,622.0 L703.0,618.8 L707.8,609.4 L712.6,596.1 L717.4,582.5 L722.1,576.0 L726.9,566.6 L731.7,556.7 L736.5,552.8 L741.2,547.7 L746.0,539.5 L750.8,537.0 L755.6,534.9 L760.3,530.3 L765.1,527.6 L769.9,527.6 L774.7,527.0 L779.5,530.2 L784.2,532.5 L789.0,537.4 L793.8,542.1 L798.6,544.0 L803.3,541.1 L808.1,541.6 L812.9,541.9 L817.7,547.5 L822.4,559.0 L827.2,575.2 L832.0,587.7 L836.8,595.3 L841.6,593.0 L846.3,588.3 L851.1,582.9 L855.9,579.2 L860.7,577.8 L865.4,580.6 L870.2,608.4 L875.0,634.8 L879.8,658.5 L884.5,682.7 L889.3,708.1 L894.1,707.0 L898.9,712.2 L903.7,719.1 L908.4,726.4 L913.2,730.7 L918.0,736.8 L922.8,739.0 L927.5,740.3 L932.3,744.8 L937.1,755.2 L941.9,761.8 L946.6,770.3 L951.4,778.6 L956.2,783.9 L961.0,783.5 L965.8,780.0 L970.5,774.3 L975.3,770.6 L980.1,766.2 L984.9,762.3 L989.6,761.1 L994.4,760.4 L999.2,759.3 L1004.0,759.6 L1008.7,760.4 L1013.5,764.2 L1018.3,762.4 L1023.1,765.4 L1027.9,769.5 L1032.6,772.0 L1037.4,776.7 L1042.2,787.6 L1047.0,792.9 L1051.7,798.0 L1056.5,801.2 L1061.3,800.2 L1066.1,797.8 L1070.8,793.8 L1075.6,786.2 L1080.4,779.8 L1085.2,773.8 L1090.0,768.9 L1094.7,769.7 L1099.5,773.8 L1104.3,778.8 L1109.1,786.7 L1113.8,791.1 L1118.6,794.1 L1123.4,795.1 L1128.2,797.0 L1133.0,794.7 L1137.7,795.3 L1142.5,794.0 L1147.3,789.9 L1152.1,787.9 L1156.8,789.5 L1161.6,789.8 L1166.4,790.9 L1171.2,794.5 L1175.9,792.9 L1180.7,792.3 L1185.5,793.4 L1190.3,789.3 L1195.1,787.3 L1199.8,785.5 L1204.6,780.3 L1209.4,773.2 L1214.2,773.4 L1218.9,773.7 L1223.7,776.7 L1228.5,779.9 L1233.3,782.4 L1238.0,784.6 L1242.8,787.5 L1247.6,789.3 L1252.4,792.0 L1257.2,796.7 L1261.9,801.6 L1266.7,804.6 L1271.5,808.7 L1276.3,811.9 L1281.0,815.9 L1285.8,814.1 L1290.6,811.7 L1295.4,810.6 L1300.1,808.9 L1304.9,803.9 L1309.7,803.1 L1314.5,802.7 L1319.3,796.8 L1324.0,792.3 L1328.8,790.2 L1333.6,789.8 L1338.4,788.2 L1343.1,788.3 L1347.9,792.5 L1352.7,795.7 L1357.5,799.4 L1362.2,803.1 L1367.0,811.0 L1371.8,814.4 L1376.6,816.1 L1381.4,813.0 L1386.1,810.0 L1390.9,803.8 L1395.7,797.4 L1400.5,791.0 L1405.2,784.6 L1410.0,779.0 L1414.8,774.6 L1419.6,772.1 L1424.3,772.5 L1429.1,774.3 L1433.9,778.5 L1438.7,782.0 L1443.5,787.9 L1448.2,792.3 L1453.0,795.5 L1457.8,797.8 L1462.6,802.7 L1467.3,803.0 L1472.1,804.4 L1476.9,806.6 L1481.7,810.1 L1486.4,810.6 L1491.2,811.8 L1496.0,810.8 L1500.8,809.4 L1505.6,805.5 L1510.3,805.2 L1515.1,805.0 L1519.9,807.2 L1524.7,809.4 L1529.4,812.6 L1534.2,812.6 L1539.0,813.4 L1543.8,814.3 L1548.5,818.5 L1553.3,820.2 L1558.1,823.9 L1562.9,826.2 L1567.7,828.1 L1572.4,825.9 L1577.2,826.7 L1582.0,825.2 L1586.8,827.5 L1591.5,834.9 L1596.3,849.0 L1601.1,863.9 L1605.9,880.9 L1610.7,897.0 L1615.4,908.5 L1620.2,915.8 L1625.0,921.9 L1629.8,924.6 L1634.5,928.3 L1639.3,934.7 L1644.1,938.6 L1648.9,943.3 L1653.6,949.3 L1658.4,955.5 L1663.2,956.5 L1668.0,959.8 L1672.8,963.7 L1677.5,969.9 L1682.3,970.5 L1687.1,973.2 L1691.9,973.2 L1696.6,974.8 L1701.4,968.9 L1716.0,947.0 L1729.0,943.5" fill="none" stroke="#a6dc6e" stroke-width="1" stroke-linejoin="round"/>
<path d="M100.3,368.6h1.6v1.6h-1.6zM105.1,369.6h1.6v1.6h-1.6zM109.9,370.6h1.6v1.6h-1.6zM114.6,371.6h1.6v1.6h-1.6zM119.4,372.5h1.6v1.6h-1.6zM124.2,373.5h1.6v1.6h-1.6zM129.0,374.4h1.6v1.6h-1.6zM133.8,375.4h1.6v1.6h-1.6zM138.5,376.3h1.6v1.6h-1.6zM148.1,386.0h1.6v1.6h-1.6zM152.9,393.5h1.6v1.6h-1.6zM157.6,401.4h1.6v1.6h-1.6zM162.4,411.6h1.6v1.6h-1.6zM167.2,426.0h1.6v1.6h-1.6zM172.0,439.7h1.6v1.6h-1.6zM176.8,451.6h1.6v1.6h-1.6zM181.5,462.6h1.6v1.6h-1.6zM186.3,474.2h1.6v1.6h-1.6zM191.1,486.0h1.6v1.6h-1.6zM195.9,496.2h1.6v1.6h-1.6zM200.6,505.2h1.6v1.6h-1.6zM205.4,514.9h1.6v1.6h-1.6zM210.2,525.1h1.6v1.6h-1.6zM215.0,538.6h1.6v1.6h-1.6zM219.7,549.5h1.6v1.6h-1.6zM224.5,560.6h1.6v1.6h-1.6zM229.3,570.2h1.6v1.6h-1.6zM234.1,579.5h1.6v1.6h-1.6zM238.9,587.3h1.6v1.6h-1.6zM243.6,593.8h1.6v1.6h-1.6zM262.7,595.3h1.6v1.6h-1.6zM267.5,598.9h1.6v1.6h-1.6zM272.3,603.6h1.6v1.6h-1.6zM277.1,610.9h1.6v1.6h-1.6zM281.8,617.5h1.6v1.6h-1.6zM286.6,623.8h1.6v1.6h-1.6zM291.4,629.2h1.6v1.6h-1.6zM296.2,634.0h1.6v1.6h-1.6zM358.3,599.7h1.6v1.6h-1.6zM363.1,602.3h1.6v1.6h-1.6zM367.8,604.8h1.6v1.6h-1.6zM372.6,607.2h1.6v1.6h-1.6zM377.4,609.5h1.6v1.6h-1.6zM382.2,611.7h1.6v1.6h-1.6zM386.9,614.0h1.6v1.6h-1.6zM391.7,616.5h1.6v1.6h-1.6zM396.5,618.7h1.6v1.6h-1.6zM401.3,620.6h1.6v1.6h-1.6zM406.0,622.2h1.6v1.6h-1.6zM468.1,609.2h1.6v1.6h-1.6zM472.9,610.2h1.6v1.6h-1.6zM477.7,611.3h1.6v1.6h-1.6zM544.6,606.9h1.6v1.6h-1.6zM549.4,608.2h1.6v1.6h-1.6zM554.1,609.3h1.6v1.6h-1.6zM558.9,609.8h1.6v1.6h-1.6zM563.7,610.1h1.6v1.6h-1.6zM635.3,596.4h1.6v1.6h-1.6zM640.1,597.1h1.6v1.6h-1.6zM644.9,598.1h1.6v1.6h-1.6zM649.7,599.0h1.6v1.6h-1.6zM654.5,599.9h1.6v1.6h-1.6zM659.2,601.2h1.6v1.6h-1.6zM664.0,603.4h1.6v1.6h-1.6zM668.8,605.4h1.6v1.6h-1.6zM673.6,607.5h1.6v1.6h-1.6zM678.3,609.5h1.6v1.6h-1.6zM683.1,610.6h1.6v1.6h-1.6zM687.9,611.6h1.6v1.6h-1.6zM692.7,613.5h1.6v1.6h-1.6zM773.9,515.0h1.6v1.6h-1.6zM778.7,516.3h1.6v1.6h-1.6zM783.4,518.1h1.6v1.6h-1.6zM788.2,520.2h1.6v1.6h-1.6zM793.0,523.6h1.6v1.6h-1.6zM797.8,526.4h1.6v1.6h-1.6zM802.5,527.9h1.6v1.6h-1.6zM807.3,528.7h1.6v1.6h-1.6zM812.1,529.0h1.6v1.6h-1.6zM816.9,529.1h1.6v1.6h-1.6zM821.6,532.3h1.6v1.6h-1.6zM826.4,536.9h1.6v1.6h-1.6zM831.2,542.8h1.6v1.6h-1.6zM836.0,548.5h1.6v1.6h-1.6zM840.8,554.0h1.6v1.6h-1.6zM845.5,558.7h1.6v1.6h-1.6zM850.3,563.5h1.6v1.6h-1.6zM855.1,567.3h1.6v1.6h-1.6zM859.9,571.2h1.6v1.6h-1.6zM864.6,574.1h1.6v1.6h-1.6zM869.4,590.9h1.6v1.6h-1.6zM874.2,606.0h1.6v1.6h-1.6zM879.0,620.2h1.6v1.6h-1.6zM883.7,632.7h1.6v1.6h-1.6zM888.5,643.1h1.6v1.6h-1.6zM893.3,653.1h1.6v1.6h-1.6zM898.1,665.1h1.6v1.6h-1.6zM902.9,675.5h1.6v1.6h-1.6zM907.6,684.4h1.6v1.6h-1.6zM912.4,692.0h1.6v1.6h-1.6zM917.2,700.2h1.6v1.6h-1.6zM922.0,709.5h1.6v1.6h-1.6zM926.7,718.0h1.6v1.6h-1.6zM931.5,726.7h1.6v1.6h-1.6zM936.3,738.2h1.6v1.6h-1.6zM941.1,748.1h1.6v1.6h-1.6zM945.8,756.9h1.6v1.6h-1.6zM950.6,764.3h1.6v1.6h-1.6zM955.4,769.3h1.6v1.6h-1.6zM960.2,773.2h1.6v1.6h-1.6zM1012.7,742.7h1.6v1.6h-1.6zM1017.5,743.4h1.6v1.6h-1.6zM1022.3,744.2h1.6v1.6h-1.6zM1027.1,745.3h1.6v1.6h-1.6zM1031.8,747.9h1.6v1.6h-1.6zM1036.6,752.2h1.6v1.6h-1.6zM1041.4,757.4h1.6v1.6h-1.6zM1046.2,763.4h1.6v1.6h-1.6zM1050.9,770.0h1.6v1.6h-1.6zM1055.7,775.4h1.6v1.6h-1.6zM1060.5,780.0h1.6v1.6h-1.6zM1065.3,782.7h1.6v1.6h-1.6zM1103.5,757.3h1.6v1.6h-1.6zM1108.3,758.6h1.6v1.6h-1.6zM1113.0,760.1h1.6v1.6h-1.6zM1117.8,763.1h1.6v1.6h-1.6zM1122.6,766.7h1.6v1.6h-1.6zM1127.4,769.3h1.6v1.6h-1.6zM1132.2,772.0h1.6v1.6h-1.6zM1136.9,774.0h1.6v1.6h-1.6zM1141.7,776.0h1.6v1.6h-1.6zM1227.7,765.8h1.6v1.6h-1.6zM1232.5,766.3h1.6v1.6h-1.6zM1237.2,766.9h1.6v1.6h-1.6zM1242.0,768.7h1.6v1.6h-1.6zM1246.8,771.2h1.6v1.6h-1.6zM1251.6,773.9h1.6v1.6h-1.6zM1256.4,776.9h1.6v1.6h-1.6zM1261.1,781.7h1.6v1.6h-1.6zM1265.9,786.6h1.6v1.6h-1.6zM1270.7,790.8h1.6v1.6h-1.6zM1275.5,796.0h1.6v1.6h-1.6zM1280.2,800.1h1.6v1.6h-1.6zM1347.1,778.7h1.6v1.6h-1.6zM1351.9,780.4h1.6v1.6h-1.6zM1356.7,782.6h1.6v1.6h-1.6zM1361.4,785.7h1.6v1.6h-1.6zM1366.2,789.0h1.6v1.6h-1.6zM1371.0,792.3h1.6v1.6h-1.6zM1375.8,795.6h1.6v1.6h-1.6zM1433.1,767.1h1.6v1.6h-1.6zM1437.9,767.9h1.6v1.6h-1.6zM1442.7,768.9h1.6v1.6h-1.6zM1447.4,770.3h1.6v1.6h-1.6zM1452.2,771.7h1.6v1.6h-1.6zM1457.0,773.0h1.6v1.6h-1.6zM1461.8,775.2h1.6v1.6h-1.6zM1466.5,777.3h1.6v1.6h-1.6zM1471.3,779.2h1.6v1.6h-1.6zM1476.1,781.5h1.6v1.6h-1.6zM1480.9,784.3h1.6v1.6h-1.6zM1485.6,787.2h1.6v1.6h-1.6zM1490.4,790.0h1.6v1.6h-1.6zM1495.2,792.5h1.6v1.6h-1.6zM1500.0,794.7h1.6v1.6h-1.6zM1504.8,796.8h1.6v1.6h-1.6zM1509.5,798.7h1.6v1.6h-1.6zM1514.3,800.0h1.6v1.6h-1.6zM1519.1,801.6h1.6v1.6h-1.6zM1523.9,803.2h1.6v1.6h-1.6zM1528.6,804.5h1.6v1.6h-1.6zM1533.4,805.7h1.6v1.6h-1.6zM1538.2,807.2h1.6v1.6h-1.6zM1543.0,809.0h1.6v1.6h-1.6zM1547.7,811.3h1.6v1.6h-1.6zM1552.5,814.0h1.6v1.6h-1.6zM1557.3,816.0h1.6v1.6h-1.6zM1562.1,817.6h1.6v1.6h-1.6zM1566.9,819.0h1.6v1.6h-1.6zM1571.6,819.9h1.6v1.6h-1.6zM1576.4,820.7h1.6v1.6h-1.6zM1581.2,821.4h1.6v1.6h-1.6zM1586.0,822.1h1.6v1.6h-1.6zM1590.7,822.5h1.6v1.6h-1.6zM1595.5,824.2h1.6v1.6h-1.6zM1600.3,829.7h1.6v1.6h-1.6zM1605.1,836.1h1.6v1.6h-1.6zM1609.9,844.3h1.6v1.6h-1.6zM1614.6,854.7h1.6v1.6h-1.6zM1619.4,865.7h1.6v1.6h-1.6zM1624.2,876.3h1.6v1.6h-1.6zM1629.0,887.6h1.6v1.6h-1.6zM1633.7,897.7h1.6v1.6h-1.6zM1638.5,908.9h1.6v1.6h-1.6zM1643.3,918.7h1.6v1.6h-1.6zM1648.1,926.8h1.6v1.6h-1.6zM1652.8,934.3h1.6v1.6h-1.6zM1657.6,940.6h1.6v1.6h-1.6zM1662.4,945.7h1.6v1.6h-1.6zM1667.2,951.3h1.6v1.6h-1.6zM1672.0,956.4h1.6v1.6h-1.6zM1676.7,960.4h1.6v1.6h-1.6z" fill="#e8a078"/>
<path d="M71.7,406.2h1.6v1.6h-1.6zM76.4,402.9h1.6v1.6h-1.6zM81.2,399.7h1.6v1.6h-1.6zM86.0,396.1h1.6v1.6h-1.6zM90.8,392.4h1.6v1.6h-1.6zM253.2,620.5h1.6v1.6h-1.6zM258.0,620.5h1.6v1.6h-1.6zM301.0,692.8h1.6v1.6h-1.6zM305.7,689.4h1.6v1.6h-1.6zM310.5,686.7h1.6v1.6h-1.6zM315.3,681.8h1.6v1.6h-1.6zM320.1,676.6h1.6v1.6h-1.6zM324.8,672.0h1.6v1.6h-1.6zM329.6,667.5h1.6v1.6h-1.6zM334.4,663.3h1.6v1.6h-1.6zM339.2,659.6h1.6v1.6h-1.6zM343.9,655.6h1.6v1.6h-1.6zM348.7,652.3h1.6v1.6h-1.6zM353.5,649.5h1.6v1.6h-1.6zM410.8,666.7h1.6v1.6h-1.6zM415.6,665.3h1.6v1.6h-1.6zM420.4,664.6h1.6v1.6h-1.6zM425.2,663.3h1.6v1.6h-1.6zM429.9,662.4h1.6v1.6h-1.6zM434.7,660.2h1.6v1.6h-1.6zM439.5,657.2h1.6v1.6h-1.6zM444.3,654.3h1.6v1.6h-1.6zM449.0,651.3h1.6v1.6h-1.6zM453.8,648.8h1.6v1.6h-1.6zM458.6,646.6h1.6v1.6h-1.6zM482.5,668.8h1.6v1.6h-1.6zM487.3,666.3h1.6v1.6h-1.6zM492.0,663.8h1.6v1.6h-1.6zM496.8,661.2h1.6v1.6h-1.6zM501.6,658.8h1.6v1.6h-1.6zM506.4,657.1h1.6v1.6h-1.6zM511.1,654.9h1.6v1.6h-1.6zM515.9,652.9h1.6v1.6h-1.6zM520.7,651.2h1.6v1.6h-1.6zM525.5,649.5h1.6v1.6h-1.6zM530.2,647.8h1.6v1.6h-1.6zM535.0,646.2h1.6v1.6h-1.6zM539.8,644.6h1.6v1.6h-1.6zM568.5,643.6h1.6v1.6h-1.6zM573.2,642.0h1.6v1.6h-1.6zM578.0,639.8h1.6v1.6h-1.6zM582.8,637.3h1.6v1.6h-1.6zM587.6,634.9h1.6v1.6h-1.6zM592.3,632.3h1.6v1.6h-1.6zM597.1,629.7h1.6v1.6h-1.6zM601.9,627.7h1.6v1.6h-1.6zM606.7,626.0h1.6v1.6h-1.6zM611.5,624.3h1.6v1.6h-1.6zM616.2,622.6h1.6v1.6h-1.6zM621.0,621.1h1.6v1.6h-1.6zM625.8,619.9h1.6v1.6h-1.6zM630.6,619.0h1.6v1.6h-1.6zM702.2,631.8h1.6v1.6h-1.6zM707.0,628.2h1.6v1.6h-1.6zM711.8,623.3h1.6v1.6h-1.6zM716.6,617.0h1.6v1.6h-1.6zM721.3,607.7h1.6v1.6h-1.6zM726.1,600.2h1.6v1.6h-1.6zM730.9,589.8h1.6v1.6h-1.6zM735.7,580.9h1.6v1.6h-1.6zM740.4,573.3h1.6v1.6h-1.6zM745.2,565.3h1.6v1.6h-1.6zM750.0,557.9h1.6v1.6h-1.6zM754.8,549.0h1.6v1.6h-1.6zM759.5,542.5h1.6v1.6h-1.6zM764.3,536.9h1.6v1.6h-1.6zM769.1,532.8h1.6v1.6h-1.6zM965.0,792.6h1.6v1.6h-1.6zM969.7,791.0h1.6v1.6h-1.6zM974.5,788.8h1.6v1.6h-1.6zM979.3,786.8h1.6v1.6h-1.6zM984.1,784.7h1.6v1.6h-1.6zM988.8,781.1h1.6v1.6h-1.6zM993.6,777.8h1.6v1.6h-1.6zM998.4,775.2h1.6v1.6h-1.6zM1003.2,772.2h1.6v1.6h-1.6zM1007.9,769.8h1.6v1.6h-1.6zM1070.0,808.2h1.6v1.6h-1.6zM1074.8,806.4h1.6v1.6h-1.6zM1079.6,803.6h1.6v1.6h-1.6zM1084.4,799.5h1.6v1.6h-1.6zM1089.2,796.2h1.6v1.6h-1.6zM1093.9,793.3h1.6v1.6h-1.6zM1146.5,801.1h1.6v1.6h-1.6zM1151.3,800.5h1.6v1.6h-1.6zM1156.0,800.0h1.6v1.6h-1.6zM1160.8,799.7h1.6v1.6h-1.6zM1165.6,799.3h1.6v1.6h-1.6zM1170.4,799.3h1.6v1.6h-1.6zM1175.1,799.3h1.6v1.6h-1.6zM1179.9,799.3h1.6v1.6h-1.6zM1184.7,799.3h1.6v1.6h-1.6zM1189.5,799.2h1.6v1.6h-1.6zM1194.3,798.3h1.6v1.6h-1.6zM1199.0,797.1h1.6v1.6h-1.6zM1203.8,794.2h1.6v1.6h-1.6zM1208.6,791.3h1.6v1.6h-1.6zM1213.4,790.0h1.6v1.6h-1.6zM1294.6,820.5h1.6v1.6h-1.6zM1299.3,819.9h1.6v1.6h-1.6zM1304.1,819.0h1.6v1.6h-1.6zM1308.9,818.4h1.6v1.6h-1.6zM1313.7,816.8h1.6v1.6h-1.6zM1318.5,813.7h1.6v1.6h-1.6zM1323.2,809.7h1.6v1.6h-1.6zM1328.0,806.3h1.6v1.6h-1.6zM1332.8,803.5h1.6v1.6h-1.6zM1385.3,820.5h1.6v1.6h-1.6zM1390.1,819.2h1.6v1.6h-1.6zM1394.9,817.2h1.6v1.6h-1.6zM1399.7,813.7h1.6v1.6h-1.6zM1404.4,809.4h1.6v1.6h-1.6zM1409.2,804.3h1.6v1.6h-1.6zM1414.0,799.3h1.6v1.6h-1.6zM1418.8,794.2h1.6v1.6h-1.6zM1423.5,789.4h1.6v1.6h-1.6zM1428.3,786.7h1.6v1.6h-1.6zM1686.3,981.8h1.6v1.6h-1.6zM1691.1,981.8h1.6v1.6h-1.6zM1695.8,981.8h1.6v1.6h-1.6zM1700.6,981.5h1.6v1.6h-1.6zM1705.4,980.5h1.6v1.6h-1.6zM1710.2,979.1h1.6v1.6h-1.6zM1714.9,978.0h1.6v1.6h-1.6zM1719.7,976.6h1.6v1.6h-1.6zM1724.5,975.2h1.6v1.6h-1.6zM1729.3,974.0h1.6v1.6h-1.6z" fill="#d8e4dc"/>
<line x1="69" y1="941.5" x2="1779" y2="941.5" stroke="#ece6d8" stroke-width="1.3"/>
<path d="M0,934.5H64L69.5,941.8L64,949.2H0z" fill="#ece6d8"/>
<text x="3.6" y="945.9" font-size="11.4" fill="#1a1a1a" textLength="57.4" lengthAdjust="spacingAndGlyphs">51,117.26</text>
<path d="M1703,947.5H1727" stroke="#8fd6f4" stroke-width="1.6" stroke-dasharray="4 2"/>
<rect x="1726" y="940.5" width="6" height="8" fill="#f4f020"/>
<defs>
<linearGradient id="gbtn" x1="0" y1="0" x2="0" y2="1"><stop offset="0" stop-color="#626262"/><stop offset="0.5" stop-color="#4a4a4a"/><stop offset="1" stop-color="#383838"/></linearGradient>
<linearGradient id="gblue" x1="0" y1="0" x2="0" y2="1"><stop offset="0" stop-color="#4464a8"/><stop offset="1" stop-color="#38569a"/></linearGradient>
<linearGradient id="gwl" x1="0" y1="0" x2="1" y2="0"><stop offset="0" stop-color="#fff" stop-opacity="0.3"/><stop offset="0.04" stop-color="#fff" stop-opacity="1"/><stop offset="1" stop-color="#e8e8e8"/></linearGradient>
<filter id="soft" x="-5%" y="-20%" width="110%" height="140%"><feGaussianBlur stdDeviation="0.5"/></filter>
</defs>
<g fill="none" stroke="#c8c8c8" stroke-width="1.8"><ellipse cx="19.2" cy="17.8" rx="3.4" ry="2.6" transform="rotate(-40 19.2 17.8)"/><ellipse cx="25.2" cy="12.4" rx="3.4" ry="2.6" transform="rotate(-40 25.2 12.4)"/></g>
<rect x="36.5" y="5" width="111.0" height="20" fill="#fff" stroke="#8a8a8a" stroke-width="1"/>
<text x="43" y="19.8" font-size="12.5" fill="#111" textLength="53.8" lengthAdjust="spacingAndGlyphs">マーケット</text>
<path d="M136.0,13.0h6.4l-3.2,4z" fill="#111"/>
<rect x="153.5" y="5" width="251.0" height="20" fill="#fff" stroke="#8a8a8a" stroke-width="1"/>
<text x="160.5" y="19.8" font-size="12.5" fill="#111" textLength="48.6" lengthAdjust="spacingAndGlyphs">日経225</text>
<path d="M393.0,13.0h6.4l-3.2,4z" fill="#111"/>
<rect x="411.5" y="5" width="74.0" height="20" fill="#fff" stroke="#8a8a8a" stroke-width="1"/>
<text x="418.5" y="19.8" font-size="12.5" fill="#111" textLength="32.9" lengthAdjust="spacingAndGlyphs">1分足</text>
<path d="M474.0,13.0h6.4l-3.2,4z" fill="#111"/>
<rect x="492" y="5" width="18" height="20" fill="url(#gbtn)"/>
<rect x="511" y="5" width="18" height="20" fill="url(#gbtn)"/>
<path d="M503.5,10.5l-3.8,4.7l3.8,4.7" fill="none" stroke="#d8d8d8" stroke-width="1.7"/>
<path d="M517.8,10.5l3.8,4.7l-3.8,4.7" fill="none" stroke="#d8d8d8" stroke-width="1.7"/>
<rect x="536" y="5" width="60" height="20" fill="url(#gblue)"/>
<text x="540.5" y="20.2" font-size="12.5" fill="#fff" textLength="51.3" lengthAdjust="spacingAndGlyphs">表示期間</text>
<rect x="603" y="5" width="60" height="20" fill="url(#gbtn)"/>
<text x="608" y="20.2" font-size="12.5" fill="#fff" textLength="48" lengthAdjust="spacingAndGlyphs">テクニカル</text>
<rect x="670" y="5" width="52" height="20" fill="url(#gblue)"/>
<text x="683.25" y="20.2" font-size="12.5" fill="#fff" textLength="26" lengthAdjust="spacingAndGlyphs">通常</text>
<rect x="723" y="5" width="52" height="20" fill="url(#gbtn)"/>
<text x="730" y="20.2" font-size="12.5" fill="#fff" textLength="38.2" lengthAdjust="spacingAndGlyphs">指数化</text>
<rect x="776" y="5" width="52" height="20" fill="url(#gbtn)"/>
<text x="778" y="20.2" font-size="12.5" fill="#fff" textLength="50" lengthAdjust="spacingAndGlyphs">スプレッド</text>
<rect x="835.5" y="5" width="2.2" height="20" fill="#6a6a6a"/>
<text x="13.4" y="49.3" font-size="12.8" fill="#fff" textLength="50.9" lengthAdjust="spacingAndGlyphs">表示期間</text>
<rect x="71.5" y="33" width="76.0" height="20" fill="#fff" stroke="#8a8a8a" stroke-width="1"/>
<text x="77.5" y="47.8" font-size="12.5" fill="#111" textLength="50" lengthAdjust="spacingAndGlyphs">本数指定</text>
<path d="M136.0,41.0h6.4l-3.2,4z" fill="#111"/>
<text x="153.8" y="49.3" font-size="12.8" fill="#fff" textLength="25.4" lengthAdjust="spacingAndGlyphs">本数</text>
<rect x="186.5" y="33" width="41" height="20" fill="#fff" stroke="#8a8a8a"/>
<text x="201.58" y="48.3" font-size="12.5" fill="#111" textLength="23.6" lengthAdjust="spacingAndGlyphs">358</text>
<rect x="228.5" y="33.5" width="14.3" height="19.5" fill="url(#gbtn)"/>
<path d="M232.35,41h6.6l-3.3,4.6z" fill="#e4e4e4"/>
<rect x="243.7" y="33.5" width="14.3" height="19.5" fill="url(#gbtn)"/>
<path d="M247.54999999999998,45.4h6.6l-3.3,-4.6z" fill="#e4e4e4"/>
<text x="264.7" y="49.3" font-size="12.8" fill="#fff" textLength="61" lengthAdjust="spacingAndGlyphs">表示期間:</text>
<text x="336.3" y="48.6" font-size="12.5" fill="#fff" textLength="116.5" lengthAdjust="spacingAndGlyphs">2026/01/07 15:15</text>
<text x="457" y="48.6" font-size="13" fill="#fff">～</text>
<text x="475.1" y="48.6" font-size="12.5" fill="#fff" textLength="117.5" lengthAdjust="spacingAndGlyphs">2026/01/08 15:30</text>
<rect x="600" y="33" width="20" height="19.6" fill="url(#gbtn)"/>
<path d="M605.5,38.2h6.2a3.6,3.6 0 0 1 0,7.2h-3.4" fill="none" stroke="#f0f0f0" stroke-width="2.6"/><path d="M609.6,41.2v8.4l-5.4,-4.2z" fill="#f0f0f0"/>
<text x="13.4" y="81.2" font-size="14.6" fill="#e8688a" textLength="56.4" lengthAdjust="spacingAndGlyphs">日経225</text>
<text x="321" y="79.3" font-size="12.8" fill="#86e6f6" textLength="39.3" lengthAdjust="spacingAndGlyphs">現在値</text>
<text x="390.3" y="79.4" font-size="12.5" fill="#f2f08c" textLength="64.6" lengthAdjust="spacingAndGlyphs">51,117.26</text>
<text x="514.5" y="79.4" font-size="12.5" fill="#66d866" textLength="49.9" lengthAdjust="spacingAndGlyphs">-844.72</text>
<text x="619.4" y="79.4" font-size="12.5" fill="#66d866" textLength="47" lengthAdjust="spacingAndGlyphs">-1.63%</text>
<text x="681.7" y="79.4" font-size="12.5" fill="#f2f08c" textLength="59.1" lengthAdjust="spacingAndGlyphs">26/01/08</text>
<text x="752.3" y="79.4" font-size="12.5" fill="#f2f08c" textLength="35.8" lengthAdjust="spacingAndGlyphs">15:45</text>
<text x="13.4" y="104.6" font-size="12.8" fill="#86e6f6" textLength="25.6" lengthAdjust="spacingAndGlyphs">始値</text>
<text x="76.6" y="104.3" font-size="12.5" fill="#f2f08c" textLength="64.6" lengthAdjust="spacingAndGlyphs">51,769.83</text>
<text x="150.4" y="104.3" font-size="12.5" fill="#f2f08c" textLength="35.8" lengthAdjust="spacingAndGlyphs">09:00</text>
<text x="208.3" y="104.6" font-size="12.8" fill="#86e6f6" textLength="25.6" lengthAdjust="spacingAndGlyphs">高値</text>
<text x="271" y="104.3" font-size="12.5" fill="#f2f08c" textLength="64.6" lengthAdjust="spacingAndGlyphs">51,866.19</text>
<text x="345.3" y="104.3" font-size="12.5" fill="#f2f08c" textLength="35.8" lengthAdjust="spacingAndGlyphs">09:00</text>
<text x="403.2" y="104.6" font-size="12.8" fill="#86e6f6" textLength="25.6" lengthAdjust="spacingAndGlyphs">安値</text>
<text x="466.7" y="104.3" font-size="12.5" fill="#f2f08c" textLength="64.6" lengthAdjust="spacingAndGlyphs">51,052.83</text>
<text x="540.4" y="104.3" font-size="12.5" fill="#f2f08c" textLength="35.8" lengthAdjust="spacingAndGlyphs">15:23</text>
<text x="598.4" y="104.6" font-size="12.8" fill="#86e6f6" textLength="52.1" lengthAdjust="spacingAndGlyphs">前日終値</text>
<text x="687.1" y="104.3" font-size="12.5" fill="#f2f08c" textLength="65.5" lengthAdjust="spacingAndGlyphs">51,961.98</text>
<text x="767.7" y="104.6" font-size="12.8" fill="#86e6f6" textLength="37.3" lengthAdjust="spacingAndGlyphs">出来高</text>
<text x="907" y="104.3" font-size="12.5" fill="#f2f08c">0</text>
<rect x="956.7" y="5.2" width="381" height="3.8" fill="url(#gwl)"/>
<rect x="838.8" y="19.4" width="485.5" height="60.7" rx="7" ry="7" fill="#000" stroke="#f0306e" stroke-width="4.4"/>
<text x="850.6" y="68.8" font-size="45.6" fill="#fff" stroke="#fff" stroke-width="0.58" stroke-linejoin="round" filter="url(#soft)" textLength="215" lengthAdjust="spacingAndGlyphs">評価損益額</text>
<text x="1097.5" y="68.3" font-size="45.6" fill="#5cd85c" stroke="#5cd85c" stroke-width="0.49" stroke-linejoin="round" filter="url(#soft)" textLength="164.8" lengthAdjust="spacingAndGlyphs">-14,547</text>
<text x="1265.8" y="68.8" font-size="45.6" fill="#5cd85c" stroke="#5cd85c" stroke-width="0.49" stroke-linejoin="round" filter="url(#soft)">円</text>
<defs><linearGradient id="gsub" x1="0" y1="0" x2="0" y2="1"><stop offset="0" stop-color="#707070"/><stop offset="1" stop-color="#595959"/></linearGradient></defs>
<g font-family="Liberation Sans, Noto Sans CJK JP, sans-serif">
<rect x="1119.0" y="269.7" width="198.0" height="211.62" fill="#2c2c2c"/>
<rect x="1317" y="269.7" width="291.29999999999995" height="211.62" fill="#f6f6f2"/>
<rect x="1119.0" y="270.50" width="107.0" height="34.17" fill="#444"/>
<rect x="1226" y="270.50" width="23" height="34.17" fill="#444"/>
<text x="1123.6" y="282.6" font-size="10.4" fill="#1a1a1a" font-weight="bold">日本国債</text>
<text x="1165.2" y="282.6" font-size="10.608" fill="#1a1a1a" font-weight="bold" >10</text>
<text x="1177" y="282.6" font-size="10.4" fill="#1a1a1a" font-weight="bold">年利回り</text>
<text x="1122.6" y="281.6" font-size="10.4" fill="#fbf4f2" font-weight="bold">日本国債</text>
<text x="1164.2" y="281.6" font-size="10.608" fill="#fbf4f2" font-weight="bold" >10</text>
<text x="1176" y="281.6" font-size="10.4" fill="#fbf4f2" font-weight="bold">年利回り</text>
<rect x="1163" y="287.4" width="61.700000000000045" height="14.200000000000045" fill="url(#gsub)"/>
<rect x="1163" y="287.4" width="61.700000000000045" height="1" fill="#7e7e7e"/>
<path d="M1167,291.0l3.2,3.4l-3.2,3.4z" fill="#a8a8a8"/>
<text x="1175.3" y="299" font-size="8.8" fill="#333" font-weight="bold">国債</text>
<text x="1195.9" y="299" font-size="8.8" fill="#333" font-weight="bold">債券</text>
<text x="1174.5" y="298.2" font-size="8.8" fill="#f4f4f4" font-weight="bold">国債</text>
<text x="1195.1" y="298.2" font-size="8.8" fill="#f4f4f4" font-weight="bold">債券</text>
<circle cx="1237.4" cy="280.6" r="10.4" fill="#fff"/><circle cx="1237.4" cy="280.6" r="5.6" fill="#cc4432"/>
<rect x="1227" y="292.6" width="21" height="9.4" fill="#ecd45e"/>
<text x="1237.5" y="300.6" font-size="9.2" fill="#3a3a30" text-anchor="middle" textLength="19" lengthAdjust="spacingAndGlyphs" >15:49</text>
<rect x="1249.4" y="270.8" width="66.4" height="33.57" fill="#fff"/>
<path d="M1256.0,280.6 L1257.7,280.9 L1259.4,280.6 L1261.0,279.9 L1262.7,279.9 L1264.3,279.2 L1266.0,278.8 L1267.7,278.3 L1269.3,277.2 L1270.3,273.8 L1270.6,282.1 L1272.4,282.2 L1274.1,282.8 L1275.8,282.5 L1277.6,283.2 L1279.3,283.7 L1280.9,283.7 L1282.6,284.7 L1284.3,285.1 L1285.9,284.7 L1287.6,285.1 L1289.2,285.9 L1290.9,286.7 L1292.6,286.7 L1294.2,286.9 L1295.9,287.5 L1297.2,291.2 L1299.0,291.4 L1300.7,291.6 L1302.5,291.6 L1304.2,291.9 L1305.8,292.4 L1307.5,292.9 L1309.2,293.6 L1311.5,293.8 L1313.8,293.9 L1315.8,296.0 L1315.8,281.9 L1256.0,281.9z" fill="#f3aaaa" opacity="0.75"/>
<path d="M1256.0,280.6 L1257.7,280.9 L1259.4,280.6 L1261.0,279.9 L1262.7,279.9 L1264.3,279.2 L1266.0,278.8 L1267.7,278.3 L1269.3,277.2 L1270.3,273.8 L1270.6,282.1 L1272.4,282.2 L1274.1,282.8 L1275.8,282.5 L1277.6,283.2 L1279.3,283.7 L1280.9,283.7 L1282.6,284.7 L1284.3,285.1 L1285.9,284.7 L1287.6,285.1 L1289.2,285.9 L1290.9,286.7 L1292.6,286.7 L1294.2,286.9 L1295.9,287.5 L1297.2,291.2 L1299.0,291.4 L1300.7,291.6 L1302.5,291.6 L1304.2,291.9 L1305.8,292.4 L1307.5,292.9 L1309.2,293.6 L1311.5,293.8 L1313.8,293.9 L1315.8,296.0" fill="none" stroke="#d86060" stroke-width="0.8"/>
<rect x="1252.4" y="301.8" width="3.4" height="1.2" fill="#a8a8a8"/>
<rect x="1261.8" y="301.8" width="3.4" height="1.2" fill="#a8a8a8"/>
<rect x="1271.2" y="301.8" width="3.4" height="1.2" fill="#d8a090"/>
<rect x="1280.6" y="301.8" width="3.4" height="1.2" fill="#a8a8a8"/>
<rect x="1290.0" y="301.8" width="3.4" height="1.2" fill="#a8a8a8"/>
<rect x="1299.4" y="301.8" width="3.4" height="1.2" fill="#a8a8a8"/>
<rect x="1308.8" y="301.8" width="3.4" height="1.2" fill="#a8a8a8"/>
<path d="M1256.0,280.9L1262.4,279.9L1269.0,277.5L1270.2,274.2L1270.6,281.9L1256.0,281.9z" fill="#dff2dc" stroke="#58a858" stroke-width="0.8"/>
<text x="1408.3" y="293.4" font-size="20.5" fill="#111" font-weight="bold" text-anchor="end" >2.070</text>
<text x="1474.0" y="292.2" font-size="14.8" fill="#cc3c3c" text-anchor="end" >-0.052</text>
<rect x="1485.2" y="273.4" width="61.5" height="24.4" fill="#efd2d2"/>
<path d="M1489.3,282.6h9.5l-4.7,8.8z" fill="#cc3c3c"/>
<text x="1500.4" y="292.0" font-size="17.5" fill="#cc3c3c" font-weight="bold" >2.45</text>
<text x="1535.4" y="292.0" font-size="8.1" fill="#cc3c3c" font-weight="bold" >%</text>
<text x="1601.6" y="281.4" font-size="9.6" fill="#8c8c8c" text-anchor="end" >H:2.110</text>
<text x="1601.6" y="295.0" font-size="9.6" fill="#8c8c8c" text-anchor="end" >L:2.067</text>
<rect x="1119.0" y="305.67" width="107.0" height="34.17" fill="#444"/>
<rect x="1226" y="305.67" width="23" height="34.17" fill="#444"/>
<text x="1123.6" y="321.17" font-size="13.2" fill="#1a1a1a" font-weight="bold">長期国債先物</text>
<text x="1205.8" y="321.17" font-size="8.6" fill="#1a1a1a" font-weight="bold">大取</text>
<text x="1122.6" y="320.17" font-size="13.2" fill="#fbf4f2" font-weight="bold">長期国債先物</text>
<text x="1204.8" y="320.17" font-size="8.6" fill="#fbf4f2" font-weight="bold">大取</text>
<circle cx="1237.4" cy="315.77000000000004" r="10.4" fill="#fff"/><circle cx="1237.4" cy="315.77000000000004" r="5.6" fill="#cc4432"/>
<rect x="1227" y="327.8" width="21" height="9.4" fill="#ecd45e"/>
<text x="1237.5" y="335.8" font-size="9.2" fill="#3a3a30" text-anchor="middle" textLength="19" lengthAdjust="spacingAndGlyphs" >15:36</text>
<rect x="1249.4" y="305.97" width="66.4" height="33.57" fill="#fff"/>
<path d="M1249.4,328.9 L1251.4,330.2 L1253.4,330.1 L1255.4,331.2 L1257.4,333.4 L1259.0,330.9 L1260.7,328.4 L1262.3,329.2 L1264.0,331.0 L1265.8,329.6 L1267.5,328.3 L1269.3,326.2 L1271.3,324.7 L1273.3,322.6 L1275.3,319.8 L1277.3,316.8 L1279.1,315.9 L1280.8,314.3 L1282.6,313.3 L1284.4,313.5 L1286.1,313.7 L1287.9,314.3 L1289.7,314.2 L1291.5,313.2 L1293.2,312.5 L1295.2,312.9 L1297.2,311.8 L1299.2,311.4 L1300.9,311.1 L1302.5,310.9 L1304.2,311.6 L1305.8,311.4 L1307.6,312.7 L1309.4,314.2 L1311.2,314.3 L1313.0,314.2 L1314.8,316.0 L1315.1,307.3 L1315.1,326.8 L1249.4,326.8z" fill="#c6ecc0" opacity="0.8"/>
<path d="M1249.4,328.9 L1251.4,330.2 L1253.4,330.1 L1255.4,331.2 L1257.4,333.4 L1259.0,330.9 L1260.7,328.4 L1262.3,329.2 L1264.0,331.0 L1265.8,329.6 L1267.5,328.3 L1269.3,326.2 L1271.3,324.7 L1273.3,322.6 L1275.3,319.8 L1277.3,316.8 L1279.1,315.9 L1280.8,314.3 L1282.6,313.3 L1284.4,313.5 L1286.1,313.7 L1287.9,314.3 L1289.7,314.2 L1291.5,313.2 L1293.2,312.5 L1295.2,312.9 L1297.2,311.8 L1299.2,311.4 L1300.9,311.1 L1302.5,310.9 L1304.2,311.6 L1305.8,311.4 L1307.6,312.7 L1309.4,314.2 L1311.2,314.3 L1313.0,314.2 L1314.8,316.0 L1315.1,307.3" fill="none" stroke="#58a858" stroke-width="0.8"/>
<rect x="1252.4" y="336.9" width="3.4" height="1.2" fill="#a8a8a8"/>
<rect x="1260.5" y="336.9" width="3.4" height="1.2" fill="#a8a8a8"/>
<rect x="1268.5" y="336.9" width="3.4" height="1.2" fill="#d8a090"/>
<rect x="1276.6" y="336.9" width="3.4" height="1.2" fill="#a8a8a8"/>
<rect x="1284.6" y="336.9" width="3.4" height="1.2" fill="#a8a8a8"/>
<rect x="1292.7" y="336.9" width="3.4" height="1.2" fill="#a8a8a8"/>
<rect x="1300.7" y="336.9" width="3.4" height="1.2" fill="#a8a8a8"/>
<rect x="1308.8" y="336.9" width="3.4" height="1.2" fill="#a8a8a8"/>
<rect x="1318" y="304.8" width="289" height="1" fill="#deded8"/>
<text x="1408.3" y="328.6" font-size="20.5" fill="#111" font-weight="bold" text-anchor="end" >132.74</text>
<text x="1474.0" y="327.4" font-size="14.8" fill="#3a8a3a" text-anchor="end" >+0.07</text>
<rect x="1485.2" y="308.57" width="61.5" height="24.4" fill="#ecece8"/>
<text x="1494.8" y="327.2" font-size="17.5" fill="#3a8a3a" font-weight="bold" >0.00</text>
<text x="1529.9" y="327.2" font-size="8.1" fill="#3a8a3a" font-weight="bold" >%</text>
<text x="1601.6" y="316.6" font-size="9.6" fill="#8c8c8c" text-anchor="end" >H:132.79</text>
<text x="1601.6" y="330.2" font-size="9.6" fill="#8c8c8c" text-anchor="end" >L:132.72</text>
<rect x="1119.0" y="340.84" width="107.0" height="34.17" fill="#444"/>
<rect x="1226" y="340.84" width="23" height="34.17" fill="#444"/>
<text x="1123.6" y="356.34" font-size="13.2" fill="#1a1a1a" font-weight="bold">日経</text>
<text x="1150.0" y="356.3" font-size="13.463999999999999" fill="#1a1a1a" font-weight="bold" >VI</text>
<text x="1122.6" y="355.34" font-size="13.2" fill="#fbf4f2" font-weight="bold">日経</text>
<text x="1149.0" y="355.3" font-size="13.463999999999999" fill="#fbf4f2" font-weight="bold" >VI</text>
<rect x="1163" y="357.74" width="61.700000000000045" height="14.200000000000045" fill="url(#gsub)"/>
<rect x="1163" y="357.74" width="61.700000000000045" height="1" fill="#7e7e7e"/>
<path d="M1167,361.34000000000003l3.2,3.4l-3.2,3.4z" fill="#a8a8a8"/>
<text x="1175.3" y="369.34" font-size="8.8" fill="#333" font-weight="bold">恐怖指数</text>
<text x="1174.5" y="368.54" font-size="8.8" fill="#f4f4f4" font-weight="bold">恐怖指数</text>
<clipPath id="r1237350"><circle cx="1237.4" cy="350.94000000000005" r="10.4"/></clipPath>
<g clip-path="url(#r1237350)"><rect x="1226.4" y="339.94000000000005" width="22" height="22" fill="#5e5e5e"/>
<path d="M1225.4,356.9l7,-13l1.6,1l-7,13z" fill="#9c9c9c"/>
<path d="M1228.0,358.1l7,-13l1.6,1l-7,13z" fill="#9c9c9c"/>
<path d="M1230.6,359.3l7,-13l1.6,1l-7,13z" fill="#9c9c9c"/>
<path d="M1233.2,360.5l7,-13l1.6,1l-7,13z" fill="#9c9c9c"/>
<path d="M1230.4,343.44000000000005l12,15" stroke="#3a3a3a" stroke-width="1.1"/>
<path d="M1234.4,361.94000000000005l3.6,-11h6l3.4,11z" fill="#3c3c3c"/>
<circle cx="1240.0" cy="346.74000000000007" r="3.4" fill="#a4a4a4"/><circle cx="1238.9" cy="346.5400000000001" r="0.8" fill="#4a4a4a"/><circle cx="1241.2" cy="346.5400000000001" r="0.8" fill="#4a4a4a"/>
</g><circle cx="1237.4" cy="350.94000000000005" r="10.4" fill="none" stroke="#868686" stroke-width="0.9"/>
<text x="1237.5" y="371.1" font-size="9" fill="#d2d2d2" text-anchor="middle" textLength="19.6" lengthAdjust="spacingAndGlyphs" >01/08</text>
<rect x="1249.4" y="341.14000000000004" width="66.4" height="33.57" fill="#ebe6ea"/>
<rect x="1249.4" y="347.9" width="66.4" height="23.9" fill="#f4d6d6" opacity="0.55"/>
<path d="M1249.4,349.5 L1250.7,364.6 L1252.1,364.6 L1252.4,349.5 L1255.4,349.5 L1256.0,364.0 L1256.0,347.9 L1249.4,347.9z" fill="#f0b0b0" opacity="0.5"/>
<path d="M1249.4,349.5 L1250.7,364.6 L1252.1,364.6 L1252.4,349.5 L1255.4,349.5 L1256.0,364.0" fill="none" stroke="#d86060" stroke-width="0.8"/>
<line x1="1250.4" y1="347.9" x2="1314.8000000000002" y2="347.9" stroke="#7a86d8" stroke-width="0.9" stroke-dasharray="1.2 1.6"/>
<rect x="1252.4" y="372.1" width="3.4" height="1.2" fill="#a8a8a8"/>
<rect x="1280.6" y="372.1" width="3.4" height="1.2" fill="#a8a8a8"/>
<rect x="1308.8" y="372.1" width="3.4" height="1.2" fill="#a8a8a8"/>
<rect x="1318" y="339.9" width="289" height="1" fill="#deded8"/>
<text x="1408.3" y="363.7" font-size="20.5" fill="#737373" font-weight="bold" text-anchor="end" >30.47</text>
<text x="1474.0" y="362.5" font-size="14.8" fill="#cc3c3c" text-anchor="end" >-0.52</text>
<rect x="1485.2" y="343.74" width="61.5" height="24.4" fill="#f0e2e2"/>
<path d="M1493.5,353.6h7.9l-3.9,7.3z" fill="#cc3c3c"/>
<text x="1503.0" y="361.5" font-size="14.6" fill="#cc3c3c" font-weight="bold" >1.68</text>
<text x="1532.4" y="361.5" font-size="6.7" fill="#cc3c3c" font-weight="bold" >%</text>
<text x="1601.6" y="351.7" font-size="9.6" fill="#8c8c8c" text-anchor="end" >H:30.75</text>
<text x="1601.6" y="365.3" font-size="9.6" fill="#8c8c8c" text-anchor="end" >L:26.99</text>
<rect x="1119.0" y="376.01" width="107.0" height="34.17" fill="#444"/>
<rect x="1226" y="376.01" width="23" height="34.17" fill="#444"/>
<text x="1123.6" y="391.5" font-size="13.463999999999999" fill="#1a1a1a" font-weight="bold" >NT</text>
<text x="1141.55" y="391.51" font-size="13.2" fill="#1a1a1a" font-weight="bold">倍率</text>
<text x="1122.6" y="390.5" font-size="13.463999999999999" fill="#fbf4f2" font-weight="bold" >NT</text>
<text x="1140.55" y="390.51" font-size="13.2" fill="#fbf4f2" font-weight="bold">倍率</text>
<rect x="1163" y="392.90999999999997" width="61.700000000000045" height="14.200000000000045" fill="url(#gsub)"/>
<rect x="1163" y="392.90999999999997" width="61.700000000000045" height="1" fill="#7e7e7e"/>
<path d="M1167,396.51l3.2,3.4l-3.2,3.4z" fill="#a8a8a8"/>
<text x="1175.3" y="404.3" font-size="9.2" fill="#333" font-weight="bold" >NT</text>
<text x="1187.56" y="404.51" font-size="8.8" fill="#333" font-weight="bold">倍率</text>
<text x="1174.5" y="403.5" font-size="9.2" fill="#f4f4f4" font-weight="bold" >NT</text>
<text x="1186.76" y="403.71" font-size="8.8" fill="#f4f4f4" font-weight="bold">倍率</text>
<circle cx="1237.4" cy="386.11" r="10.4" fill="#8c8c8c"/><circle cx="1237.4" cy="386.11" r="10.4" fill="none" stroke="#7a7a7a" stroke-width="0.8"/><circle cx="1237.4" cy="386.11" r="5.4" fill="#8a4238"/>
<text x="1237.5" y="406.3" font-size="9" fill="#d2d2d2" text-anchor="middle" textLength="19.6" lengthAdjust="spacingAndGlyphs" >01/08</text>
<rect x="1249.4" y="376.31" width="66.4" height="33.57" fill="#e9e9ee"/>
<rect x="1249.4" y="387.4" width="66.4" height="19.5" fill="#f4d6d6" opacity="0.55"/>
<path d="M1249.4,391.2 L1251.1,391.4 L1252.7,392.2 L1254.4,392.3 L1256.0,392.7 L1257.7,393.3 L1259.4,394.2 L1261.0,394.4 L1262.7,394.7 L1264.5,394.4 L1266.2,394.9 L1268.0,394.9 L1270.0,393.8 L1272.0,392.7 L1274.0,394.2 L1276.0,396.2 L1277.6,396.2 L1279.3,396.3 L1280.9,396.4 L1282.6,395.9 L1284.3,396.1 L1285.9,396.6 L1288.2,398.0 L1290.6,399.5 L1292.2,399.7 L1293.9,399.1 L1295.5,399.7 L1297.2,400.0 L1298.9,400.0 L1300.5,399.8 L1302.2,400.3 L1303.8,400.1 L1305.6,401.6 L1307.4,402.2 L1309.2,402.5 L1311.5,403.0 L1313.8,404.2 L1315.8,403.2 L1315.8,387.4 L1249.4,387.4z" fill="#f0a8a8" opacity="0.7"/>
<path d="M1249.4,391.2 L1251.1,391.4 L1252.7,392.2 L1254.4,392.3 L1256.0,392.7 L1257.7,393.3 L1259.4,394.2 L1261.0,394.4 L1262.7,394.7 L1264.5,394.4 L1266.2,394.9 L1268.0,394.9 L1270.0,393.8 L1272.0,392.7 L1274.0,394.2 L1276.0,396.2 L1277.6,396.2 L1279.3,396.3 L1280.9,396.4 L1282.6,395.9 L1284.3,396.1 L1285.9,396.6 L1288.2,398.0 L1290.6,399.5 L1292.2,399.7 L1293.9,399.1 L1295.5,399.7 L1297.2,400.0 L1298.9,400.0 L1300.5,399.8 L1302.2,400.3 L1303.8,400.1 L1305.6,401.6 L1307.4,402.2 L1309.2,402.5 L1311.5,403.0 L1313.8,404.2 L1315.8,403.2" fill="none" stroke="#d06060" stroke-width="0.8"/>
<line x1="1250.4" y1="387.4" x2="1314.8000000000002" y2="387.4" stroke="#7a86d8" stroke-width="0.9" stroke-dasharray="1.2 1.6"/>
<rect x="1252.4" y="407.3" width="3.4" height="1.2" fill="#a8a8a8"/>
<rect x="1308.8" y="407.3" width="3.4" height="1.2" fill="#a8a8a8"/>
<rect x="1318" y="375.1" width="289" height="1" fill="#deded8"/>
<text x="1408.3" y="398.9" font-size="20.5" fill="#737373" font-weight="bold" text-anchor="end" >14.67</text>
<text x="1474.0" y="397.7" font-size="14.8" fill="#cc3c3c" text-anchor="end" >-0.13</text>
<rect x="1485.2" y="378.90999999999997" width="61.5" height="24.4" fill="#efd6d6"/>
<path d="M1489.3,388.2h9.5l-4.7,8.8z" fill="#cc3c3c"/>
<text x="1500.4" y="397.5" font-size="17.5" fill="#cc3c3c" font-weight="bold" >0.88</text>
<text x="1535.4" y="397.5" font-size="8.1" fill="#cc3c3c" font-weight="bold" >%</text>
<text x="1601.6" y="386.9" font-size="9.6" fill="#8c8c8c" text-anchor="end" >H:14.78</text>
<text x="1601.6" y="400.5" font-size="9.6" fill="#8c8c8c" text-anchor="end" >L:14.66</text>
<rect x="1119.0" y="411.18" width="107.0" height="34.17" fill="#444"/>
<rect x="1226" y="411.18" width="23" height="34.17" fill="#444"/>
<text x="1123.6" y="426.68" font-size="12.5" fill="#1a1a1a" font-weight="bold">ドル建て日経平均</text>
<text x="1122.6" y="425.68" font-size="12.5" fill="#fbf4f2" font-weight="bold">ドル建て日経平均</text>
<rect x="1163" y="428.08" width="61.700000000000045" height="14.200000000000045" fill="url(#gsub)"/>
<rect x="1163" y="428.08" width="61.700000000000045" height="1" fill="#7e7e7e"/>
<path d="M1167,431.68l3.2,3.4l-3.2,3.4z" fill="#a8a8a8"/>
<text x="1175.3" y="439.68" font-size="8.8" fill="#333" font-weight="bold">日経ドル</text>
<text x="1174.5" y="438.88" font-size="8.8" fill="#f4f4f4" font-weight="bold">日経ドル</text>
<circle cx="1237.4" cy="421.28000000000003" r="10.4" fill="#8c8c8c"/><circle cx="1237.4" cy="421.28000000000003" r="10.4" fill="none" stroke="#7a7a7a" stroke-width="0.8"/><circle cx="1237.4" cy="421.28000000000003" r="5.4" fill="#8a4238"/>
<text x="1237.5" y="441.5" font-size="9" fill="#d2d2d2" text-anchor="middle" textLength="19.6" lengthAdjust="spacingAndGlyphs" >01/08</text>
<rect x="1249.4" y="411.48" width="66.4" height="33.57" fill="#e9e9ee"/>
<rect x="1249.4" y="420.5" width="66.4" height="21.5" fill="#f4d6d6" opacity="0.55"/>
<path d="M1249.4,428.4 L1251.2,429.8 L1252.9,431.2 L1254.7,432.7 L1256.7,432.2 L1258.7,432.0 L1260.7,430.8 L1262.7,430.9 L1264.3,431.6 L1266.0,431.4 L1267.7,431.9 L1269.3,431.2 L1271.1,431.0 L1272.9,430.2 L1274.6,430.0 L1275.3,421.6 L1277.2,421.1 L1279.0,421.3 L1280.9,421.3 L1282.7,422.0 L1284.6,421.8 L1285.3,434.6 L1287.1,435.7 L1288.9,435.5 L1290.7,436.4 L1292.6,436.3 L1294.2,436.1 L1295.9,436.9 L1297.5,436.2 L1299.2,436.1 L1300.9,436.9 L1302.5,436.7 L1304.2,436.4 L1305.8,437.5 L1307.5,437.4 L1309.2,437.8 L1311.5,437.7 L1313.8,438.8 L1315.8,441.7 L1315.8,420.5 L1249.4,420.5z" fill="#f0a0a0" opacity="0.8"/>
<path d="M1249.4,428.4 L1251.2,429.8 L1252.9,431.2 L1254.7,432.7 L1256.7,432.2 L1258.7,432.0 L1260.7,430.8 L1262.7,430.9 L1264.3,431.6 L1266.0,431.4 L1267.7,431.9 L1269.3,431.2 L1271.1,431.0 L1272.9,430.2 L1274.6,430.0 L1275.3,421.6 L1277.2,421.1 L1279.0,421.3 L1280.9,421.3 L1282.7,422.0 L1284.6,421.8 L1285.3,434.6 L1287.1,435.7 L1288.9,435.5 L1290.7,436.4 L1292.6,436.3 L1294.2,436.1 L1295.9,436.9 L1297.5,436.2 L1299.2,436.1 L1300.9,436.9 L1302.5,436.7 L1304.2,436.4 L1305.8,437.5 L1307.5,437.4 L1309.2,437.8 L1311.5,437.7 L1313.8,438.8 L1315.8,441.7" fill="none" stroke="#d06060" stroke-width="0.8"/>
<line x1="1250.4" y1="420.5" x2="1314.8000000000002" y2="420.5" stroke="#7a86d8" stroke-width="0.9" stroke-dasharray="1.2 1.6"/>
<rect x="1252.4" y="442.4" width="3.4" height="1.2" fill="#a8a8a8"/>
<rect x="1308.8" y="442.4" width="3.4" height="1.2" fill="#a8a8a8"/>
<rect x="1318" y="410.3" width="289" height="1" fill="#deded8"/>
<text x="1408.3" y="434.1" font-size="20.5" fill="#737373" font-weight="bold" text-anchor="end" >326.50</text>
<text x="1474.0" y="432.9" font-size="14.8" fill="#cc3c3c" text-anchor="end" >-5.11</text>
<rect x="1485.2" y="414.08" width="61.5" height="24.4" fill="#efd6d6"/>
<path d="M1489.3,423.3h9.5l-4.7,8.8z" fill="#cc3c3c"/>
<text x="1500.4" y="432.7" font-size="17.5" fill="#cc3c3c" font-weight="bold" >1.54</text>
<text x="1535.4" y="432.7" font-size="8.1" fill="#cc3c3c" font-weight="bold" >%</text>
<text x="1601.6" y="422.1" font-size="9.6" fill="#8c8c8c" text-anchor="end" >H:330.74</text>
<text x="1601.6" y="435.7" font-size="9.6" fill="#8c8c8c" text-anchor="end" >L:326.16</text>
<rect x="1119.0" y="446.35" width="107.0" height="34.17" fill="#444"/>
<rect x="1226" y="446.35" width="23" height="34.17" fill="#444"/>
<text x="1123.6" y="461.85" font-size="13.2" fill="#1a1a1a" font-weight="bold">東証</text>
<text x="1150.0" y="461.9" font-size="13.463999999999999" fill="#1a1a1a" font-weight="bold" >REIT</text>
<text x="1122.6" y="460.85" font-size="13.2" fill="#fbf4f2" font-weight="bold">東証</text>
<text x="1149.0" y="460.9" font-size="13.463999999999999" fill="#fbf4f2" font-weight="bold" >REIT</text>
<circle cx="1237.4" cy="456.45000000000005" r="10.4" fill="#8c8c8c"/><circle cx="1237.4" cy="456.45000000000005" r="10.4" fill="none" stroke="#7a7a7a" stroke-width="0.8"/><circle cx="1237.4" cy="456.45000000000005" r="5.4" fill="#8a4238"/>
<text x="1237.5" y="476.7" font-size="9" fill="#d2d2d2" text-anchor="middle" textLength="19.6" lengthAdjust="spacingAndGlyphs" >01/08</text>
<rect x="1249.4" y="446.65000000000003" width="66.4" height="33.57" fill="#e9e9ee"/>
<rect x="1249.4" y="465.1" width="66.4" height="12.1" fill="#f4d6d6" opacity="0.55"/>
<path d="M1249.4,465.1 L1251.4,467.5 L1253.4,471.8 L1255.4,467.5 L1255.4,465.1 L1249.4,465.1z" fill="#f0a0a0" opacity="0.6"/>
<path d="M1249.4,465.1 L1251.4,467.5 L1253.4,471.8 L1255.4,467.5" fill="none" stroke="#d04040" stroke-width="0.8"/>
<line x1="1250.4" y1="465.1" x2="1314.8000000000002" y2="465.1" stroke="#7a86d8" stroke-width="0.9" stroke-dasharray="1.2 1.6"/>
<rect x="1252.4" y="477.6" width="3.4" height="1.2" fill="#a8a8a8"/>
<rect x="1280.6" y="477.6" width="3.4" height="1.2" fill="#a8a8a8"/>
<rect x="1308.8" y="477.6" width="3.4" height="1.2" fill="#a8a8a8"/>
<rect x="1318" y="445.5" width="289" height="1" fill="#deded8"/>
<text x="1408.3" y="469.2" font-size="13.5" fill="#737373" font-weight="bold" text-anchor="end" >.37</text>
<text x="1389.2" y="469.2" font-size="20.5" fill="#737373" font-weight="bold" text-anchor="end" >2,039</text>
<text x="1474.0" y="468.1" font-size="11.5" fill="#3a8a3a" text-anchor="end" >.80</text>
<text x="1457.7" y="468.1" font-size="14.6" fill="#3a8a3a" font-weight="bold" text-anchor="end" >+1</text>
<rect x="1485.2" y="449.25" width="61.5" height="24.4" fill="#e8eee4"/>
<path d="M1489.3,467.6h9.5l-4.7,-8.8z" fill="#3a8a3a"/>
<text x="1500.4" y="467.9" font-size="17.5" fill="#3a8a3a" font-weight="bold" >0.09</text>
<text x="1535.4" y="467.9" font-size="8.1" fill="#3a8a3a" font-weight="bold" >%</text>
<text x="1601.6" y="457.2" font-size="6.6" fill="#8c8c8c" text-anchor="end" >.76</text>
<text x="1592.2" y="457.2" font-size="9.6" fill="#8c8c8c" text-anchor="end" >H:2,042</text>
<text x="1601.6" y="470.9" font-size="6.6" fill="#8c8c8c" text-anchor="end" >.95</text>
<text x="1592.2" y="470.9" font-size="9.6" fill="#8c8c8c" text-anchor="end" >L:2,028</text>
<rect x="337.0" y="801.9000000000001" width="198.0" height="247.49999999999997" fill="#2c2c2c"/>
<rect x="535" y="801.9000000000001" width="241.2" height="247.49999999999997" fill="#f6f6f2"/>
<rect x="337.0" y="802.70" width="130.0" height="34.30" fill="#444"/>
<text x="341.6" y="819.6" font-size="12.9" fill="#1a1a1a" font-weight="bold">日経平均株価</text>
<text x="340.6" y="818.6" font-size="12.9" fill="#fbf4f2" font-weight="bold">日経平均株価</text>
<circle cx="434.4" cy="813.4000000000001" r="7.7" fill="#4db4f0"/>
<path d="M431.0,809.4000000000001l6.8,8M437.79999999999995,809.4000000000001l-6.8,8" stroke="#fff" stroke-width="1.1" fill="none"/><path d="M431.0,809.4000000000001h1.6l6.8,8h-1.6z" fill="none" stroke="#fff" stroke-width="0.7"/>
<rect x="381" y="821.4000000000001" width="61.69999999999999" height="13.099999999999909" fill="url(#gsub)"/>
<rect x="381" y="821.4000000000001" width="61.69999999999999" height="1" fill="#7e7e7e"/>
<path d="M385,825.0000000000001l3.2,3.4l-3.2,3.4z" fill="#a8a8a8"/>
<text x="393.3" y="831.9" font-size="8.8" fill="#333" font-weight="bold">寄与度</text>
<text x="392.5" y="831.1" font-size="8.8" fill="#f4f4f4" font-weight="bold">寄与度</text>
<circle cx="455.4" cy="813.8000000000001" r="10.4" fill="#8c8c8c"/><circle cx="455.4" cy="813.8000000000001" r="10.4" fill="none" stroke="#7a7a7a" stroke-width="0.8"/><circle cx="455.4" cy="813.8000000000001" r="5.4" fill="#8a4238"/>
<text x="455.5" y="833.8" font-size="9" fill="#d2d2d2" text-anchor="middle" textLength="19.6" lengthAdjust="spacingAndGlyphs" >01/08</text>
<rect x="467.4" y="803.0" width="66.6" height="33.699999999999996" fill="#e9e9ee"/>
<rect x="467.4" y="805.0" width="66.6" height="28.7" fill="#f4d6d6" opacity="0.55"/>
<path d="M467.4,811.8 L469.1,814.5 L470.7,817.4 L472.4,817.2 L474.1,816.2 L475.8,816.4 L477.6,816.4 L479.4,816.2 L481.1,815.5 L482.7,814.8 L484.4,814.7 L486.0,815.0 L487.7,812.4 L489.4,810.9 L491.0,812.9 L492.7,813.7 L494.7,813.6 L496.7,813.8 L498.7,814.4 L500.7,814.0 L502.7,804.9 L503.4,821.7 L505.4,823.0 L507.4,823.9 L509.0,823.6 L510.7,824.3 L512.4,823.9 L514.0,824.2 L515.7,824.4 L517.3,825.1 L519.0,824.9 L520.7,825.4 L522.7,825.2 L524.7,825.5 L525.3,805.0 L525.3,805.0 L467.4,805.0z" fill="#f0a0a0" opacity="0.85"/>
<path d="M467.4,811.8 L469.1,814.5 L470.7,817.4 L472.4,817.2 L474.1,816.2 L475.8,816.4 L477.6,816.4 L479.4,816.2 L481.1,815.5 L482.7,814.8 L484.4,814.7 L486.0,815.0 L487.7,812.4 L489.4,810.9 L491.0,812.9 L492.7,813.7 L494.7,813.6 L496.7,813.8 L498.7,814.4 L500.7,814.0 L502.7,804.9 L503.4,821.7 L505.4,823.0 L507.4,823.9 L509.0,823.6 L510.7,824.3 L512.4,823.9 L514.0,824.2 L515.7,824.4 L517.3,825.1 L519.0,824.9 L520.7,825.4 L522.7,825.2 L524.7,825.5 L525.3,805.0" fill="none" stroke="#d06060" stroke-width="0.8"/>
<line x1="468.4" y1="805.0" x2="533.0" y2="805.0" stroke="#7a86d8" stroke-width="0.9" stroke-dasharray="1.2 1.6"/>
<rect x="470.4" y="834.1" width="3.4" height="1.2" fill="#a8a8a8"/>
<rect x="498.7" y="834.1" width="3.4" height="1.2" fill="#a8a8a8"/>
<rect x="527.0" y="834.1" width="3.4" height="1.2" fill="#a8a8a8"/>
<text x="626.6" y="826.6" font-size="13.5" fill="#6e6e6e" font-weight="bold" text-anchor="end" >.26</text>
<text x="607.4" y="826.6" font-size="20.5" fill="#6e6e6e" font-weight="bold" text-anchor="end" >51,117</text>
<text x="692.9" y="825.4" font-size="11.5" fill="#cc3c3c" text-anchor="end" >.72</text>
<text x="676.6" y="825.4" font-size="15.4" fill="#cc3c3c" font-weight="bold" text-anchor="end" >-844</text>
<rect x="702.6" y="806.5" width="62.6" height="24.6" rx="2.6" fill="#f0dcdc" stroke="#dcdcd6" stroke-width="1"/>
<path d="M707.3,815.9h9.5l-4.7,8.8z" fill="#cc3c3c"/>
<text x="718.3" y="825.2" font-size="17.5" fill="#cc3c3c" font-weight="bold" >1.63</text>
<text x="753.4" y="825.2" font-size="8.1" fill="#cc3c3c" font-weight="bold" >%</text>
<rect x="337.0" y="838.00" width="130.0" height="34.30" fill="#444"/>
<text x="341.6" y="851.5" font-size="13.158000000000001" fill="#1a1a1a" font-weight="bold" >TOPIX</text>
<text x="340.6" y="850.5" font-size="13.158000000000001" fill="#fbf4f2" font-weight="bold" >TOPIX</text>
<rect x="410" y="855.7" width="31" height="13.6" fill="url(#gsub)"/><rect x="410" y="855.7" width="31" height="1" fill="#7e7e7e"/>
<rect x="415.6" y="859.9000000000001" width="6.6" height="5.6" fill="#f0f0f0"/><path d="M417.2,864.1l3.2,-2.8m-2.2,-0.2h2.4v2.2" stroke="#555" stroke-width="0.9" fill="none"/>
<text x="426.6" y="866.7" font-size="10.5" fill="#c8c8c8" font-weight="bold" >Y!</text>
<circle cx="455.4" cy="849.1" r="10.4" fill="#8c8c8c"/><circle cx="455.4" cy="849.1" r="10.4" fill="none" stroke="#7a7a7a" stroke-width="0.8"/><circle cx="455.4" cy="849.1" r="5.4" fill="#8a4238"/>
<text x="455.5" y="869.1" font-size="9" fill="#d2d2d2" text-anchor="middle" textLength="19.6" lengthAdjust="spacingAndGlyphs" >01/08</text>
<rect x="467.4" y="838.3" width="66.6" height="33.699999999999996" fill="#e9e9ee"/>
<rect x="467.4" y="847.4" width="66.6" height="21.6" fill="#f4d6d6" opacity="0.55"/>
<path d="M467.4,848.0 L469.1,852.9 L470.7,857.0 L473.1,856.0 L475.4,854.8 L477.2,855.1 L478.9,854.6 L480.7,853.8 L482.4,853.1 L484.0,852.1 L485.7,851.2 L487.4,851.0 L489.4,849.9 L491.4,847.9 L494.0,850.8 L495.7,849.9 L497.4,849.8 L499.0,849.4 L500.7,850.4 L502.7,847.7 L503.4,855.6 L505.4,856.3 L507.4,856.6 L509.0,856.9 L510.7,857.0 L512.4,856.5 L514.0,857.4 L515.7,856.7 L517.3,856.4 L519.0,857.2 L520.7,856.4 L522.3,857.1 L524.0,856.3 L525.7,856.1 L527.3,855.6 L529.0,858.8 L530.7,861.5 L532.3,863.4 L534.0,865.9 L534.0,847.4 L467.4,847.4z" fill="#f0a0a0" opacity="0.8"/>
<path d="M467.4,848.0 L469.1,852.9 L470.7,857.0 L473.1,856.0 L475.4,854.8 L477.2,855.1 L478.9,854.6 L480.7,853.8 L482.4,853.1 L484.0,852.1 L485.7,851.2 L487.4,851.0 L489.4,849.9 L491.4,847.9 L494.0,850.8 L495.7,849.9 L497.4,849.8 L499.0,849.4 L500.7,850.4 L502.7,847.7 L503.4,855.6 L505.4,856.3 L507.4,856.6 L509.0,856.9 L510.7,857.0 L512.4,856.5 L514.0,857.4 L515.7,856.7 L517.3,856.4 L519.0,857.2 L520.7,856.4 L522.3,857.1 L524.0,856.3 L525.7,856.1 L527.3,855.6 L529.0,858.8 L530.7,861.5 L532.3,863.4 L534.0,865.9" fill="none" stroke="#d06060" stroke-width="0.8"/>
<line x1="468.4" y1="847.4" x2="533.0" y2="847.4" stroke="#7a86d8" stroke-width="0.9" stroke-dasharray="1.2 1.6"/>
<rect x="470.4" y="869.4" width="3.4" height="1.2" fill="#a8a8a8"/>
<rect x="498.7" y="869.4" width="3.4" height="1.2" fill="#a8a8a8"/>
<rect x="527.0" y="869.4" width="3.4" height="1.2" fill="#a8a8a8"/>
<rect x="536" y="837.1" width="239.5" height="1" fill="#deded8"/>
<text x="626.6" y="861.9" font-size="13.5" fill="#6e6e6e" font-weight="bold" text-anchor="end" >.34</text>
<text x="607.4" y="861.9" font-size="20.5" fill="#6e6e6e" font-weight="bold" text-anchor="end" >3,484</text>
<text x="692.9" y="860.7" font-size="11.5" fill="#cc3c3c" text-anchor="end" >.00</text>
<text x="676.6" y="860.7" font-size="15.4" fill="#cc3c3c" font-weight="bold" text-anchor="end" >-27</text>
<rect x="702.6" y="841.8" width="62.6" height="24.6" rx="2.6" fill="#f0dcdc" stroke="#dcdcd6" stroke-width="1"/>
<path d="M707.3,851.1h9.5l-4.7,8.8z" fill="#cc3c3c"/>
<text x="718.3" y="860.5" font-size="17.5" fill="#cc3c3c" font-weight="bold" >0.77</text>
<text x="753.4" y="860.5" font-size="8.1" fill="#cc3c3c" font-weight="bold" >%</text>
<rect x="337.0" y="873.30" width="130.0" height="34.30" fill="#444"/>
<text x="341.6" y="890.0" font-size="13.158000000000001" fill="#1a1a1a" font-weight="bold" >JPX</text>
<text x="366.47" y="890" font-size="12.9" fill="#1a1a1a" font-weight="bold">日経</text>
<text x="392.3" y="890.0" font-size="13.158000000000001" fill="#1a1a1a" font-weight="bold" >400</text>
<text x="340.6" y="889.0" font-size="13.158000000000001" fill="#fbf4f2" font-weight="bold" >JPX</text>
<text x="365.47" y="889" font-size="12.9" fill="#fbf4f2" font-weight="bold">日経</text>
<text x="391.3" y="889.0" font-size="13.158000000000001" fill="#fbf4f2" font-weight="bold" >400</text>
<circle cx="455.4" cy="884.4000000000001" r="10.4" fill="#8c8c8c"/><circle cx="455.4" cy="884.4000000000001" r="10.4" fill="none" stroke="#7a7a7a" stroke-width="0.8"/><circle cx="455.4" cy="884.4000000000001" r="5.4" fill="#8a4238"/>
<text x="455.5" y="904.4" font-size="9" fill="#d2d2d2" text-anchor="middle" textLength="19.6" lengthAdjust="spacingAndGlyphs" >01/08</text>
<rect x="467.4" y="873.6" width="66.6" height="33.699999999999996" fill="#e9e9ee"/>
<rect x="467.4" y="881.7" width="66.6" height="22.6" fill="#f4d6d6" opacity="0.55"/>
<path d="M467.4,882.0 L469.4,886.9 L471.4,886.1 L472.7,890.7 L474.1,888.4 L474.1,881.7 L467.4,881.7z" fill="#f0a0a0" opacity="0.6"/>
<path d="M467.4,882.0 L469.4,886.9 L471.4,886.1 L472.7,890.7 L474.1,888.4" fill="none" stroke="#d06060" stroke-width="0.8"/>
<line x1="468.4" y1="881.7" x2="533.0" y2="881.7" stroke="#7a86d8" stroke-width="0.9" stroke-dasharray="1.2 1.6"/>
<rect x="470.4" y="904.7" width="3.4" height="1.2" fill="#a8a8a8"/>
<rect x="498.7" y="904.7" width="3.4" height="1.2" fill="#a8a8a8"/>
<rect x="527.0" y="904.7" width="3.4" height="1.2" fill="#a8a8a8"/>
<rect x="536" y="872.4" width="239.5" height="1" fill="#deded8"/>
<text x="626.6" y="897.2" font-size="13.5" fill="#6e6e6e" font-weight="bold" text-anchor="end" >.64</text>
<text x="607.4" y="897.2" font-size="20.5" fill="#6e6e6e" font-weight="bold" text-anchor="end" >31,394</text>
<text x="692.9" y="896.0" font-size="11.5" fill="#cc3c3c" text-anchor="end" >.77</text>
<text x="676.6" y="896.0" font-size="15.4" fill="#cc3c3c" font-weight="bold" text-anchor="end" >-243</text>
<rect x="702.6" y="877.1" width="62.6" height="24.6" rx="2.6" fill="#f0dcdc" stroke="#dcdcd6" stroke-width="1"/>
<path d="M707.3,886.5h9.5l-4.7,8.8z" fill="#cc3c3c"/>
<text x="718.3" y="895.8" font-size="17.5" fill="#cc3c3c" font-weight="bold" >0.77</text>
<text x="753.4" y="895.8" font-size="8.1" fill="#cc3c3c" font-weight="bold" >%</text>
<rect x="337.0" y="908.60" width="130.0" height="34.30" fill="#444"/>
<text x="341.6" y="925.5" font-size="12.9" fill="#1a1a1a" font-weight="bold">グロース</text>
<text x="393.2" y="925.5" font-size="13.158000000000001" fill="#1a1a1a" font-weight="bold" >250</text>
<text x="340.6" y="924.5" font-size="12.9" fill="#fbf4f2" font-weight="bold">グロース</text>
<text x="392.2" y="924.5" font-size="13.158000000000001" fill="#fbf4f2" font-weight="bold" >250</text>
<rect x="410" y="926.3000000000001" width="31" height="13.6" fill="url(#gsub)"/><rect x="410" y="926.3000000000001" width="31" height="1" fill="#7e7e7e"/>
<rect x="415.6" y="930.5000000000001" width="6.6" height="5.6" fill="#f0f0f0"/><path d="M417.2,934.7l3.2,-2.8m-2.2,-0.2h2.4v2.2" stroke="#555" stroke-width="0.9" fill="none"/>
<text x="426.6" y="937.3" font-size="10.5" fill="#c8c8c8" font-weight="bold" >Y!</text>
<circle cx="455.4" cy="919.7" r="10.4" fill="#8c8c8c"/><circle cx="455.4" cy="919.7" r="10.4" fill="none" stroke="#7a7a7a" stroke-width="0.8"/><circle cx="455.4" cy="919.7" r="5.4" fill="#8a4238"/>
<text x="455.5" y="939.7" font-size="9" fill="#d2d2d2" text-anchor="middle" textLength="19.6" lengthAdjust="spacingAndGlyphs" >01/08</text>
<rect x="467.4" y="908.9" width="66.6" height="33.699999999999996" fill="#e9e9ee"/>
<path d="M467.4,926.3 L469.4,923.7 L471.4,929.7 L474.1,926.9 L475.7,929.8 L477.4,931.7 L479.1,932.2 L480.7,932.0 L482.5,931.2 L484.3,930.6 L486.0,929.4 L487.8,928.4 L489.6,926.4 L491.4,925.2 L494.0,928.1 L495.7,927.2 L497.4,926.8 L499.0,926.6 L500.7,925.6 L502.7,924.5 L504.7,924.8 L506.4,923.9 L508.0,923.3 L509.7,922.5 L511.4,922.4 L513.0,921.2 L514.7,921.4 L516.4,920.5 L518.0,920.5 L519.7,920.2 L521.3,919.4 L523.0,918.8 L524.7,919.0 L526.7,919.5 L528.7,919.6 L530.7,919.6 L532.3,921.2 L534.0,922.4 L534.0,940.2 L467.4,940.2z" fill="#8ccc84" opacity="0.85"/>
<path d="M467.4,926.3 L469.4,923.7 L471.4,929.7 L474.1,926.9 L475.7,929.8 L477.4,931.7 L479.1,932.2 L480.7,932.0 L482.5,931.2 L484.3,930.6 L486.0,929.4 L487.8,928.4 L489.6,926.4 L491.4,925.2 L494.0,928.1 L495.7,927.2 L497.4,926.8 L499.0,926.6 L500.7,925.6 L502.7,924.5 L504.7,924.8 L506.4,923.9 L508.0,923.3 L509.7,922.5 L511.4,922.4 L513.0,921.2 L514.7,921.4 L516.4,920.5 L518.0,920.5 L519.7,920.2 L521.3,919.4 L523.0,918.8 L524.7,919.0 L526.7,919.5 L528.7,919.6 L530.7,919.6 L532.3,921.2 L534.0,922.4" fill="none" stroke="#58a858" stroke-width="0.8"/>
<line x1="468.4" y1="940.2" x2="533.0" y2="940.2" stroke="#7a86d8" stroke-width="0.9" stroke-dasharray="1.2 1.6"/>
<rect x="470.4" y="940.0" width="3.4" height="1.2" fill="#a8a8a8"/>
<rect x="498.7" y="940.0" width="3.4" height="1.2" fill="#a8a8a8"/>
<rect x="527.0" y="940.0" width="3.4" height="1.2" fill="#a8a8a8"/>
<rect x="536" y="907.7" width="239.5" height="1" fill="#deded8"/>
<text x="626.6" y="932.5" font-size="13.5" fill="#6e6e6e" font-weight="bold" text-anchor="end" >.11</text>
<text x="607.4" y="932.5" font-size="20.5" fill="#6e6e6e" font-weight="bold" text-anchor="end" >702</text>
<text x="692.9" y="931.3" font-size="11.5" fill="#3a8a3a" text-anchor="end" >.85</text>
<text x="676.6" y="931.3" font-size="15.4" fill="#3a8a3a" font-weight="bold" text-anchor="end" >+9</text>
<rect x="702.6" y="912.4" width="62.6" height="24.6" rx="2.6" fill="#e0ecdc" stroke="#dcdcd6" stroke-width="1"/>
<path d="M707.3,930.8h9.5l-4.7,-8.8z" fill="#3a8a3a"/>
<text x="718.3" y="931.1" font-size="17.5" fill="#3a8a3a" font-weight="bold" >1.42</text>
<text x="753.4" y="931.1" font-size="8.1" fill="#3a8a3a" font-weight="bold" >%</text>
<rect x="337.0" y="943.90" width="130.0" height="34.30" fill="#444"/>
<text x="341.6" y="960.8" font-size="12.9" fill="#1a1a1a" font-weight="bold">為替</text>
<text x="372.4" y="960.8" font-size="12.9" fill="#1a1a1a" font-weight="bold">ドル円</text>
<text x="340.6" y="959.8" font-size="12.9" fill="#fbf4f2" font-weight="bold">為替</text>
<text x="371.4" y="959.8" font-size="12.9" fill="#fbf4f2" font-weight="bold">ドル円</text>
<rect x="381" y="962.6000000000001" width="61.69999999999999" height="13.099999999999909" fill="url(#gsub)"/>
<rect x="381" y="962.6000000000001" width="61.69999999999999" height="1" fill="#7e7e7e"/>
<path d="M385,966.2000000000002l3.2,3.4l-3.2,3.4z" fill="#a8a8a8"/>
<text x="393.3" y="973.1" font-size="8.8" fill="#333" font-weight="bold">為替</text>
<text x="392.5" y="972.3" font-size="8.8" fill="#f4f4f4" font-weight="bold">為替</text>
<clipPath id="c455955"><circle cx="455.4" cy="955.0000000000001" r="10.4"/></clipPath>
<g clip-path="url(#c455955)"><rect x="444.4" y="944.0000000000001" width="22" height="22" fill="#fff"/>
<circle cx="458.59999999999997" cy="955.0000000000001" r="5.6" fill="#cc4432"/>
<rect x="444.4" y="944.0000000000001" width="11.6" height="22" fill="#fff"/>
<rect x="444.4" y="945.2" width="11.6" height="1.8" fill="#d85048"/>
<rect x="444.4" y="948.9" width="11.6" height="1.8" fill="#d85048"/>
<rect x="444.4" y="952.6" width="11.6" height="1.8" fill="#d85048"/>
<rect x="444.4" y="956.3" width="11.6" height="1.8" fill="#d85048"/>
<rect x="444.4" y="960.0" width="11.6" height="1.8" fill="#d85048"/>
<rect x="444.4" y="963.7" width="11.6" height="1.8" fill="#d85048"/>
<rect x="444.4" y="944.0000000000001" width="11.6" height="10.6" fill="#4a6ab8"/>
<circle cx="446.8" cy="946.8" r="0.6" fill="#dfe6f6"/>
<circle cx="446.8" cy="949.8" r="0.6" fill="#dfe6f6"/>
<circle cx="446.8" cy="952.8" r="0.6" fill="#dfe6f6"/>
<circle cx="450.0" cy="946.8" r="0.6" fill="#dfe6f6"/>
<circle cx="450.0" cy="949.8" r="0.6" fill="#dfe6f6"/>
<circle cx="450.0" cy="952.8" r="0.6" fill="#dfe6f6"/>
<circle cx="453.2" cy="946.8" r="0.6" fill="#dfe6f6"/>
<circle cx="453.2" cy="949.8" r="0.6" fill="#dfe6f6"/>
<circle cx="453.2" cy="952.8" r="0.6" fill="#dfe6f6"/>
</g>
<rect x="445" y="966.8" width="21" height="9.6" fill="#ecd45e"/>
<text x="455.5" y="974.9" font-size="9.2" fill="#3a3a30" text-anchor="middle" textLength="19" lengthAdjust="spacingAndGlyphs" >15:51</text>
<rect x="467.4" y="944.2" width="66.6" height="33.699999999999996" fill="#fff"/>
<path d="M467.4,962.6 L469.1,961.7 L470.7,960.1 L472.4,961.0 L474.1,960.4 L475.7,961.1 L477.4,960.6 L479.1,961.1 L480.7,960.4 L482.4,960.8 L484.0,960.6 L485.7,961.3 L487.4,961.7 L489.2,961.0 L490.9,960.0 L492.7,958.0 L495.0,959.0 L497.4,960.2 L499.0,959.4 L500.7,958.6 L502.4,958.0 L504.0,958.1 L505.7,957.3 L507.4,957.9 L509.0,958.0 L510.7,957.3 L512.4,957.3 L514.0,957.1 L515.7,957.2 L517.4,956.9 L519.7,956.7 L522.0,956.1 L524.0,956.8 L526.0,958.7 L528.3,957.9 L530.7,958.0 L532.3,959.2 L534.0,959.7 L534.0,963.1 L467.4,963.1z" fill="#c6ecc0" opacity="0.85"/>
<path d="M467.4,962.6 L469.1,961.7 L470.7,960.1 L472.4,961.0 L474.1,960.4 L475.7,961.1 L477.4,960.6 L479.1,961.1 L480.7,960.4 L482.4,960.8 L484.0,960.6 L485.7,961.3 L487.4,961.7 L489.2,961.0 L490.9,960.0 L492.7,958.0 L495.0,959.0 L497.4,960.2 L499.0,959.4 L500.7,958.6 L502.4,958.0 L504.0,958.1 L505.7,957.3 L507.4,957.9 L509.0,958.0 L510.7,957.3 L512.4,957.3 L514.0,957.1 L515.7,957.2 L517.4,956.9 L519.7,956.7 L522.0,956.1 L524.0,956.8 L526.0,958.7 L528.3,957.9 L530.7,958.0 L532.3,959.2 L534.0,959.7" fill="none" stroke="#58a858" stroke-width="0.8"/>
<rect x="470.4" y="975.3" width="3.4" height="1.2" fill="#a8a8a8"/>
<rect x="478.5" y="975.3" width="3.4" height="1.2" fill="#a8a8a8"/>
<rect x="486.6" y="975.3" width="3.4" height="1.2" fill="#d8a090"/>
<rect x="494.7" y="975.3" width="3.4" height="1.2" fill="#a8a8a8"/>
<rect x="502.7" y="975.3" width="3.4" height="1.2" fill="#a8a8a8"/>
<rect x="510.8" y="975.3" width="3.4" height="1.2" fill="#a8a8a8"/>
<rect x="518.9" y="975.3" width="3.4" height="1.2" fill="#a8a8a8"/>
<rect x="527.0" y="975.3" width="3.4" height="1.2" fill="#a8a8a8"/>
<rect x="536" y="943.0" width="239.5" height="1" fill="#deded8"/>
<text x="626.6" y="967.8" font-size="14" fill="#111" font-weight="bold" text-anchor="end" >9</text>
<text x="618.4" y="967.8" font-size="20.5" fill="#111" font-weight="bold" text-anchor="end" >156.53</text>
<text x="692.9" y="966.6" font-size="12" fill="#cc3c3c" text-anchor="end" >2</text>
<text x="685.4" y="966.6" font-size="16.2" fill="#cc3c3c" text-anchor="end" >-0.20</text>
<rect x="702.6" y="947.7" width="62.6" height="24.6" rx="2.6" fill="#f0dcdc" stroke="#dcdcd6" stroke-width="1"/>
<path d="M707.3,957.1h9.5l-4.7,8.8z" fill="#cc3c3c"/>
<text x="718.3" y="966.4" font-size="17.5" fill="#cc3c3c" font-weight="bold" >0.13</text>
<text x="753.4" y="966.4" font-size="8.1" fill="#cc3c3c" font-weight="bold" >%</text>
<rect x="337.0" y="979.20" width="130.0" height="34.30" fill="#444"/>
<text x="341.6" y="996.1" font-size="12.9" fill="#1a1a1a" font-weight="bold">為替</text>
<text x="372.4" y="996.1" font-size="12.9" fill="#1a1a1a" font-weight="bold">ユーロ円</text>
<text x="340.6" y="995.1" font-size="12.9" fill="#fbf4f2" font-weight="bold">為替</text>
<text x="371.4" y="995.1" font-size="12.9" fill="#fbf4f2" font-weight="bold">ユーロ円</text>
<rect x="381" y="997.9000000000001" width="61.69999999999999" height="13.099999999999909" fill="url(#gsub)"/>
<rect x="381" y="997.9000000000001" width="61.69999999999999" height="1" fill="#7e7e7e"/>
<path d="M385,1001.5000000000001l3.2,3.4l-3.2,3.4z" fill="#a8a8a8"/>
<text x="393.3" y="1008.4" font-size="8.8" fill="#333" font-weight="bold">為替</text>
<text x="392.5" y="1007.6" font-size="8.8" fill="#f4f4f4" font-weight="bold">為替</text>
<clipPath id="c455990"><circle cx="455.4" cy="990.3000000000001" r="10.4"/></clipPath>
<g clip-path="url(#c455990)"><rect x="444.4" y="979.3000000000001" width="22" height="22" fill="#fff"/>
<circle cx="458.59999999999997" cy="990.3000000000001" r="5.6" fill="#cc4432"/>
<rect x="444.4" y="979.3000000000001" width="11.6" height="22" fill="#fff"/>
<rect x="444.4" y="980.5" width="11.6" height="1.8" fill="#d85048"/>
<rect x="444.4" y="984.2" width="11.6" height="1.8" fill="#d85048"/>
<rect x="444.4" y="987.9" width="11.6" height="1.8" fill="#d85048"/>
<rect x="444.4" y="991.6" width="11.6" height="1.8" fill="#d85048"/>
<rect x="444.4" y="995.3" width="11.6" height="1.8" fill="#d85048"/>
<rect x="444.4" y="999.0" width="11.6" height="1.8" fill="#d85048"/>
<rect x="444.4" y="979.3000000000001" width="11.6" height="10.6" fill="#4a6ab8"/>
<circle cx="446.8" cy="982.1" r="0.6" fill="#dfe6f6"/>
<circle cx="446.8" cy="985.1" r="0.6" fill="#dfe6f6"/>
<circle cx="446.8" cy="988.1" r="0.6" fill="#dfe6f6"/>
<circle cx="450.0" cy="982.1" r="0.6" fill="#dfe6f6"/>
<circle cx="450.0" cy="985.1" r="0.6" fill="#dfe6f6"/>
<circle cx="450.0" cy="988.1" r="0.6" fill="#dfe6f6"/>
<circle cx="453.2" cy="982.1" r="0.6" fill="#dfe6f6"/>
<circle cx="453.2" cy="985.1" r="0.6" fill="#dfe6f6"/>
<circle cx="453.2" cy="988.1" r="0.6" fill="#dfe6f6"/>
</g>
<rect x="445" y="1002.1" width="21" height="9.6" fill="#ecd45e"/>
<text x="455.5" y="1010.2" font-size="9.2" fill="#3a3a30" text-anchor="middle" textLength="19" lengthAdjust="spacingAndGlyphs" >15:51</text>
<rect x="467.4" y="979.5" width="66.6" height="33.699999999999996" fill="#fff"/>
<path d="M467.4,989.5 L469.1,990.0 L470.7,989.9 L472.4,989.4 L474.1,989.9 L475.8,989.5 L477.6,988.8 L479.4,989.3 L481.1,988.4 L482.7,988.1 L484.4,987.9 L486.0,987.7 L488.4,988.0 L490.7,989.1 L492.4,988.5 L494.0,987.6 L495.7,987.1 L497.4,986.3 L499.0,986.5 L500.7,986.0 L502.4,986.1 L504.0,986.2 L505.7,985.9 L507.4,986.6 L509.0,986.5 L510.7,986.3 L512.4,986.8 L514.0,986.8 L515.7,986.5 L517.3,986.3 L519.0,986.4 L520.7,985.9 L523.0,985.6 L525.3,984.9 L527.3,985.6 L529.3,987.2 L531.7,986.5 L534.0,986.9 L534.0,988.6 L467.4,988.6z" fill="#e4f4e0" opacity="0.7"/>
<path d="M467.4,989.5 L469.1,990.0 L470.7,989.9 L472.4,989.4 L474.1,989.9 L475.8,989.5 L477.6,988.8 L479.4,989.3 L481.1,988.4 L482.7,988.1 L484.4,987.9 L486.0,987.7 L488.4,988.0 L490.7,989.1 L492.4,988.5 L494.0,987.6 L495.7,987.1 L497.4,986.3 L499.0,986.5 L500.7,986.0 L502.4,986.1 L504.0,986.2 L505.7,985.9 L507.4,986.6 L509.0,986.5 L510.7,986.3 L512.4,986.8 L514.0,986.8 L515.7,986.5 L517.3,986.3 L519.0,986.4 L520.7,985.9 L523.0,985.6 L525.3,984.9 L527.3,985.6 L529.3,987.2 L531.7,986.5 L534.0,986.9" fill="none" stroke="#58a858" stroke-width="0.8"/>
<rect x="470.4" y="1010.6" width="3.4" height="1.2" fill="#a8a8a8"/>
<rect x="478.5" y="1010.6" width="3.4" height="1.2" fill="#a8a8a8"/>
<rect x="486.6" y="1010.6" width="3.4" height="1.2" fill="#d8a090"/>
<rect x="494.7" y="1010.6" width="3.4" height="1.2" fill="#a8a8a8"/>
<rect x="502.7" y="1010.6" width="3.4" height="1.2" fill="#a8a8a8"/>
<rect x="510.8" y="1010.6" width="3.4" height="1.2" fill="#a8a8a8"/>
<rect x="518.9" y="1010.6" width="3.4" height="1.2" fill="#a8a8a8"/>
<rect x="527.0" y="1010.6" width="3.4" height="1.2" fill="#a8a8a8"/>
<rect x="536" y="978.3" width="239.5" height="1" fill="#deded8"/>
<text x="626.6" y="1003.1" font-size="14" fill="#111" font-weight="bold" text-anchor="end" >8</text>
<text x="618.4" y="1003.1" font-size="20.5" fill="#111" font-weight="bold" text-anchor="end" >182.86</text>
<text x="692.9" y="1001.9" font-size="12" fill="#cc3c3c" text-anchor="end" >1</text>
<text x="685.4" y="1001.9" font-size="16.2" fill="#cc3c3c" text-anchor="end" >-0.13</text>
<rect x="702.6" y="983.0" width="62.6" height="24.6" rx="2.6" fill="#f0dcdc" stroke="#dcdcd6" stroke-width="1"/>
<path d="M707.3,992.4h9.5l-4.7,8.8z" fill="#cc3c3c"/>
<text x="718.3" y="1001.7" font-size="17.5" fill="#cc3c3c" font-weight="bold" >0.07</text>
<text x="753.4" y="1001.7" font-size="8.1" fill="#cc3c3c" font-weight="bold" >%</text>
<rect x="337.0" y="1015.20" width="130.0" height="33.90" fill="#3c3c3c"/>
<rect x="340.4" y="1020.0" width="21.6" height="11.8" rx="1.8" fill="#fafafa"/>
<text x="351.2" y="1029.6" font-size="9.6" fill="#333" text-anchor="middle" textLength="18" lengthAdjust="spacingAndGlyphs" >CFD</text>
<text x="365.4" y="1031.2" font-size="11.8" fill="#1a1a1a" font-weight="bold">日経平均</text>
<text x="364.4" y="1030.2" font-size="11.8" fill="#fbf4f2" font-weight="bold">日経平均</text>
<circle cx="434.4" cy="1025.6" r="7.7" fill="#4db4f0"/>
<path d="M431.0,1021.5999999999999l6.8,8M437.79999999999995,1021.5999999999999l-6.8,8" stroke="#fff" stroke-width="1.1" fill="none"/><path d="M431.0,1021.5999999999999h1.6l6.8,8h-1.6z" fill="none" stroke="#fff" stroke-width="0.7"/>
<circle cx="455.4" cy="1025.8" r="10.4" fill="#fff"/><circle cx="455.4" cy="1025.8" r="5.6" fill="#cc4432"/>
<rect x="445" y="1038.0" width="21" height="9.6" fill="#ecd45e"/>
<text x="455.5" y="1046.1" font-size="9.2" fill="#3a3a30" text-anchor="middle" textLength="19" lengthAdjust="spacingAndGlyphs" >15:51</text>
<rect x="467.4" y="1015.4" width="66.6" height="33.5" fill="#fff"/>
<rect x="515.4" y="1015.4" width="17.6" height="18.4" fill="#f6e684"/>
<rect x="467.4" y="1015.4" width="66.6" height="33.5" fill="none"/>
<path d="M467.4,1032.9 L469.2,1033.4 L471.0,1034.1 L472.7,1033.9 L474.4,1033.7 L476.1,1033.3 L477.7,1032.6 L479.4,1031.1 L481.4,1032.2 L483.4,1032.6 L485.4,1033.0 L487.4,1034.0 L489.4,1033.2 L491.4,1032.8 L493.4,1033.0 L495.4,1032.3 L497.0,1031.7 L498.7,1031.6 L500.4,1031.6 L502.0,1030.9 L503.7,1031.9 L505.4,1032.4 L507.0,1032.4 L508.7,1033.2 L510.5,1033.8 L512.2,1033.8 L514.0,1034.4 L516.7,1038.4 L519.3,1037.0 L521.3,1040.4 L523.3,1041.9 L525.3,1042.9 L527.3,1044.7 L529.3,1045.5 L531.3,1045.8 L534.0,1047.6 L534.0,1047.9 L467.4,1047.9z" fill="#a4d89c" opacity="0.75"/>
<path d="M467.4,1032.9 L469.2,1033.4 L471.0,1034.1 L472.7,1033.9 L474.4,1033.7 L476.1,1033.3 L477.7,1032.6 L479.4,1031.1 L481.4,1032.2 L483.4,1032.6 L485.4,1033.0 L487.4,1034.0 L489.4,1033.2 L491.4,1032.8 L493.4,1033.0 L495.4,1032.3 L497.0,1031.7 L498.7,1031.6 L500.4,1031.6 L502.0,1030.9 L503.7,1031.9 L505.4,1032.4 L507.0,1032.4 L508.7,1033.2 L510.5,1033.8 L512.2,1033.8 L514.0,1034.4 L516.7,1038.4 L519.3,1037.0 L521.3,1040.4 L523.3,1041.9 L525.3,1042.9 L527.3,1044.7 L529.3,1045.5 L531.3,1045.8 L534.0,1047.6" fill="none" stroke="#4a9a4a" stroke-width="0.8"/>
<rect x="470.4" y="1046.3" width="3.4" height="1.2" fill="#a8a8a8"/>
<rect x="478.5" y="1046.3" width="3.4" height="1.2" fill="#a8a8a8"/>
<rect x="486.6" y="1046.3" width="3.4" height="1.2" fill="#d8a090"/>
<rect x="494.7" y="1046.3" width="3.4" height="1.2" fill="#a8a8a8"/>
<rect x="502.7" y="1046.3" width="3.4" height="1.2" fill="#a8a8a8"/>
<rect x="510.8" y="1046.3" width="3.4" height="1.2" fill="#a8a8a8"/>
<rect x="518.9" y="1046.3" width="3.4" height="1.2" fill="#a8a8a8"/>
<rect x="527.0" y="1046.3" width="3.4" height="1.2" fill="#a8a8a8"/>
<rect x="535" y="1014.2" width="241.2" height="35.3" fill="#e9e9e5"/>
<rect x="535" y="1013.4" width="241.2" height="1.4" fill="#c6c6c0"/>
<text x="620.8" y="1039.6" font-size="13.5" fill="#111" font-weight="bold" text-anchor="end" >.00</text>
<text x="601.6" y="1039.6" font-size="19.6" fill="#111" font-weight="bold" text-anchor="end" >51,171</text>
<rect x="627.2" y="1019.2" width="146.6" height="25.2" fill="#fbfbf9" stroke="#e0e0da" stroke-width="0.8"/>
<text x="630.2" y="1035.2" font-size="8.6" fill="#8e8e8e" font-weight="bold">日経比</text>
<text x="656.4" y="1035.0" font-size="9" fill="#8e8e8e" font-weight="bold" >:</text>
<rect x="663" y="1021.0" width="57" height="21.6" fill="#eef2ec"/>
<text x="714.4" y="1037.4" font-size="15.6" fill="#3a8a3a" font-weight="bold" text-anchor="end" >+53</text>
<rect x="722.1" y="1020.7" width="49" height="22.4" rx="2.6" fill="#eef2ec" stroke="#dcdcd6" stroke-width="1"/>
<path d="M723.0,1037.5h8.3l-4.2,-7.7z" fill="#3a8a3a"/>
<text x="732.9" y="1037.8" font-size="15.4" fill="#3a8a3a" font-weight="bold" >0.11</text>
<text x="763.9" y="1037.8" font-size="7.1" fill="#3a8a3a" font-weight="bold" >%</text>
</g>
</svg>
</body></html>
